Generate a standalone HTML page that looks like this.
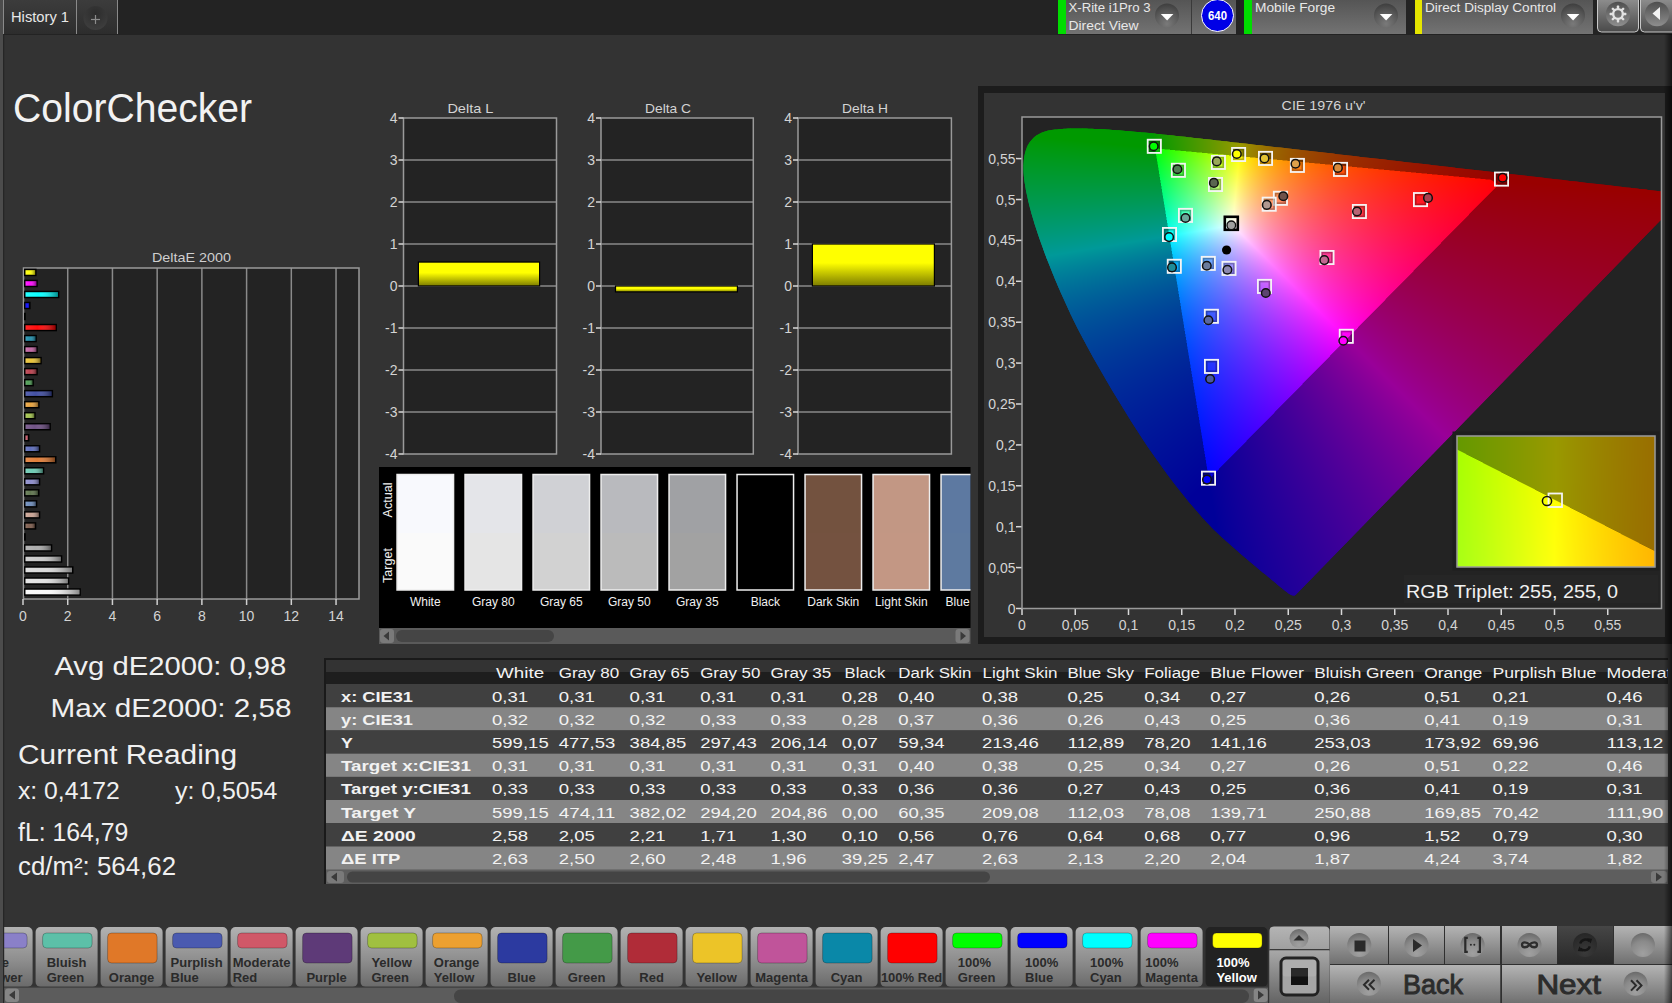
<!DOCTYPE html>
<html><head><meta charset="utf-8"><title>ColorChecker</title>
<style>html,body{margin:0;padding:0;background:#333;width:1672px;height:1003px;overflow:hidden;font-family:"Liberation Sans", sans-serif}
canvas{position:absolute}</style></head><body>
<svg width="1672" height="1003" style="position:absolute;left:0;top:0" font-family='"Liberation Sans", sans-serif'><defs><linearGradient id="tabg" x1="0" y1="0" x2="0" y2="1"><stop offset="0" stop-color="#3c3c3c"/><stop offset="1" stop-color="#2d2d2d"/></linearGradient><radialGradient id="plusg" cx="0.5" cy="0.3" r="0.7"><stop offset="0" stop-color="#2c2c2c"/><stop offset="1" stop-color="#3e3e3e"/></radialGradient><linearGradient id="boxg" x1="0" y1="0" x2="0" y2="1"><stop offset="0" stop-color="#555555"/><stop offset="1" stop-color="#737373"/></linearGradient><radialGradient id="ddg" cx="0.5" cy="0.85" r="0.9"><stop offset="0" stop-color="#7a7a7a"/><stop offset="0.55" stop-color="#5a5a5a"/><stop offset="1" stop-color="#3a3a3a"/></radialGradient><linearGradient id="gearbg" x1="0" y1="0" x2="0" y2="1"><stop offset="0" stop-color="#8c8c8c"/><stop offset="0.5" stop-color="#6a6a6a"/><stop offset="1" stop-color="#4a4a4a"/></linearGradient><linearGradient id="gcg" x1="0" y1="0" x2="0" y2="1"><stop offset="0" stop-color="#4e4e4e"/><stop offset="1" stop-color="#8e8e8e"/></linearGradient><linearGradient id="barshade" x1="0" y1="0" x2="1" y2="0"><stop offset="0" stop-color="#fff" stop-opacity="0.15"/><stop offset="0.4" stop-color="#fff" stop-opacity="0.05"/><stop offset="1" stop-color="#000" stop-opacity="0.45"/></linearGradient><linearGradient id="ybar" x1="0" y1="0" x2="0" y2="1"><stop offset="0" stop-color="#ffff00"/><stop offset="0.45" stop-color="#ffff00"/><stop offset="1" stop-color="#7c7c00"/></linearGradient><linearGradient id="ybar2" x1="0" y1="0" x2="0" y2="1"><stop offset="0" stop-color="#ffff00"/><stop offset="1" stop-color="#b0b000"/></linearGradient><linearGradient id="btng" x1="0" y1="0" x2="0" y2="1"><stop offset="0" stop-color="#b2b2b2"/><stop offset="0.55" stop-color="#8e8e8e"/><stop offset="1" stop-color="#6a6a6a"/></linearGradient><linearGradient id="ctlg" x1="0" y1="0" x2="0" y2="1"><stop offset="0" stop-color="#b4b4b4"/><stop offset="1" stop-color="#707070"/></linearGradient><linearGradient id="ctlg2" x1="0" y1="0" x2="0" y2="1"><stop offset="0" stop-color="#a8a8a8"/><stop offset="1" stop-color="#646464"/></linearGradient><linearGradient id="loopg" x1="0" y1="0" x2="0" y2="1"><stop offset="0" stop-color="#464646"/><stop offset="1" stop-color="#282828"/></linearGradient><radialGradient id="loopcg" cx="0.5" cy="0.8" r="0.8"><stop offset="0" stop-color="#3a3a3a"/><stop offset="1" stop-color="#262626"/></radialGradient><radialGradient id="cbg" cx="0.5" cy="0.85" r="0.85"><stop offset="0" stop-color="#a0a0a0"/><stop offset="0.6" stop-color="#8a8a8a"/><stop offset="1" stop-color="#6a6a6a"/></radialGradient><linearGradient id="edge" x1="0" y1="0" x2="1" y2="0"><stop offset="0" stop-color="#000" stop-opacity="0"/><stop offset="1" stop-color="#000" stop-opacity="0.6"/></linearGradient></defs><rect x="0.00" y="0.00" width="1672.00" height="1003.00" fill="#333333" /><rect x="0.00" y="0.00" width="1672.00" height="35.00" fill="#232323" /><rect x="0.00" y="0.00" width="3.00" height="1003.00" fill="#4c4c4c" /><rect x="3.00" y="0.00" width="73.00" height="34.00" fill="url(#tabg)" /><rect x="77.00" y="0.00" width="40.00" height="34.00" fill="url(#tabg)" /><line x1="3.50" y1="0.00" x2="3.50" y2="34.00" stroke="#8a8a8a" stroke-width="1" /><line x1="76.50" y1="0.00" x2="76.50" y2="34.00" stroke="#8a8a8a" stroke-width="1" /><line x1="117.50" y1="0.00" x2="117.50" y2="34.00" stroke="#8a8a8a" stroke-width="1" /><text x="11.00" y="22.00" font-size="14" fill="#e8e8e8" text-anchor="start" font-weight="normal" textLength="58.0" lengthAdjust="spacingAndGlyphs" >History 1</text><circle cx="95.5" cy="18" r="12" fill="url(#plusg)"/><line x1="91.00" y1="19.50" x2="100.00" y2="19.50" stroke="#8c8c8c" stroke-width="1.2" /><line x1="95.50" y1="15.00" x2="95.50" y2="24.00" stroke="#8c8c8c" stroke-width="1.2" /><rect x="1058.00" y="0.00" width="8.00" height="34.00" fill="#00dd00" /><rect x="1066.00" y="0.00" width="125.00" height="34.00" fill="url(#boxg)" /><rect x="1191.00" y="0.00" width="1.00" height="34.00" fill="#3a3a3a" /><rect x="1192.00" y="0.00" width="44.00" height="34.00" fill="url(#boxg)" /><text x="1068.50" y="11.50" font-size="12" fill="#e8e8e8" text-anchor="start" font-weight="normal" textLength="82.0" lengthAdjust="spacingAndGlyphs" >X-Rite i1Pro 3</text><text x="1068.50" y="29.50" font-size="12" fill="#e8e8e8" text-anchor="start" font-weight="normal" textLength="70.0" lengthAdjust="spacingAndGlyphs" >Direct View</text><circle cx="1167" cy="15.5" r="12" fill="url(#ddg)"/><path d="M1160.8,13.9 L1173.4,13.9 L1167.1,20.5 Z" fill="#fff"/><circle cx="1217.5" cy="15.5" r="16" fill="#0000e6" stroke="#fff" stroke-width="1"/><text x="1217.50" y="20.00" font-size="12" fill="#fff" text-anchor="middle" font-weight="bold" textLength="19.0" lengthAdjust="spacingAndGlyphs" >640</text><rect x="1244.00" y="0.00" width="8.00" height="34.00" fill="#00dd00" /><rect x="1252.00" y="0.00" width="154.00" height="34.00" fill="url(#boxg)" /><text x="1255.00" y="11.50" font-size="12" fill="#e8e8e8" text-anchor="start" font-weight="normal" textLength="80.0" lengthAdjust="spacingAndGlyphs" >Mobile Forge</text><circle cx="1386" cy="15.5" r="12" fill="url(#ddg)"/><path d="M1379.8,13.9 L1392.4,13.9 L1386.1,20.5 Z" fill="#fff"/><rect x="1415.00" y="0.00" width="7.00" height="34.00" fill="#e6e600" /><rect x="1422.00" y="0.00" width="171.00" height="34.00" fill="url(#boxg)" /><text x="1425.00" y="11.50" font-size="12" fill="#e8e8e8" text-anchor="start" font-weight="normal" textLength="131.0" lengthAdjust="spacingAndGlyphs" >Direct Display Control</text><circle cx="1573" cy="15.5" r="12" fill="url(#ddg)"/><path d="M1566.8,13.9 L1579.4,13.9 L1573.1,20.5 Z" fill="#fff"/><path d="M1597.5,0 V28 Q1597.5,32 1601.5,32 H1634.5 Q1638.5,32 1638.5,28 V0" fill="url(#gearbg)" stroke="#c8c8c8" stroke-width="1"/><path d="M1640.5,0 V28 Q1640.5,32 1644.5,32 H1672 V0 Z" fill="url(#gearbg)"/><path d="M1640.5,0 V28 Q1640.5,32 1644.5,32 H1672" fill="none" stroke="#c8c8c8" stroke-width="1"/><circle cx="1618" cy="14" r="12.2" fill="url(#gcg)"/><g transform="translate(1618,14)" fill="#e2e2e2"><rect x="-1.2" y="-8.4" width="2.4" height="3.6" rx="0.6" transform="rotate(0)"/><rect x="-1.2" y="-8.4" width="2.4" height="3.6" rx="0.6" transform="rotate(45)"/><rect x="-1.2" y="-8.4" width="2.4" height="3.6" rx="0.6" transform="rotate(90)"/><rect x="-1.2" y="-8.4" width="2.4" height="3.6" rx="0.6" transform="rotate(135)"/><rect x="-1.2" y="-8.4" width="2.4" height="3.6" rx="0.6" transform="rotate(180)"/><rect x="-1.2" y="-8.4" width="2.4" height="3.6" rx="0.6" transform="rotate(225)"/><rect x="-1.2" y="-8.4" width="2.4" height="3.6" rx="0.6" transform="rotate(270)"/><rect x="-1.2" y="-8.4" width="2.4" height="3.6" rx="0.6" transform="rotate(315)"/><circle r="4.85" fill="none" stroke="#e2e2e2" stroke-width="2.4"/></g><circle cx="1657" cy="14" r="12.2" fill="url(#gcg)"/><path d="M1652.5,13.5 L1660,7 L1660,20 Z" fill="#f4f4f4"/><text x="13.00" y="122.00" font-size="40" fill="#f2f2f2" text-anchor="start" font-weight="normal" textLength="239.0" lengthAdjust="spacingAndGlyphs" >ColorChecker</text><rect x="23.50" y="268.00" width="335.50" height="331.00" fill="#232323" /><text x="191.50" y="262.00" font-size="13.5" fill="#cfcfcf" text-anchor="middle" font-weight="normal" textLength="79.0" lengthAdjust="spacingAndGlyphs" >DeltaE 2000</text><line x1="67.72" y1="268.00" x2="67.72" y2="599.00" stroke="#8a8a8a" stroke-width="1.5" /><line x1="112.44" y1="268.00" x2="112.44" y2="599.00" stroke="#8a8a8a" stroke-width="1.5" /><line x1="157.16" y1="268.00" x2="157.16" y2="599.00" stroke="#8a8a8a" stroke-width="1.5" /><line x1="201.88" y1="268.00" x2="201.88" y2="599.00" stroke="#8a8a8a" stroke-width="1.5" /><line x1="246.60" y1="268.00" x2="246.60" y2="599.00" stroke="#8a8a8a" stroke-width="1.5" /><line x1="291.32" y1="268.00" x2="291.32" y2="599.00" stroke="#8a8a8a" stroke-width="1.5" /><line x1="336.04" y1="268.00" x2="336.04" y2="599.00" stroke="#8a8a8a" stroke-width="1.5" /><rect x="23.5" y="268" width="335.5" height="331" fill="none" stroke="#9a9a9a" stroke-width="1.5"/><line x1="23.00" y1="599.00" x2="23.00" y2="605.00" stroke="#d0d0d0" stroke-width="1.5" /><text x="23.00" y="621.00" font-size="14" fill="#d4d4d4" text-anchor="middle" font-weight="normal" >0</text><line x1="67.72" y1="599.00" x2="67.72" y2="605.00" stroke="#d0d0d0" stroke-width="1.5" /><text x="67.72" y="621.00" font-size="14" fill="#d4d4d4" text-anchor="middle" font-weight="normal" >2</text><line x1="112.44" y1="599.00" x2="112.44" y2="605.00" stroke="#d0d0d0" stroke-width="1.5" /><text x="112.44" y="621.00" font-size="14" fill="#d4d4d4" text-anchor="middle" font-weight="normal" >4</text><line x1="157.16" y1="599.00" x2="157.16" y2="605.00" stroke="#d0d0d0" stroke-width="1.5" /><text x="157.16" y="621.00" font-size="14" fill="#d4d4d4" text-anchor="middle" font-weight="normal" >6</text><line x1="201.88" y1="599.00" x2="201.88" y2="605.00" stroke="#d0d0d0" stroke-width="1.5" /><text x="201.88" y="621.00" font-size="14" fill="#d4d4d4" text-anchor="middle" font-weight="normal" >8</text><line x1="246.60" y1="599.00" x2="246.60" y2="605.00" stroke="#d0d0d0" stroke-width="1.5" /><text x="246.60" y="621.00" font-size="14" fill="#d4d4d4" text-anchor="middle" font-weight="normal" >10</text><line x1="291.32" y1="599.00" x2="291.32" y2="605.00" stroke="#d0d0d0" stroke-width="1.5" /><text x="291.32" y="621.00" font-size="14" fill="#d4d4d4" text-anchor="middle" font-weight="normal" >12</text><line x1="336.04" y1="599.00" x2="336.04" y2="605.00" stroke="#d0d0d0" stroke-width="1.5" /><text x="336.04" y="621.00" font-size="14" fill="#d4d4d4" text-anchor="middle" font-weight="normal" >14</text><rect x="24.75" y="269.45" width="11.10" height="6" fill="#ffff00" stroke="#000" stroke-width="1.5"/><rect x="25.5" y="270.20" width="9.60" height="4.5" fill="url(#barshade)"/><rect x="24.75" y="280.47" width="12.30" height="6" fill="#ff00ff" stroke="#000" stroke-width="1.5"/><rect x="25.5" y="281.22" width="10.80" height="4.5" fill="url(#barshade)"/><rect x="24.75" y="291.49" width="33.90" height="6" fill="#00ffff" stroke="#000" stroke-width="1.5"/><rect x="25.5" y="292.24" width="32.40" height="4.5" fill="url(#barshade)"/><rect x="24.75" y="302.51" width="5.10" height="6" fill="#0000ff" stroke="#000" stroke-width="1.5"/><rect x="25.5" y="303.26" width="3.60" height="4.5" fill="url(#barshade)"/><rect x="24.75" y="313.53" width="0.30" height="6" fill="#00ff00" stroke="#000" stroke-width="1.5"/><rect x="24.75" y="324.55" width="31.50" height="6" fill="#ff0000" stroke="#000" stroke-width="1.5"/><rect x="25.5" y="325.30" width="30.00" height="4.5" fill="url(#barshade)"/><rect x="24.75" y="335.57" width="11.40" height="6" fill="#1a8aa8" stroke="#000" stroke-width="1.5"/><rect x="25.5" y="336.32" width="9.90" height="4.5" fill="url(#barshade)"/><rect x="24.75" y="346.59" width="12.30" height="6" fill="#c060a0" stroke="#000" stroke-width="1.5"/><rect x="25.5" y="347.34" width="10.80" height="4.5" fill="url(#barshade)"/><rect x="24.75" y="357.61" width="16.30" height="6" fill="#e8c030" stroke="#000" stroke-width="1.5"/><rect x="25.5" y="358.36" width="14.80" height="4.5" fill="url(#barshade)"/><rect x="24.75" y="368.63" width="12.30" height="6" fill="#b83a48" stroke="#000" stroke-width="1.5"/><rect x="25.5" y="369.38" width="10.80" height="4.5" fill="url(#barshade)"/><rect x="24.75" y="379.65" width="8.40" height="6" fill="#4a9a50" stroke="#000" stroke-width="1.5"/><rect x="25.5" y="380.40" width="6.90" height="4.5" fill="url(#barshade)"/><rect x="24.75" y="390.67" width="27.60" height="6" fill="#3a48a0" stroke="#000" stroke-width="1.5"/><rect x="25.5" y="391.42" width="26.10" height="4.5" fill="url(#barshade)"/><rect x="24.75" y="401.69" width="14.10" height="6" fill="#e8a038" stroke="#000" stroke-width="1.5"/><rect x="25.5" y="402.44" width="12.60" height="4.5" fill="url(#barshade)"/><rect x="24.75" y="412.71" width="10.20" height="6" fill="#a0c048" stroke="#000" stroke-width="1.5"/><rect x="25.5" y="413.46" width="8.70" height="4.5" fill="url(#barshade)"/><rect x="24.75" y="423.73" width="25.40" height="6" fill="#6a4a80" stroke="#000" stroke-width="1.5"/><rect x="25.5" y="424.48" width="23.90" height="4.5" fill="url(#barshade)"/><rect x="24.75" y="434.75" width="3.90" height="6" fill="#c85868" stroke="#000" stroke-width="1.5"/><rect x="25.5" y="435.50" width="2.40" height="4.5" fill="url(#barshade)"/><rect x="24.75" y="445.77" width="14.80" height="6" fill="#5868b8" stroke="#000" stroke-width="1.5"/><rect x="25.5" y="446.52" width="13.30" height="4.5" fill="url(#barshade)"/><rect x="24.75" y="456.79" width="31.00" height="6" fill="#e07830" stroke="#000" stroke-width="1.5"/><rect x="25.5" y="457.54" width="29.50" height="4.5" fill="url(#barshade)"/><rect x="24.75" y="467.81" width="18.80" height="6" fill="#68c8b0" stroke="#000" stroke-width="1.5"/><rect x="25.5" y="468.56" width="17.30" height="4.5" fill="url(#barshade)"/><rect x="24.75" y="478.83" width="14.80" height="6" fill="#8888c8" stroke="#000" stroke-width="1.5"/><rect x="25.5" y="479.58" width="13.30" height="4.5" fill="url(#barshade)"/><rect x="24.75" y="489.85" width="14.00" height="6" fill="#5a7048" stroke="#000" stroke-width="1.5"/><rect x="25.5" y="490.60" width="12.50" height="4.5" fill="url(#barshade)"/><rect x="24.75" y="500.87" width="11.80" height="6" fill="#6888b8" stroke="#000" stroke-width="1.5"/><rect x="25.5" y="501.62" width="10.30" height="4.5" fill="url(#barshade)"/><rect x="24.75" y="511.89" width="14.80" height="6" fill="#c8a090" stroke="#000" stroke-width="1.5"/><rect x="25.5" y="512.64" width="13.30" height="4.5" fill="url(#barshade)"/><rect x="24.75" y="522.91" width="10.80" height="6" fill="#7a5848" stroke="#000" stroke-width="1.5"/><rect x="25.5" y="523.66" width="9.30" height="4.5" fill="url(#barshade)"/><rect x="24.75" y="533.93" width="0.30" height="6" fill="#000000" stroke="#000" stroke-width="1.5"/><rect x="24.75" y="544.95" width="26.80" height="6" fill="#a8a8a8" stroke="#000" stroke-width="1.5"/><rect x="25.5" y="545.70" width="25.30" height="4.5" fill="url(#barshade)"/><rect x="24.75" y="555.97" width="36.80" height="6" fill="#c8c8c8" stroke="#000" stroke-width="1.5"/><rect x="25.5" y="556.72" width="35.30" height="4.5" fill="url(#barshade)"/><rect x="24.75" y="566.99" width="48.00" height="6" fill="#d8d8d8" stroke="#000" stroke-width="1.5"/><rect x="25.5" y="567.74" width="46.50" height="4.5" fill="url(#barshade)"/><rect x="24.75" y="578.01" width="43.80" height="6" fill="#e0e0e0" stroke="#000" stroke-width="1.5"/><rect x="25.5" y="578.76" width="42.30" height="4.5" fill="url(#barshade)"/><rect x="24.75" y="589.03" width="55.40" height="6" fill="#f8f8f8" stroke="#000" stroke-width="1.5"/><rect x="25.5" y="589.78" width="53.90" height="4.5" fill="url(#barshade)"/><rect x="403.50" y="118.00" width="153.00" height="336.00" fill="#232323" /><text x="470.40" y="113.00" font-size="13.5" fill="#d4d4d4" text-anchor="middle" font-weight="normal" textLength="46.0" lengthAdjust="spacingAndGlyphs" >Delta L</text><line x1="403.50" y1="412.00" x2="556.50" y2="412.00" stroke="#8a8a8a" stroke-width="1.5" /><line x1="403.50" y1="370.00" x2="556.50" y2="370.00" stroke="#8a8a8a" stroke-width="1.5" /><line x1="403.50" y1="328.00" x2="556.50" y2="328.00" stroke="#8a8a8a" stroke-width="1.5" /><line x1="403.50" y1="286.00" x2="556.50" y2="286.00" stroke="#8a8a8a" stroke-width="1.5" /><line x1="403.50" y1="244.00" x2="556.50" y2="244.00" stroke="#8a8a8a" stroke-width="1.5" /><line x1="403.50" y1="202.00" x2="556.50" y2="202.00" stroke="#8a8a8a" stroke-width="1.5" /><line x1="403.50" y1="160.00" x2="556.50" y2="160.00" stroke="#8a8a8a" stroke-width="1.5" /><rect x="403.5" y="118" width="153.0" height="336" fill="none" stroke="#9a9a9a" stroke-width="1.5"/><line x1="398.50" y1="454.00" x2="403.50" y2="454.00" stroke="#d8d8d8" stroke-width="1.5" /><text x="397.50" y="459.00" font-size="14" fill="#d4d4d4" text-anchor="end" font-weight="normal" >-4</text><line x1="398.50" y1="412.00" x2="403.50" y2="412.00" stroke="#d8d8d8" stroke-width="1.5" /><text x="397.50" y="417.00" font-size="14" fill="#d4d4d4" text-anchor="end" font-weight="normal" >-3</text><line x1="398.50" y1="370.00" x2="403.50" y2="370.00" stroke="#d8d8d8" stroke-width="1.5" /><text x="397.50" y="375.00" font-size="14" fill="#d4d4d4" text-anchor="end" font-weight="normal" >-2</text><line x1="398.50" y1="328.00" x2="403.50" y2="328.00" stroke="#d8d8d8" stroke-width="1.5" /><text x="397.50" y="333.00" font-size="14" fill="#d4d4d4" text-anchor="end" font-weight="normal" >-1</text><line x1="398.50" y1="286.00" x2="403.50" y2="286.00" stroke="#d8d8d8" stroke-width="1.5" /><text x="397.50" y="291.00" font-size="14" fill="#d4d4d4" text-anchor="end" font-weight="normal" >0</text><line x1="398.50" y1="244.00" x2="403.50" y2="244.00" stroke="#d8d8d8" stroke-width="1.5" /><text x="397.50" y="249.00" font-size="14" fill="#d4d4d4" text-anchor="end" font-weight="normal" >1</text><line x1="398.50" y1="202.00" x2="403.50" y2="202.00" stroke="#d8d8d8" stroke-width="1.5" /><text x="397.50" y="207.00" font-size="14" fill="#d4d4d4" text-anchor="end" font-weight="normal" >2</text><line x1="398.50" y1="160.00" x2="403.50" y2="160.00" stroke="#d8d8d8" stroke-width="1.5" /><text x="397.50" y="165.00" font-size="14" fill="#d4d4d4" text-anchor="end" font-weight="normal" >3</text><line x1="398.50" y1="118.00" x2="403.50" y2="118.00" stroke="#d8d8d8" stroke-width="1.5" /><text x="397.50" y="123.00" font-size="14" fill="#d4d4d4" text-anchor="end" font-weight="normal" >4</text><rect x="418.4" y="262.06" width="121.2" height="23.9" fill="url(#ybar)" stroke="#000" stroke-width="1.2"/><rect x="601.00" y="118.00" width="152.30" height="336.00" fill="#232323" /><text x="668.00" y="113.00" font-size="13.5" fill="#d4d4d4" text-anchor="middle" font-weight="normal" textLength="46.0" lengthAdjust="spacingAndGlyphs" >Delta C</text><line x1="601.00" y1="412.00" x2="753.30" y2="412.00" stroke="#8a8a8a" stroke-width="1.5" /><line x1="601.00" y1="370.00" x2="753.30" y2="370.00" stroke="#8a8a8a" stroke-width="1.5" /><line x1="601.00" y1="328.00" x2="753.30" y2="328.00" stroke="#8a8a8a" stroke-width="1.5" /><line x1="601.00" y1="286.00" x2="753.30" y2="286.00" stroke="#8a8a8a" stroke-width="1.5" /><line x1="601.00" y1="244.00" x2="753.30" y2="244.00" stroke="#8a8a8a" stroke-width="1.5" /><line x1="601.00" y1="202.00" x2="753.30" y2="202.00" stroke="#8a8a8a" stroke-width="1.5" /><line x1="601.00" y1="160.00" x2="753.30" y2="160.00" stroke="#8a8a8a" stroke-width="1.5" /><rect x="601" y="118" width="152.3" height="336" fill="none" stroke="#9a9a9a" stroke-width="1.5"/><line x1="596.00" y1="454.00" x2="601.00" y2="454.00" stroke="#d8d8d8" stroke-width="1.5" /><text x="595.00" y="459.00" font-size="14" fill="#d4d4d4" text-anchor="end" font-weight="normal" >-4</text><line x1="596.00" y1="412.00" x2="601.00" y2="412.00" stroke="#d8d8d8" stroke-width="1.5" /><text x="595.00" y="417.00" font-size="14" fill="#d4d4d4" text-anchor="end" font-weight="normal" >-3</text><line x1="596.00" y1="370.00" x2="601.00" y2="370.00" stroke="#d8d8d8" stroke-width="1.5" /><text x="595.00" y="375.00" font-size="14" fill="#d4d4d4" text-anchor="end" font-weight="normal" >-2</text><line x1="596.00" y1="328.00" x2="601.00" y2="328.00" stroke="#d8d8d8" stroke-width="1.5" /><text x="595.00" y="333.00" font-size="14" fill="#d4d4d4" text-anchor="end" font-weight="normal" >-1</text><line x1="596.00" y1="286.00" x2="601.00" y2="286.00" stroke="#d8d8d8" stroke-width="1.5" /><text x="595.00" y="291.00" font-size="14" fill="#d4d4d4" text-anchor="end" font-weight="normal" >0</text><line x1="596.00" y1="244.00" x2="601.00" y2="244.00" stroke="#d8d8d8" stroke-width="1.5" /><text x="595.00" y="249.00" font-size="14" fill="#d4d4d4" text-anchor="end" font-weight="normal" >1</text><line x1="596.00" y1="202.00" x2="601.00" y2="202.00" stroke="#d8d8d8" stroke-width="1.5" /><text x="595.00" y="207.00" font-size="14" fill="#d4d4d4" text-anchor="end" font-weight="normal" >2</text><line x1="596.00" y1="160.00" x2="601.00" y2="160.00" stroke="#d8d8d8" stroke-width="1.5" /><text x="595.00" y="165.00" font-size="14" fill="#d4d4d4" text-anchor="end" font-weight="normal" >3</text><line x1="596.00" y1="118.00" x2="601.00" y2="118.00" stroke="#d8d8d8" stroke-width="1.5" /><text x="595.00" y="123.00" font-size="14" fill="#d4d4d4" text-anchor="end" font-weight="normal" >4</text><rect x="615.5" y="286.0" width="121.9" height="5.9" fill="url(#ybar)" stroke="#000" stroke-width="1.2"/><rect x="798.00" y="118.00" width="153.40" height="336.00" fill="#232323" /><text x="865.00" y="113.00" font-size="13.5" fill="#d4d4d4" text-anchor="middle" font-weight="normal" textLength="46.0" lengthAdjust="spacingAndGlyphs" >Delta H</text><line x1="798.00" y1="412.00" x2="951.40" y2="412.00" stroke="#8a8a8a" stroke-width="1.5" /><line x1="798.00" y1="370.00" x2="951.40" y2="370.00" stroke="#8a8a8a" stroke-width="1.5" /><line x1="798.00" y1="328.00" x2="951.40" y2="328.00" stroke="#8a8a8a" stroke-width="1.5" /><line x1="798.00" y1="286.00" x2="951.40" y2="286.00" stroke="#8a8a8a" stroke-width="1.5" /><line x1="798.00" y1="244.00" x2="951.40" y2="244.00" stroke="#8a8a8a" stroke-width="1.5" /><line x1="798.00" y1="202.00" x2="951.40" y2="202.00" stroke="#8a8a8a" stroke-width="1.5" /><line x1="798.00" y1="160.00" x2="951.40" y2="160.00" stroke="#8a8a8a" stroke-width="1.5" /><rect x="798" y="118" width="153.4" height="336" fill="none" stroke="#9a9a9a" stroke-width="1.5"/><line x1="793.00" y1="454.00" x2="798.00" y2="454.00" stroke="#d8d8d8" stroke-width="1.5" /><text x="792.00" y="459.00" font-size="14" fill="#d4d4d4" text-anchor="end" font-weight="normal" >-4</text><line x1="793.00" y1="412.00" x2="798.00" y2="412.00" stroke="#d8d8d8" stroke-width="1.5" /><text x="792.00" y="417.00" font-size="14" fill="#d4d4d4" text-anchor="end" font-weight="normal" >-3</text><line x1="793.00" y1="370.00" x2="798.00" y2="370.00" stroke="#d8d8d8" stroke-width="1.5" /><text x="792.00" y="375.00" font-size="14" fill="#d4d4d4" text-anchor="end" font-weight="normal" >-2</text><line x1="793.00" y1="328.00" x2="798.00" y2="328.00" stroke="#d8d8d8" stroke-width="1.5" /><text x="792.00" y="333.00" font-size="14" fill="#d4d4d4" text-anchor="end" font-weight="normal" >-1</text><line x1="793.00" y1="286.00" x2="798.00" y2="286.00" stroke="#d8d8d8" stroke-width="1.5" /><text x="792.00" y="291.00" font-size="14" fill="#d4d4d4" text-anchor="end" font-weight="normal" >0</text><line x1="793.00" y1="244.00" x2="798.00" y2="244.00" stroke="#d8d8d8" stroke-width="1.5" /><text x="792.00" y="249.00" font-size="14" fill="#d4d4d4" text-anchor="end" font-weight="normal" >1</text><line x1="793.00" y1="202.00" x2="798.00" y2="202.00" stroke="#d8d8d8" stroke-width="1.5" /><text x="792.00" y="207.00" font-size="14" fill="#d4d4d4" text-anchor="end" font-weight="normal" >2</text><line x1="793.00" y1="160.00" x2="798.00" y2="160.00" stroke="#d8d8d8" stroke-width="1.5" /><text x="792.00" y="165.00" font-size="14" fill="#d4d4d4" text-anchor="end" font-weight="normal" >3</text><line x1="793.00" y1="118.00" x2="798.00" y2="118.00" stroke="#d8d8d8" stroke-width="1.5" /><text x="792.00" y="123.00" font-size="14" fill="#d4d4d4" text-anchor="end" font-weight="normal" >4</text><rect x="812.4" y="244.0" width="122.0" height="42.0" fill="url(#ybar)" stroke="#000" stroke-width="1.2"/><rect x="379.00" y="467.00" width="591.50" height="161.00" fill="#000000" /><clipPath id="swclip"><rect x="379" y="467" width="591.5" height="161"/></clipPath><g clip-path="url(#swclip)"><rect x="397.05" y="474.5" width="56.5" height="58.5" fill="#f8f9fd"/><rect x="397.05" y="533" width="56.5" height="57" fill="#fafafa"/><rect x="397.05" y="474.5" width="56.5" height="115.5" fill="none" stroke="#eeeeee" stroke-width="1.5"/><text x="425.3" y="605.8" font-size="12" fill="#f0f0f0" text-anchor="middle">White</text><rect x="465.05" y="474.5" width="56.5" height="58.5" fill="#e4e5e9"/><rect x="465.05" y="533" width="56.5" height="57" fill="#e5e5e5"/><rect x="465.05" y="474.5" width="56.5" height="115.5" fill="none" stroke="#eeeeee" stroke-width="1.5"/><text x="493.3" y="605.8" font-size="12" fill="#f0f0f0" text-anchor="middle">Gray 80</text><rect x="533.05" y="474.5" width="56.5" height="58.5" fill="#d0d1d5"/><rect x="533.05" y="533" width="56.5" height="57" fill="#d2d2d2"/><rect x="533.05" y="474.5" width="56.5" height="115.5" fill="none" stroke="#eeeeee" stroke-width="1.5"/><text x="561.3" y="605.8" font-size="12" fill="#f0f0f0" text-anchor="middle">Gray 65</text><rect x="601.05" y="474.5" width="56.5" height="58.5" fill="#b9babe"/><rect x="601.05" y="533" width="56.5" height="57" fill="#bbbbbb"/><rect x="601.05" y="474.5" width="56.5" height="115.5" fill="none" stroke="#eeeeee" stroke-width="1.5"/><text x="629.3" y="605.8" font-size="12" fill="#f0f0f0" text-anchor="middle">Gray 50</text><rect x="669.05" y="474.5" width="56.5" height="58.5" fill="#a0a1a4"/><rect x="669.05" y="533" width="56.5" height="57" fill="#a2a2a2"/><rect x="669.05" y="474.5" width="56.5" height="115.5" fill="none" stroke="#eeeeee" stroke-width="1.5"/><text x="697.3" y="605.8" font-size="12" fill="#f0f0f0" text-anchor="middle">Gray 35</text><rect x="737.05" y="474.5" width="56.5" height="58.5" fill="#000000"/><rect x="737.05" y="533" width="56.5" height="57" fill="#000000"/><rect x="737.05" y="474.5" width="56.5" height="115.5" fill="none" stroke="#eeeeee" stroke-width="1.5"/><text x="765.3" y="605.8" font-size="12" fill="#f0f0f0" text-anchor="middle">Black</text><rect x="805.05" y="474.5" width="56.5" height="58.5" fill="#73523f"/><rect x="805.05" y="533" width="56.5" height="57" fill="#745240"/><rect x="805.05" y="474.5" width="56.5" height="115.5" fill="none" stroke="#eeeeee" stroke-width="1.5"/><text x="833.3" y="605.8" font-size="12" fill="#f0f0f0" text-anchor="middle">Dark Skin</text><rect x="873.05" y="474.5" width="56.5" height="58.5" fill="#c29784"/><rect x="873.05" y="533" width="56.5" height="57" fill="#c39784"/><rect x="873.05" y="474.5" width="56.5" height="115.5" fill="none" stroke="#eeeeee" stroke-width="1.5"/><text x="901.3" y="605.8" font-size="12" fill="#f0f0f0" text-anchor="middle">Light Skin</text><rect x="941.05" y="474.5" width="56.5" height="58.5" fill="#5d79a1"/><rect x="941.05" y="533" width="56.5" height="57" fill="#5e7aa0"/><rect x="941.05" y="474.5" width="56.5" height="115.5" fill="none" stroke="#eeeeee" stroke-width="1.5"/><text x="969.3" y="605.8" font-size="12" fill="#f0f0f0" text-anchor="middle">Blue Sky</text></g><text transform="translate(392,500) rotate(-90)" font-size="12" fill="#f0f0f0" text-anchor="middle" textLength="35" lengthAdjust="spacingAndGlyphs">Actual</text><text transform="translate(392,565.5) rotate(-90)" font-size="12" fill="#f0f0f0" text-anchor="middle" textLength="35" lengthAdjust="spacingAndGlyphs">Target</text><rect x="379.00" y="628.00" width="591.50" height="16.00" fill="#5a5a5a" /><rect x="380" y="629" width="14" height="14" rx="3" fill="#7a7a7a"/><path d="M383.5,636 L389,631.5 L389,640.5 Z" fill="#3a3a3a"/><rect x="396" y="630" width="158" height="12" rx="6" fill="#454545"/><rect x="955.5" y="629" width="14" height="14" rx="3" fill="#7a7a7a"/><path d="M966,636 L960.5,631.5 L960.5,640.5 Z" fill="#3a3a3a"/><rect x="978.00" y="86.00" width="694.00" height="558.00" fill="#1c1c1c" /><rect x="984.00" y="93.00" width="681.00" height="544.00" fill="#333333" /><text x="1323.60" y="110.00" font-size="13" fill="#d4d4d4" text-anchor="middle" font-weight="normal" textLength="84.0" lengthAdjust="spacingAndGlyphs" >CIE 1976 u'v'</text><rect x="1022.00" y="117.00" width="639.50" height="491.50" fill="#232323" /><line x1="1016.00" y1="608.50" x2="1022.00" y2="608.50" stroke="#d8d8d8" stroke-width="1.5" /><text x="1015.50" y="613.50" font-size="14" fill="#d4d4d4" text-anchor="end" font-weight="normal" >0</text><line x1="1022.00" y1="608.50" x2="1022.00" y2="615.00" stroke="#d8d8d8" stroke-width="1.5" /><text x="1022.00" y="630.00" font-size="14" fill="#d4d4d4" text-anchor="middle" font-weight="normal" >0</text><line x1="1016.00" y1="567.60" x2="1022.00" y2="567.60" stroke="#d8d8d8" stroke-width="1.5" /><text x="1015.50" y="572.60" font-size="14" fill="#d4d4d4" text-anchor="end" font-weight="normal" >0,05</text><line x1="1075.25" y1="608.50" x2="1075.25" y2="615.00" stroke="#d8d8d8" stroke-width="1.5" /><text x="1075.25" y="630.00" font-size="14" fill="#d4d4d4" text-anchor="middle" font-weight="normal" >0,05</text><line x1="1016.00" y1="526.70" x2="1022.00" y2="526.70" stroke="#d8d8d8" stroke-width="1.5" /><text x="1015.50" y="531.70" font-size="14" fill="#d4d4d4" text-anchor="end" font-weight="normal" >0,1</text><line x1="1128.50" y1="608.50" x2="1128.50" y2="615.00" stroke="#d8d8d8" stroke-width="1.5" /><text x="1128.50" y="630.00" font-size="14" fill="#d4d4d4" text-anchor="middle" font-weight="normal" >0,1</text><line x1="1016.00" y1="485.80" x2="1022.00" y2="485.80" stroke="#d8d8d8" stroke-width="1.5" /><text x="1015.50" y="490.80" font-size="14" fill="#d4d4d4" text-anchor="end" font-weight="normal" >0,15</text><line x1="1181.75" y1="608.50" x2="1181.75" y2="615.00" stroke="#d8d8d8" stroke-width="1.5" /><text x="1181.75" y="630.00" font-size="14" fill="#d4d4d4" text-anchor="middle" font-weight="normal" >0,15</text><line x1="1016.00" y1="444.90" x2="1022.00" y2="444.90" stroke="#d8d8d8" stroke-width="1.5" /><text x="1015.50" y="449.90" font-size="14" fill="#d4d4d4" text-anchor="end" font-weight="normal" >0,2</text><line x1="1235.00" y1="608.50" x2="1235.00" y2="615.00" stroke="#d8d8d8" stroke-width="1.5" /><text x="1235.00" y="630.00" font-size="14" fill="#d4d4d4" text-anchor="middle" font-weight="normal" >0,2</text><line x1="1016.00" y1="404.00" x2="1022.00" y2="404.00" stroke="#d8d8d8" stroke-width="1.5" /><text x="1015.50" y="409.00" font-size="14" fill="#d4d4d4" text-anchor="end" font-weight="normal" >0,25</text><line x1="1288.25" y1="608.50" x2="1288.25" y2="615.00" stroke="#d8d8d8" stroke-width="1.5" /><text x="1288.25" y="630.00" font-size="14" fill="#d4d4d4" text-anchor="middle" font-weight="normal" >0,25</text><line x1="1016.00" y1="363.10" x2="1022.00" y2="363.10" stroke="#d8d8d8" stroke-width="1.5" /><text x="1015.50" y="368.10" font-size="14" fill="#d4d4d4" text-anchor="end" font-weight="normal" >0,3</text><line x1="1341.50" y1="608.50" x2="1341.50" y2="615.00" stroke="#d8d8d8" stroke-width="1.5" /><text x="1341.50" y="630.00" font-size="14" fill="#d4d4d4" text-anchor="middle" font-weight="normal" >0,3</text><line x1="1016.00" y1="322.20" x2="1022.00" y2="322.20" stroke="#d8d8d8" stroke-width="1.5" /><text x="1015.50" y="327.20" font-size="14" fill="#d4d4d4" text-anchor="end" font-weight="normal" >0,35</text><line x1="1394.75" y1="608.50" x2="1394.75" y2="615.00" stroke="#d8d8d8" stroke-width="1.5" /><text x="1394.75" y="630.00" font-size="14" fill="#d4d4d4" text-anchor="middle" font-weight="normal" >0,35</text><line x1="1016.00" y1="281.30" x2="1022.00" y2="281.30" stroke="#d8d8d8" stroke-width="1.5" /><text x="1015.50" y="286.30" font-size="14" fill="#d4d4d4" text-anchor="end" font-weight="normal" >0,4</text><line x1="1448.00" y1="608.50" x2="1448.00" y2="615.00" stroke="#d8d8d8" stroke-width="1.5" /><text x="1448.00" y="630.00" font-size="14" fill="#d4d4d4" text-anchor="middle" font-weight="normal" >0,4</text><line x1="1016.00" y1="240.40" x2="1022.00" y2="240.40" stroke="#d8d8d8" stroke-width="1.5" /><text x="1015.50" y="245.40" font-size="14" fill="#d4d4d4" text-anchor="end" font-weight="normal" >0,45</text><line x1="1501.25" y1="608.50" x2="1501.25" y2="615.00" stroke="#d8d8d8" stroke-width="1.5" /><text x="1501.25" y="630.00" font-size="14" fill="#d4d4d4" text-anchor="middle" font-weight="normal" >0,45</text><line x1="1016.00" y1="199.50" x2="1022.00" y2="199.50" stroke="#d8d8d8" stroke-width="1.5" /><text x="1015.50" y="204.50" font-size="14" fill="#d4d4d4" text-anchor="end" font-weight="normal" >0,5</text><line x1="1554.50" y1="608.50" x2="1554.50" y2="615.00" stroke="#d8d8d8" stroke-width="1.5" /><text x="1554.50" y="630.00" font-size="14" fill="#d4d4d4" text-anchor="middle" font-weight="normal" >0,5</text><line x1="1016.00" y1="158.60" x2="1022.00" y2="158.60" stroke="#d8d8d8" stroke-width="1.5" /><text x="1015.50" y="163.60" font-size="14" fill="#d4d4d4" text-anchor="end" font-weight="normal" >0,55</text><line x1="1607.75" y1="608.50" x2="1607.75" y2="615.00" stroke="#d8d8d8" stroke-width="1.5" /><text x="1607.75" y="630.00" font-size="14" fill="#d4d4d4" text-anchor="middle" font-weight="normal" >0,55</text><text x="54.40" y="675.00" font-size="26.5" fill="#f0f0f0" text-anchor="start" font-weight="normal" textLength="232.0" lengthAdjust="spacingAndGlyphs" >Avg dE2000: 0,98</text><text x="50.50" y="716.50" font-size="26.5" fill="#f0f0f0" text-anchor="start" font-weight="normal" textLength="241.0" lengthAdjust="spacingAndGlyphs" >Max dE2000: 2,58</text><text x="18.00" y="764.40" font-size="27" fill="#f0f0f0" text-anchor="start" font-weight="normal" textLength="219.0" lengthAdjust="spacingAndGlyphs" >Current Reading</text><text x="18.00" y="798.60" font-size="23" fill="#f0f0f0" text-anchor="start" font-weight="normal" textLength="101.7" lengthAdjust="spacingAndGlyphs" >x: 0,4172</text><text x="175.00" y="798.60" font-size="23" fill="#f0f0f0" text-anchor="start" font-weight="normal" textLength="102.3" lengthAdjust="spacingAndGlyphs" >y: 0,5054</text><text x="18.00" y="840.90" font-size="25" fill="#f0f0f0" text-anchor="start" font-weight="normal" textLength="110.3" lengthAdjust="spacingAndGlyphs" >fL: 164,79</text><text x="18.00" y="874.60" font-size="25" fill="#f0f0f0" text-anchor="start" font-weight="normal" textLength="158.0" lengthAdjust="spacingAndGlyphs" >cd/m²: 564,62</text><rect x="324.00" y="658.00" width="1344.00" height="226.00" fill="#1a1a1a" /><rect x="326.00" y="660.00" width="1342.00" height="12.00" fill="#333333" /><rect x="326.00" y="672.00" width="1342.00" height="12.00" fill="#1e1e1e" /><clipPath id="tclip"><rect x="326" y="660" width="1342" height="210"/></clipPath><g clip-path="url(#tclip)"><rect x="326" y="684.0" width="1342" height="23.4" fill="#404040"/><text x="341" y="701.5" font-size="14.7" font-weight="bold" fill="#f2f2f2" textLength="72" lengthAdjust="spacingAndGlyphs">x: CIE31</text><rect x="326" y="707.2" width="1342" height="23.4" fill="#858585"/><text x="341" y="724.7" font-size="14.7" font-weight="bold" fill="#f2f2f2" textLength="72" lengthAdjust="spacingAndGlyphs">y: CIE31</text><rect x="326" y="730.4" width="1342" height="23.4" fill="#404040"/><text x="341" y="747.9" font-size="14.7" font-weight="bold" fill="#f2f2f2" textLength="11.8" lengthAdjust="spacingAndGlyphs">Y</text><rect x="326" y="753.6" width="1342" height="23.4" fill="#858585"/><text x="341" y="771.1" font-size="14.7" font-weight="bold" fill="#f2f2f2" textLength="130" lengthAdjust="spacingAndGlyphs">Target x:CIE31</text><rect x="326" y="776.8" width="1342" height="23.4" fill="#404040"/><text x="341" y="794.3" font-size="14.7" font-weight="bold" fill="#f2f2f2" textLength="130" lengthAdjust="spacingAndGlyphs">Target y:CIE31</text><rect x="326" y="800.0" width="1342" height="23.4" fill="#858585"/><text x="341" y="817.5" font-size="14.7" font-weight="bold" fill="#f2f2f2" textLength="75.2" lengthAdjust="spacingAndGlyphs">Target Y</text><rect x="326" y="823.2" width="1342" height="23.4" fill="#404040"/><text x="341" y="840.7" font-size="14.7" font-weight="bold" fill="#f2f2f2" textLength="74.8" lengthAdjust="spacingAndGlyphs">ΔE 2000</text><rect x="326" y="846.4" width="1342" height="23.4" fill="#858585"/><text x="341" y="863.9" font-size="14.7" font-weight="bold" fill="#f2f2f2" textLength="59.4" lengthAdjust="spacingAndGlyphs">ΔE ITP</text><text x="496.1" y="677.5" font-size="14" fill="#f2f2f2" textLength="48" lengthAdjust="spacingAndGlyphs">White</text><text x="492.0" y="701.5" font-size="14.5" fill="#f2f2f2" textLength="36.1" lengthAdjust="spacingAndGlyphs">0,31</text><text x="492.0" y="724.7" font-size="14.5" fill="#f2f2f2" textLength="36.1" lengthAdjust="spacingAndGlyphs">0,32</text><text x="492.0" y="747.9" font-size="14.5" fill="#f2f2f2" textLength="56.7" lengthAdjust="spacingAndGlyphs">599,15</text><text x="492.0" y="771.1" font-size="14.5" fill="#f2f2f2" textLength="36.1" lengthAdjust="spacingAndGlyphs">0,31</text><text x="492.0" y="794.3" font-size="14.5" fill="#f2f2f2" textLength="36.1" lengthAdjust="spacingAndGlyphs">0,33</text><text x="492.0" y="817.5" font-size="14.5" fill="#f2f2f2" textLength="56.7" lengthAdjust="spacingAndGlyphs">599,15</text><text x="492.0" y="840.7" font-size="14.5" fill="#f2f2f2" textLength="36.1" lengthAdjust="spacingAndGlyphs">2,58</text><text x="492.0" y="863.9" font-size="14.5" fill="#f2f2f2" textLength="36.1" lengthAdjust="spacingAndGlyphs">2,63</text><text x="558.7" y="677.5" font-size="14" fill="#f2f2f2" textLength="60.6" lengthAdjust="spacingAndGlyphs">Gray 80</text><text x="558.7" y="701.5" font-size="14.5" fill="#f2f2f2" textLength="36.1" lengthAdjust="spacingAndGlyphs">0,31</text><text x="558.7" y="724.7" font-size="14.5" fill="#f2f2f2" textLength="36.1" lengthAdjust="spacingAndGlyphs">0,32</text><text x="558.7" y="747.9" font-size="14.5" fill="#f2f2f2" textLength="56.7" lengthAdjust="spacingAndGlyphs">477,53</text><text x="558.7" y="771.1" font-size="14.5" fill="#f2f2f2" textLength="36.1" lengthAdjust="spacingAndGlyphs">0,31</text><text x="558.7" y="794.3" font-size="14.5" fill="#f2f2f2" textLength="36.1" lengthAdjust="spacingAndGlyphs">0,33</text><text x="558.7" y="817.5" font-size="14.5" fill="#f2f2f2" textLength="56.7" lengthAdjust="spacingAndGlyphs">474,11</text><text x="558.7" y="840.7" font-size="14.5" fill="#f2f2f2" textLength="36.1" lengthAdjust="spacingAndGlyphs">2,05</text><text x="558.7" y="863.9" font-size="14.5" fill="#f2f2f2" textLength="36.1" lengthAdjust="spacingAndGlyphs">2,50</text><text x="629.5" y="677.5" font-size="14" fill="#f2f2f2" textLength="59.8" lengthAdjust="spacingAndGlyphs">Gray 65</text><text x="629.6" y="701.5" font-size="14.5" fill="#f2f2f2" textLength="36.1" lengthAdjust="spacingAndGlyphs">0,31</text><text x="629.6" y="724.7" font-size="14.5" fill="#f2f2f2" textLength="36.1" lengthAdjust="spacingAndGlyphs">0,32</text><text x="629.6" y="747.9" font-size="14.5" fill="#f2f2f2" textLength="56.7" lengthAdjust="spacingAndGlyphs">384,85</text><text x="629.6" y="771.1" font-size="14.5" fill="#f2f2f2" textLength="36.1" lengthAdjust="spacingAndGlyphs">0,31</text><text x="629.6" y="794.3" font-size="14.5" fill="#f2f2f2" textLength="36.1" lengthAdjust="spacingAndGlyphs">0,33</text><text x="629.6" y="817.5" font-size="14.5" fill="#f2f2f2" textLength="56.7" lengthAdjust="spacingAndGlyphs">382,02</text><text x="629.6" y="840.7" font-size="14.5" fill="#f2f2f2" textLength="36.1" lengthAdjust="spacingAndGlyphs">2,21</text><text x="629.6" y="863.9" font-size="14.5" fill="#f2f2f2" textLength="36.1" lengthAdjust="spacingAndGlyphs">2,60</text><text x="700.2" y="677.5" font-size="14" fill="#f2f2f2" textLength="60.2" lengthAdjust="spacingAndGlyphs">Gray 50</text><text x="700.2" y="701.5" font-size="14.5" fill="#f2f2f2" textLength="36.1" lengthAdjust="spacingAndGlyphs">0,31</text><text x="700.2" y="724.7" font-size="14.5" fill="#f2f2f2" textLength="36.1" lengthAdjust="spacingAndGlyphs">0,33</text><text x="700.2" y="747.9" font-size="14.5" fill="#f2f2f2" textLength="56.7" lengthAdjust="spacingAndGlyphs">297,43</text><text x="700.2" y="771.1" font-size="14.5" fill="#f2f2f2" textLength="36.1" lengthAdjust="spacingAndGlyphs">0,31</text><text x="700.2" y="794.3" font-size="14.5" fill="#f2f2f2" textLength="36.1" lengthAdjust="spacingAndGlyphs">0,33</text><text x="700.2" y="817.5" font-size="14.5" fill="#f2f2f2" textLength="56.7" lengthAdjust="spacingAndGlyphs">294,20</text><text x="700.2" y="840.7" font-size="14.5" fill="#f2f2f2" textLength="36.1" lengthAdjust="spacingAndGlyphs">1,71</text><text x="700.2" y="863.9" font-size="14.5" fill="#f2f2f2" textLength="36.1" lengthAdjust="spacingAndGlyphs">2,48</text><text x="770.6" y="677.5" font-size="14" fill="#f2f2f2" textLength="60.6" lengthAdjust="spacingAndGlyphs">Gray 35</text><text x="770.6" y="701.5" font-size="14.5" fill="#f2f2f2" textLength="36.1" lengthAdjust="spacingAndGlyphs">0,31</text><text x="770.6" y="724.7" font-size="14.5" fill="#f2f2f2" textLength="36.1" lengthAdjust="spacingAndGlyphs">0,33</text><text x="770.6" y="747.9" font-size="14.5" fill="#f2f2f2" textLength="56.7" lengthAdjust="spacingAndGlyphs">206,14</text><text x="770.6" y="771.1" font-size="14.5" fill="#f2f2f2" textLength="36.1" lengthAdjust="spacingAndGlyphs">0,31</text><text x="770.6" y="794.3" font-size="14.5" fill="#f2f2f2" textLength="36.1" lengthAdjust="spacingAndGlyphs">0,33</text><text x="770.6" y="817.5" font-size="14.5" fill="#f2f2f2" textLength="56.7" lengthAdjust="spacingAndGlyphs">204,86</text><text x="770.6" y="840.7" font-size="14.5" fill="#f2f2f2" textLength="36.1" lengthAdjust="spacingAndGlyphs">1,30</text><text x="770.6" y="863.9" font-size="14.5" fill="#f2f2f2" textLength="36.1" lengthAdjust="spacingAndGlyphs">1,96</text><text x="844.6" y="677.5" font-size="14" fill="#f2f2f2" textLength="40.7" lengthAdjust="spacingAndGlyphs">Black</text><text x="841.8" y="701.5" font-size="14.5" fill="#f2f2f2" textLength="36.1" lengthAdjust="spacingAndGlyphs">0,28</text><text x="841.8" y="724.7" font-size="14.5" fill="#f2f2f2" textLength="36.1" lengthAdjust="spacingAndGlyphs">0,28</text><text x="841.8" y="747.9" font-size="14.5" fill="#f2f2f2" textLength="36.1" lengthAdjust="spacingAndGlyphs">0,07</text><text x="841.8" y="771.1" font-size="14.5" fill="#f2f2f2" textLength="36.1" lengthAdjust="spacingAndGlyphs">0,31</text><text x="841.8" y="794.3" font-size="14.5" fill="#f2f2f2" textLength="36.1" lengthAdjust="spacingAndGlyphs">0,33</text><text x="841.8" y="817.5" font-size="14.5" fill="#f2f2f2" textLength="36.1" lengthAdjust="spacingAndGlyphs">0,00</text><text x="841.8" y="840.7" font-size="14.5" fill="#f2f2f2" textLength="36.1" lengthAdjust="spacingAndGlyphs">0,10</text><text x="841.8" y="863.9" font-size="14.5" fill="#f2f2f2" textLength="46.4" lengthAdjust="spacingAndGlyphs">39,25</text><text x="898.3" y="677.5" font-size="14" fill="#f2f2f2" textLength="73.2" lengthAdjust="spacingAndGlyphs">Dark Skin</text><text x="898.3" y="701.5" font-size="14.5" fill="#f2f2f2" textLength="36.1" lengthAdjust="spacingAndGlyphs">0,40</text><text x="898.3" y="724.7" font-size="14.5" fill="#f2f2f2" textLength="36.1" lengthAdjust="spacingAndGlyphs">0,37</text><text x="898.3" y="747.9" font-size="14.5" fill="#f2f2f2" textLength="46.4" lengthAdjust="spacingAndGlyphs">59,34</text><text x="898.3" y="771.1" font-size="14.5" fill="#f2f2f2" textLength="36.1" lengthAdjust="spacingAndGlyphs">0,40</text><text x="898.3" y="794.3" font-size="14.5" fill="#f2f2f2" textLength="36.1" lengthAdjust="spacingAndGlyphs">0,36</text><text x="898.3" y="817.5" font-size="14.5" fill="#f2f2f2" textLength="46.4" lengthAdjust="spacingAndGlyphs">60,35</text><text x="898.3" y="840.7" font-size="14.5" fill="#f2f2f2" textLength="36.1" lengthAdjust="spacingAndGlyphs">0,56</text><text x="898.3" y="863.9" font-size="14.5" fill="#f2f2f2" textLength="36.1" lengthAdjust="spacingAndGlyphs">2,47</text><text x="982.5" y="677.5" font-size="14" fill="#f2f2f2" textLength="75" lengthAdjust="spacingAndGlyphs">Light Skin</text><text x="982.0" y="701.5" font-size="14.5" fill="#f2f2f2" textLength="36.1" lengthAdjust="spacingAndGlyphs">0,38</text><text x="982.0" y="724.7" font-size="14.5" fill="#f2f2f2" textLength="36.1" lengthAdjust="spacingAndGlyphs">0,36</text><text x="982.0" y="747.9" font-size="14.5" fill="#f2f2f2" textLength="56.7" lengthAdjust="spacingAndGlyphs">213,46</text><text x="982.0" y="771.1" font-size="14.5" fill="#f2f2f2" textLength="36.1" lengthAdjust="spacingAndGlyphs">0,38</text><text x="982.0" y="794.3" font-size="14.5" fill="#f2f2f2" textLength="36.1" lengthAdjust="spacingAndGlyphs">0,36</text><text x="982.0" y="817.5" font-size="14.5" fill="#f2f2f2" textLength="56.7" lengthAdjust="spacingAndGlyphs">209,08</text><text x="982.0" y="840.7" font-size="14.5" fill="#f2f2f2" textLength="36.1" lengthAdjust="spacingAndGlyphs">0,76</text><text x="982.0" y="863.9" font-size="14.5" fill="#f2f2f2" textLength="36.1" lengthAdjust="spacingAndGlyphs">2,63</text><text x="1067.5" y="677.5" font-size="14" fill="#f2f2f2" textLength="66.5" lengthAdjust="spacingAndGlyphs">Blue Sky</text><text x="1067.5" y="701.5" font-size="14.5" fill="#f2f2f2" textLength="36.1" lengthAdjust="spacingAndGlyphs">0,25</text><text x="1067.5" y="724.7" font-size="14.5" fill="#f2f2f2" textLength="36.1" lengthAdjust="spacingAndGlyphs">0,26</text><text x="1067.5" y="747.9" font-size="14.5" fill="#f2f2f2" textLength="56.7" lengthAdjust="spacingAndGlyphs">112,89</text><text x="1067.5" y="771.1" font-size="14.5" fill="#f2f2f2" textLength="36.1" lengthAdjust="spacingAndGlyphs">0,25</text><text x="1067.5" y="794.3" font-size="14.5" fill="#f2f2f2" textLength="36.1" lengthAdjust="spacingAndGlyphs">0,27</text><text x="1067.5" y="817.5" font-size="14.5" fill="#f2f2f2" textLength="56.7" lengthAdjust="spacingAndGlyphs">112,03</text><text x="1067.5" y="840.7" font-size="14.5" fill="#f2f2f2" textLength="36.1" lengthAdjust="spacingAndGlyphs">0,64</text><text x="1067.5" y="863.9" font-size="14.5" fill="#f2f2f2" textLength="36.1" lengthAdjust="spacingAndGlyphs">2,13</text><text x="1144.2" y="677.5" font-size="14" fill="#f2f2f2" textLength="55.9" lengthAdjust="spacingAndGlyphs">Foliage</text><text x="1144.2" y="701.5" font-size="14.5" fill="#f2f2f2" textLength="36.1" lengthAdjust="spacingAndGlyphs">0,34</text><text x="1144.2" y="724.7" font-size="14.5" fill="#f2f2f2" textLength="36.1" lengthAdjust="spacingAndGlyphs">0,43</text><text x="1144.2" y="747.9" font-size="14.5" fill="#f2f2f2" textLength="46.4" lengthAdjust="spacingAndGlyphs">78,20</text><text x="1144.2" y="771.1" font-size="14.5" fill="#f2f2f2" textLength="36.1" lengthAdjust="spacingAndGlyphs">0,34</text><text x="1144.2" y="794.3" font-size="14.5" fill="#f2f2f2" textLength="36.1" lengthAdjust="spacingAndGlyphs">0,43</text><text x="1144.2" y="817.5" font-size="14.5" fill="#f2f2f2" textLength="46.4" lengthAdjust="spacingAndGlyphs">78,08</text><text x="1144.2" y="840.7" font-size="14.5" fill="#f2f2f2" textLength="36.1" lengthAdjust="spacingAndGlyphs">0,68</text><text x="1144.2" y="863.9" font-size="14.5" fill="#f2f2f2" textLength="36.1" lengthAdjust="spacingAndGlyphs">2,20</text><text x="1210.2" y="677.5" font-size="14" fill="#f2f2f2" textLength="93.8" lengthAdjust="spacingAndGlyphs">Blue Flower</text><text x="1210.2" y="701.5" font-size="14.5" fill="#f2f2f2" textLength="36.1" lengthAdjust="spacingAndGlyphs">0,27</text><text x="1210.2" y="724.7" font-size="14.5" fill="#f2f2f2" textLength="36.1" lengthAdjust="spacingAndGlyphs">0,25</text><text x="1210.2" y="747.9" font-size="14.5" fill="#f2f2f2" textLength="56.7" lengthAdjust="spacingAndGlyphs">141,16</text><text x="1210.2" y="771.1" font-size="14.5" fill="#f2f2f2" textLength="36.1" lengthAdjust="spacingAndGlyphs">0,27</text><text x="1210.2" y="794.3" font-size="14.5" fill="#f2f2f2" textLength="36.1" lengthAdjust="spacingAndGlyphs">0,25</text><text x="1210.2" y="817.5" font-size="14.5" fill="#f2f2f2" textLength="56.7" lengthAdjust="spacingAndGlyphs">139,71</text><text x="1210.2" y="840.7" font-size="14.5" fill="#f2f2f2" textLength="36.1" lengthAdjust="spacingAndGlyphs">0,77</text><text x="1210.2" y="863.9" font-size="14.5" fill="#f2f2f2" textLength="36.1" lengthAdjust="spacingAndGlyphs">2,04</text><text x="1314.2" y="677.5" font-size="14" fill="#f2f2f2" textLength="99.9" lengthAdjust="spacingAndGlyphs">Bluish Green</text><text x="1314.2" y="701.5" font-size="14.5" fill="#f2f2f2" textLength="36.1" lengthAdjust="spacingAndGlyphs">0,26</text><text x="1314.2" y="724.7" font-size="14.5" fill="#f2f2f2" textLength="36.1" lengthAdjust="spacingAndGlyphs">0,36</text><text x="1314.2" y="747.9" font-size="14.5" fill="#f2f2f2" textLength="56.7" lengthAdjust="spacingAndGlyphs">253,03</text><text x="1314.2" y="771.1" font-size="14.5" fill="#f2f2f2" textLength="36.1" lengthAdjust="spacingAndGlyphs">0,26</text><text x="1314.2" y="794.3" font-size="14.5" fill="#f2f2f2" textLength="36.1" lengthAdjust="spacingAndGlyphs">0,36</text><text x="1314.2" y="817.5" font-size="14.5" fill="#f2f2f2" textLength="56.7" lengthAdjust="spacingAndGlyphs">250,88</text><text x="1314.2" y="840.7" font-size="14.5" fill="#f2f2f2" textLength="36.1" lengthAdjust="spacingAndGlyphs">0,96</text><text x="1314.2" y="863.9" font-size="14.5" fill="#f2f2f2" textLength="36.1" lengthAdjust="spacingAndGlyphs">1,87</text><text x="1424.3" y="677.5" font-size="14" fill="#f2f2f2" textLength="58" lengthAdjust="spacingAndGlyphs">Orange</text><text x="1424.3" y="701.5" font-size="14.5" fill="#f2f2f2" textLength="36.1" lengthAdjust="spacingAndGlyphs">0,51</text><text x="1424.3" y="724.7" font-size="14.5" fill="#f2f2f2" textLength="36.1" lengthAdjust="spacingAndGlyphs">0,41</text><text x="1424.3" y="747.9" font-size="14.5" fill="#f2f2f2" textLength="56.7" lengthAdjust="spacingAndGlyphs">173,92</text><text x="1424.3" y="771.1" font-size="14.5" fill="#f2f2f2" textLength="36.1" lengthAdjust="spacingAndGlyphs">0,51</text><text x="1424.3" y="794.3" font-size="14.5" fill="#f2f2f2" textLength="36.1" lengthAdjust="spacingAndGlyphs">0,41</text><text x="1424.3" y="817.5" font-size="14.5" fill="#f2f2f2" textLength="56.7" lengthAdjust="spacingAndGlyphs">169,85</text><text x="1424.3" y="840.7" font-size="14.5" fill="#f2f2f2" textLength="36.1" lengthAdjust="spacingAndGlyphs">1,52</text><text x="1424.3" y="863.9" font-size="14.5" fill="#f2f2f2" textLength="36.1" lengthAdjust="spacingAndGlyphs">4,24</text><text x="1492.4" y="677.5" font-size="14" fill="#f2f2f2" textLength="104" lengthAdjust="spacingAndGlyphs">Purplish Blue</text><text x="1492.4" y="701.5" font-size="14.5" fill="#f2f2f2" textLength="36.1" lengthAdjust="spacingAndGlyphs">0,21</text><text x="1492.4" y="724.7" font-size="14.5" fill="#f2f2f2" textLength="36.1" lengthAdjust="spacingAndGlyphs">0,19</text><text x="1492.4" y="747.9" font-size="14.5" fill="#f2f2f2" textLength="46.4" lengthAdjust="spacingAndGlyphs">69,96</text><text x="1492.4" y="771.1" font-size="14.5" fill="#f2f2f2" textLength="36.1" lengthAdjust="spacingAndGlyphs">0,22</text><text x="1492.4" y="794.3" font-size="14.5" fill="#f2f2f2" textLength="36.1" lengthAdjust="spacingAndGlyphs">0,19</text><text x="1492.4" y="817.5" font-size="14.5" fill="#f2f2f2" textLength="46.4" lengthAdjust="spacingAndGlyphs">70,42</text><text x="1492.4" y="840.7" font-size="14.5" fill="#f2f2f2" textLength="36.1" lengthAdjust="spacingAndGlyphs">0,79</text><text x="1492.4" y="863.9" font-size="14.5" fill="#f2f2f2" textLength="36.1" lengthAdjust="spacingAndGlyphs">3,74</text><text x="1606.6" y="677.5" font-size="14" fill="#f2f2f2" textLength="112" lengthAdjust="spacingAndGlyphs">Moderate Red</text><text x="1606.6" y="701.5" font-size="14.5" fill="#f2f2f2" textLength="36.1" lengthAdjust="spacingAndGlyphs">0,46</text><text x="1606.6" y="724.7" font-size="14.5" fill="#f2f2f2" textLength="36.1" lengthAdjust="spacingAndGlyphs">0,31</text><text x="1606.6" y="747.9" font-size="14.5" fill="#f2f2f2" textLength="56.7" lengthAdjust="spacingAndGlyphs">113,12</text><text x="1606.6" y="771.1" font-size="14.5" fill="#f2f2f2" textLength="36.1" lengthAdjust="spacingAndGlyphs">0,46</text><text x="1606.6" y="794.3" font-size="14.5" fill="#f2f2f2" textLength="36.1" lengthAdjust="spacingAndGlyphs">0,31</text><text x="1606.6" y="817.5" font-size="14.5" fill="#f2f2f2" textLength="56.7" lengthAdjust="spacingAndGlyphs">111,90</text><text x="1606.6" y="840.7" font-size="14.5" fill="#f2f2f2" textLength="36.1" lengthAdjust="spacingAndGlyphs">0,30</text><text x="1606.6" y="863.9" font-size="14.5" fill="#f2f2f2" textLength="36.1" lengthAdjust="spacingAndGlyphs">1,82</text></g><rect x="326.00" y="870.00" width="1342.00" height="14.00" fill="#5e5e5e" /><rect x="327" y="871" width="17" height="12" rx="3" fill="#7a7a7a"/><path d="M331,877 L337,872.5 L337,881.5 Z" fill="#3a3a3a"/><rect x="347" y="871.5" width="643" height="11" rx="5.5" fill="#444444"/><rect x="1651" y="871" width="16" height="12" rx="3" fill="#7a7a7a"/><path d="M1662,877 L1656,872.5 L1656,881.5 Z" fill="#3a3a3a"/><rect x="3.00" y="926.00" width="1266.00" height="77.00" fill="#333333" /><clipPath id="bclip"><rect x="3" y="920" width="1266" height="70"/></clipPath><g clip-path="url(#bclip)"><rect x="-29.4" y="927" width="62" height="60" rx="5" fill="url(#btng)"/><rect x="-22.4" y="933" width="49.5" height="15" rx="4" fill="#8a80c8" stroke="rgba(0,0,0,0.25)" stroke-width="1"/><text x="-19.3" y="966.7" font-size="13" font-weight="bold" fill="#2a2a2a">Blue</text><text x="-19.3" y="981.7" font-size="13" font-weight="bold" fill="#2a2a2a">Flower</text><rect x="35.6" y="927" width="62" height="60" rx="5" fill="url(#btng)"/><rect x="42.6" y="933" width="49.5" height="15" rx="4" fill="#5cc0a8" stroke="rgba(0,0,0,0.25)" stroke-width="1"/><text x="46.7" y="966.7" font-size="13" font-weight="bold" fill="#2a2a2a">Bluish</text><text x="46.7" y="981.7" font-size="13" font-weight="bold" fill="#2a2a2a">Green</text><rect x="100.6" y="927" width="62" height="60" rx="5" fill="url(#btng)"/><rect x="107.6" y="933" width="49.5" height="30" rx="4" fill="#e07828" stroke="rgba(0,0,0,0.25)" stroke-width="1"/><text x="108.8" y="981.7" font-size="13" font-weight="bold" fill="#2a2a2a">Orange</text><rect x="165.6" y="927" width="62" height="60" rx="5" fill="url(#btng)"/><rect x="172.6" y="933" width="49.5" height="15" rx="4" fill="#4a5ab0" stroke="rgba(0,0,0,0.25)" stroke-width="1"/><text x="170.6" y="966.7" font-size="13" font-weight="bold" fill="#2a2a2a">Purplish</text><text x="170.6" y="981.7" font-size="13" font-weight="bold" fill="#2a2a2a">Blue</text><rect x="230.6" y="927" width="62" height="60" rx="5" fill="url(#btng)"/><rect x="237.6" y="933" width="49.5" height="15" rx="4" fill="#d05868" stroke="rgba(0,0,0,0.25)" stroke-width="1"/><text x="232.7" y="966.7" font-size="13" font-weight="bold" fill="#2a2a2a">Moderate</text><text x="232.7" y="981.7" font-size="13" font-weight="bold" fill="#2a2a2a">Red</text><rect x="295.6" y="927" width="62" height="60" rx="5" fill="url(#btng)"/><rect x="302.6" y="933" width="49.5" height="30" rx="4" fill="#5e3a78" stroke="rgba(0,0,0,0.25)" stroke-width="1"/><text x="306.4" y="981.7" font-size="13" font-weight="bold" fill="#2a2a2a">Purple</text><rect x="360.6" y="927" width="62" height="60" rx="5" fill="url(#btng)"/><rect x="367.6" y="933" width="49.5" height="15" rx="4" fill="#a0c040" stroke="rgba(0,0,0,0.25)" stroke-width="1"/><text x="371.4" y="966.7" font-size="13" font-weight="bold" fill="#2a2a2a">Yellow</text><text x="371.4" y="981.7" font-size="13" font-weight="bold" fill="#2a2a2a">Green</text><rect x="425.6" y="927" width="62" height="60" rx="5" fill="url(#btng)"/><rect x="432.6" y="933" width="49.5" height="15" rx="4" fill="#eca030" stroke="rgba(0,0,0,0.25)" stroke-width="1"/><text x="433.8" y="966.7" font-size="13" font-weight="bold" fill="#2a2a2a">Orange</text><text x="433.8" y="981.7" font-size="13" font-weight="bold" fill="#2a2a2a">Yellow</text><rect x="490.6" y="927" width="62" height="60" rx="5" fill="url(#btng)"/><rect x="497.6" y="933" width="49.5" height="30" rx="4" fill="#2c3aa0" stroke="rgba(0,0,0,0.25)" stroke-width="1"/><text x="507.5" y="981.7" font-size="13" font-weight="bold" fill="#2a2a2a">Blue</text><rect x="555.6" y="927" width="62" height="60" rx="5" fill="url(#btng)"/><rect x="562.6" y="933" width="49.5" height="30" rx="4" fill="#449a48" stroke="rgba(0,0,0,0.25)" stroke-width="1"/><text x="567.8" y="981.7" font-size="13" font-weight="bold" fill="#2a2a2a">Green</text><rect x="620.6" y="927" width="62" height="60" rx="5" fill="url(#btng)"/><rect x="627.6" y="933" width="49.5" height="30" rx="4" fill="#b02c38" stroke="rgba(0,0,0,0.25)" stroke-width="1"/><text x="639.3" y="981.7" font-size="13" font-weight="bold" fill="#2a2a2a">Red</text><rect x="685.6" y="927" width="62" height="60" rx="5" fill="url(#btng)"/><rect x="692.6" y="933" width="49.5" height="30" rx="4" fill="#ecc428" stroke="rgba(0,0,0,0.25)" stroke-width="1"/><text x="696.4" y="981.7" font-size="13" font-weight="bold" fill="#2a2a2a">Yellow</text><rect x="750.6" y="927" width="62" height="60" rx="5" fill="url(#btng)"/><rect x="757.6" y="933" width="49.5" height="30" rx="4" fill="#c0549a" stroke="rgba(0,0,0,0.25)" stroke-width="1"/><text x="755.2" y="981.7" font-size="13" font-weight="bold" fill="#2a2a2a">Magenta</text><rect x="815.6" y="927" width="62" height="60" rx="5" fill="url(#btng)"/><rect x="822.6" y="933" width="49.5" height="30" rx="4" fill="#0a88a8" stroke="rgba(0,0,0,0.25)" stroke-width="1"/><text x="830.7" y="981.7" font-size="13" font-weight="bold" fill="#2a2a2a">Cyan</text><rect x="880.6" y="927" width="62" height="60" rx="5" fill="url(#btng)"/><rect x="887.6" y="933" width="49.5" height="30" rx="4" fill="#ff0000" stroke="rgba(0,0,0,0.25)" stroke-width="1"/><text x="880.9" y="981.7" font-size="13" font-weight="bold" fill="#2a2a2a">100% Red</text><rect x="945.6" y="927" width="62" height="60" rx="5" fill="url(#btng)"/><rect x="952.6" y="933" width="49.5" height="15" rx="4" fill="#00ff00" stroke="rgba(0,0,0,0.25)" stroke-width="1"/><text x="957.8" y="966.7" font-size="13" font-weight="bold" fill="#2a2a2a">100%</text><text x="957.8" y="981.7" font-size="13" font-weight="bold" fill="#2a2a2a">Green</text><rect x="1010.6" y="927" width="62" height="60" rx="5" fill="url(#btng)"/><rect x="1017.6" y="933" width="49.5" height="15" rx="4" fill="#0000ff" stroke="rgba(0,0,0,0.25)" stroke-width="1"/><text x="1025.0" y="966.7" font-size="13" font-weight="bold" fill="#2a2a2a">100%</text><text x="1025.0" y="981.7" font-size="13" font-weight="bold" fill="#2a2a2a">Blue</text><rect x="1075.6" y="927" width="62" height="60" rx="5" fill="url(#btng)"/><rect x="1082.6" y="933" width="49.5" height="15" rx="4" fill="#00ffff" stroke="rgba(0,0,0,0.25)" stroke-width="1"/><text x="1090.0" y="966.7" font-size="13" font-weight="bold" fill="#2a2a2a">100%</text><text x="1090.0" y="981.7" font-size="13" font-weight="bold" fill="#2a2a2a">Cyan</text><rect x="1140.6" y="927" width="62" height="60" rx="5" fill="url(#btng)"/><rect x="1147.6" y="933" width="49.5" height="15" rx="4" fill="#ff00ff" stroke="rgba(0,0,0,0.25)" stroke-width="1"/><text x="1145.2" y="966.7" font-size="13" font-weight="bold" fill="#2a2a2a">100%</text><text x="1145.2" y="981.7" font-size="13" font-weight="bold" fill="#2a2a2a">Magenta</text><rect x="1205.6" y="927" width="62" height="60" rx="5" fill="#222222"/><rect x="1212.6" y="933" width="49.5" height="15" rx="4" fill="#ffff00" stroke="rgba(0,0,0,0.25)" stroke-width="1"/><text x="1216.4" y="966.7" font-size="13" font-weight="bold" fill="#ffffff">100%</text><text x="1216.4" y="981.7" font-size="13" font-weight="bold" fill="#ffffff">Yellow</text></g><rect x="3.00" y="987.00" width="1265.00" height="16.00" fill="#5c5c5c" /><rect x="3.00" y="986.50" width="1265.00" height="1.20" fill="#3c3c3c" /><rect x="5" y="988.5" width="14" height="13.5" rx="3" fill="#858585"/><path d="M9,995 L15,990.5 L15,999.5 Z" fill="#3a3a3a"/><rect x="454" y="989.5" width="795" height="13.5" rx="6.5" fill="#454545"/><rect x="1253.7" y="988.5" width="14" height="13.5" rx="3" fill="#858585"/><path d="M1264,995 L1258,990.5 L1258,999.5 Z" fill="#3a3a3a"/><path d="M1269.5,1003 V931 Q1269.5,926.5 1274,926.5 H1325 Q1329.5,926.5 1329.5,931 V1003 Z" fill="url(#ctlg)"/><rect x="1269.50" y="949.00" width="60.00" height="1.50" fill="#3a3a3a" /><rect x="1269.50" y="950.50" width="60.00" height="52.50" fill="url(#ctlg2)" /><circle cx="1299" cy="938.5" r="9.5" fill="url(#cbg)"/><path d="M1293.5,940.5 L1299,935 L1304.5,940.5 Z" fill="#2e2e2e"/><rect x="1281" y="958" width="37" height="37" rx="5" fill="#a5a5a5" stroke="#222" stroke-width="3"/><rect x="1291" y="968" width="17" height="17" fill="#111"/><rect x="1282.5" y="959.5" width="34" height="17" rx="3" fill="#fff" fill-opacity="0.1"/><rect x="1330.00" y="926.00" width="342.00" height="38.00" fill="#303030" /><rect x="1330.00" y="926.00" width="58.00" height="38.00" fill="url(#ctlg)" /><rect x="1389.00" y="926.00" width="55.00" height="38.00" fill="url(#ctlg)" /><rect x="1445.00" y="926.00" width="55.00" height="38.00" fill="url(#ctlg)" /><rect x="1502.00" y="926.00" width="55.00" height="38.00" fill="url(#ctlg)" /><rect x="1557.50" y="926.00" width="55.50" height="38.00" fill="url(#loopg)" /><rect x="1614.00" y="926.00" width="58.00" height="38.00" fill="url(#ctlg)" /><rect x="1330.00" y="964.00" width="342.00" height="1.00" fill="#303030" /><rect x="1330.00" y="965.00" width="170.50" height="38.00" fill="url(#ctlg)" /><rect x="1500.50" y="965.00" width="1.50" height="38.00" fill="#303030" /><rect x="1502.00" y="965.00" width="170.00" height="38.00" fill="url(#ctlg)" /><circle cx="1359.3" cy="945" r="12" fill="url(#cbg)"/><circle cx="1416.5" cy="945" r="12" fill="url(#cbg)"/><circle cx="1472.6" cy="945" r="12" fill="url(#cbg)"/><circle cx="1529.5" cy="945" r="12" fill="url(#cbg)"/><circle cx="1585" cy="945" r="12" fill="url(#loopcg)"/><circle cx="1642.9" cy="945" r="12" fill="url(#cbg)"/><rect x="1354.5" y="940.5" width="11" height="11" fill="#2a2a2a"/><path d="M1413,939 L1422,945.5 L1413,952 Z" fill="#2a2a2a"/><path d="M1467.8,937.8 H1465.3 V951.8 H1467.8 M1477.4,937.8 H1479.9 V951.8 H1477.4" fill="none" stroke="#2a2a2a" stroke-width="2.2"/><circle cx="1470.9" cy="944.8" r="1" fill="#2a2a2a"/><circle cx="1474.3" cy="944.8" r="1" fill="#2a2a2a"/><path d="M1529.5,944.8 C1527,941.5 1522,941.5 1522,944.8 C1522,948.1 1527,948.1 1529.5,944.8 C1532,941.5 1537,941.5 1537,944.8 C1537,948.1 1532,948.1 1529.5,944.8 Z" fill="none" stroke="#2e2e2e" stroke-width="2.3"/><path d="M1580.2,943.5 A5.6,5.6 0 0 1 1589.5,941.2 M1589.8,946.3 A5.6,5.6 0 0 1 1580.5,948.6" fill="none" stroke="#161616" stroke-width="2.4"/><path d="M1587,938.2 L1592.2,938.8 L1590.6,943.6 Z M1583,951.6 L1577.8,951 L1579.4,946.2 Z" fill="#161616"/><circle cx="1368.9" cy="983.8" r="12" fill="url(#cbg)"/><path d="M1369,979.8 L1364,984.8 L1369,989.8 M1374.5,979.8 L1369.5,984.8 L1374.5,989.8" fill="none" stroke="#2a2a2a" stroke-width="2"/><circle cx="1635.6" cy="983.8" r="12" fill="url(#cbg)"/><path d="M1631,980.2 L1636,985.4 L1631,990.6 M1636.5,980.2 L1641.5,985.4 L1636.5,990.6" fill="none" stroke="#2a2a2a" stroke-width="2"/><text x="1403.00" y="994.00" font-size="27" fill="#2c2c2c" text-anchor="start" font-weight="normal" textLength="60.0" lengthAdjust="spacingAndGlyphs" stroke="#2c2c2c" stroke-width="0.9">Back</text><text x="1536.40" y="994.00" font-size="27" fill="#2c2c2c" text-anchor="start" font-weight="normal" textLength="64.6" lengthAdjust="spacingAndGlyphs" stroke="#2c2c2c" stroke-width="0.9">Next</text><clipPath id="locclip"><polygon points="1295.5,594.9 1295.4,595.0 1295.3,595.1 1295.3,595.1 1295.1,595.2 1295.0,595.3 1294.8,595.4 1294.6,595.5 1294.3,595.5 1294.0,595.5 1293.6,595.5 1293.2,595.4 1292.8,595.4 1292.3,595.3 1291.8,595.2 1291.2,595.0 1290.6,594.7 1290.0,594.3 1289.3,593.9 1288.6,593.5 1287.9,592.9 1287.1,592.3 1286.2,591.6 1285.2,590.9 1284.1,590.0 1282.9,589.0 1281.7,588.0 1280.3,586.9 1278.9,585.7 1277.3,584.4 1275.7,583.0 1273.9,581.5 1271.9,579.9 1269.9,578.2 1267.8,576.5 1265.5,574.6 1263.1,572.7 1260.6,570.7 1258.0,568.5 1255.1,566.1 1252.1,563.6 1248.8,560.7 1245.0,557.5 1241.1,554.2 1237.0,550.6 1232.9,547.1 1229.0,543.6 1225.3,540.3 1221.9,537.2 1219.0,534.5 1216.4,532.0 1214.0,529.7 1211.7,527.4 1209.5,525.1 1207.2,522.7 1204.7,520.0 1201.9,516.9 1199.0,513.6 1195.9,510.0 1192.7,506.3 1189.4,502.4 1186.0,498.3 1182.6,494.1 1179.0,489.6 1175.4,485.0 1171.8,480.2 1168.0,475.2 1164.2,469.9 1160.3,464.6 1156.3,459.0 1152.3,453.3 1148.2,447.4 1144.1,441.3 1140.0,435.1 1135.8,428.6 1131.6,421.9 1127.3,415.1 1123.0,408.1 1118.7,401.1 1114.4,394.0 1110.2,387.0 1106.0,379.8 1101.8,372.5 1097.5,365.1 1093.3,357.7 1089.2,350.2 1085.2,342.8 1081.3,335.4 1077.5,328.2 1073.9,321.0 1070.4,313.7 1067.1,306.5 1063.8,299.3 1060.6,292.2 1057.6,285.2 1054.7,278.4 1052.0,271.7 1049.4,265.3 1046.9,258.9 1044.5,252.7 1042.3,246.6 1040.2,240.7 1038.2,235.0 1036.4,229.5 1034.7,224.2 1033.1,219.1 1031.7,214.2 1030.4,209.5 1029.2,205.1 1028.2,200.7 1027.3,196.6 1026.4,192.6 1025.7,188.8 1025.1,185.2 1024.5,181.7 1024.1,178.5 1023.8,175.4 1023.6,172.4 1023.5,169.6 1023.5,166.8 1023.5,164.2 1023.7,161.7 1023.9,159.3 1024.2,157.0 1024.6,154.9 1025.1,152.8 1025.6,150.9 1026.3,149.0 1026.9,147.3 1027.7,145.6 1028.6,144.0 1029.5,142.6 1030.5,141.2 1031.6,139.9 1032.7,138.7 1033.9,137.6 1035.1,136.5 1036.3,135.6 1037.7,134.7 1039.1,133.9 1040.5,133.3 1042.0,132.6 1043.5,132.1 1045.0,131.5 1046.6,131.1 1048.2,130.6 1049.9,130.3 1051.6,130.0 1053.3,129.7 1055.0,129.5 1056.8,129.4 1058.6,129.2 1060.3,129.0 1062.2,128.9 1064.0,128.8 1065.9,128.7 1067.7,128.6 1069.6,128.6 1071.5,128.6 1073.4,128.6 1075.3,128.5 1077.2,128.5 1079.1,128.5 1081.0,128.5 1082.9,128.6 1084.8,128.6 1086.7,128.6 1088.6,128.7 1090.5,128.7 1092.5,128.8 1094.4,128.9 1096.4,128.9 1098.3,129.0 1100.3,129.1 1102.3,129.2 1104.3,129.3 1106.4,129.5 1108.4,129.6 1110.5,129.7 1112.6,129.9 1114.7,130.0 1116.9,130.2 1119.1,130.3 1121.2,130.5 1123.5,130.7 1125.7,130.9 1128.0,131.1 1130.2,131.3 1132.5,131.5 1134.9,131.7 1137.2,131.9 1139.6,132.1 1142.0,132.4 1144.5,132.6 1146.9,132.8 1149.4,133.1 1152.0,133.3 1154.5,133.6 1157.1,133.9 1159.8,134.1 1162.4,134.4 1165.1,134.7 1167.9,135.0 1170.6,135.3 1173.5,135.6 1176.3,135.9 1179.2,136.2 1182.1,136.5 1185.1,136.8 1188.0,137.2 1191.1,137.5 1194.1,137.9 1197.2,138.2 1200.4,138.6 1203.6,138.9 1206.8,139.3 1210.1,139.6 1213.4,140.0 1216.7,140.4 1220.1,140.8 1223.6,141.2 1227.1,141.5 1230.6,141.9 1234.2,142.4 1237.8,142.8 1241.4,143.2 1245.1,143.6 1248.9,144.0 1252.6,144.5 1256.5,144.9 1260.3,145.3 1264.2,145.8 1268.2,146.2 1272.2,146.7 1276.2,147.2 1280.3,147.6 1284.5,148.1 1288.6,148.6 1292.8,149.1 1297.1,149.6 1301.4,150.1 1305.7,150.6 1310.1,151.1 1314.5,151.6 1319.0,152.1 1323.5,152.6 1328.0,153.1 1332.6,153.6 1337.2,154.2 1341.8,154.7 1346.5,155.2 1351.2,155.8 1355.9,156.3 1360.7,156.9 1365.5,157.4 1370.3,158.0 1375.1,158.5 1379.9,159.1 1384.8,159.6 1389.6,160.2 1394.5,160.8 1399.4,161.3 1404.3,161.9 1409.2,162.4 1414.0,163.0 1418.8,163.5 1423.5,164.1 1428.3,164.6 1433.0,165.2 1437.7,165.7 1442.4,166.3 1447.0,166.8 1451.7,167.3 1456.4,167.9 1461.0,168.4 1465.7,168.9 1470.3,169.5 1474.9,170.0 1479.5,170.5 1484.0,171.0 1488.4,171.5 1492.6,172.0 1496.5,172.5 1500.2,172.9 1503.9,173.3 1507.8,173.7 1511.9,174.2 1516.5,174.7 1521.7,175.3 1527.6,176.0 1534.2,176.8 1541.2,177.6 1548.5,178.4 1555.9,179.3 1563.1,180.1 1569.9,180.9 1576.1,181.6 1581.7,182.2 1587.1,182.9 1592.2,183.4 1597.0,184.0 1601.7,184.5 1606.1,185.0 1610.5,185.5 1614.7,186.0 1618.8,186.5 1622.7,186.9 1626.5,187.4 1630.1,187.8 1633.5,188.2 1636.8,188.6 1639.9,188.9 1642.9,189.3 1645.8,189.6 1648.4,189.9 1650.9,190.2 1653.3,190.4 1655.5,190.7 1657.6,190.9 1659.6,191.2 1661.5,191.4 1663.3,191.6 1664.9,191.8 1666.3,191.9 1667.6,192.1 1668.9,192.2 1670.1,192.4 1671.3,192.5 1672.6,192.7 1673.9,192.8 1675.2,193.0 1676.6,193.1 1677.8,193.3 1679.1,193.4 1680.2,193.5 1681.3,193.7 1682.2,193.8 1683.0,193.9 1683.6,193.9 1684.2,194.0 1684.7,194.0 1685.0,194.1 1685.4,194.1 1685.7,194.2 1685.9,194.2"/></clipPath><clipPath id="plotclip"><rect x="1022" y="117" width="639.5" height="491.5"/></clipPath><g clip-path="url(#plotclip)"><clipPath id="triclip"><polygon points="1155.1,148.4 1502,180.8 1494,182.3 1208.8,471 1208.1,470.7"/></clipPath><g clip-path="url(#locclip)"><rect x="1058" y="117" width="12.5" height="12.5" fill="#009900"/><rect x="1070" y="117" width="12.5" height="12.5" fill="#009900"/><rect x="1082" y="117" width="12.5" height="12.5" fill="#009900"/><rect x="1094" y="117" width="12.5" height="12.5" fill="#009900"/><rect x="1022" y="129" width="12.5" height="12.5" fill="#009900"/><rect x="1034" y="129" width="12.5" height="12.5" fill="#009900"/><rect x="1046" y="129" width="12.5" height="12.5" fill="#009900"/><rect x="1058" y="129" width="12.5" height="12.5" fill="#009900"/><rect x="1070" y="129" width="12.5" height="12.5" fill="#009900"/><rect x="1082" y="129" width="12.5" height="12.5" fill="#009900"/><rect x="1094" y="129" width="12.5" height="12.5" fill="#009900"/><rect x="1106" y="129" width="12.5" height="12.5" fill="#009900"/><rect x="1118" y="129" width="12.5" height="12.5" fill="#009900"/><rect x="1130" y="129" width="12.5" height="12.5" fill="#009900"/><rect x="1142" y="129" width="12.5" height="12.5" fill="#009900"/><rect x="1154" y="129" width="12.5" height="12.5" fill="#0e9900"/><rect x="1166" y="129" width="12.5" height="12.5" fill="#229900"/><rect x="1178" y="129" width="12.5" height="12.5" fill="#359900"/><rect x="1190" y="129" width="12.5" height="12.5" fill="#499900"/><rect x="1202" y="129" width="12.5" height="12.5" fill="#5d9900"/><rect x="1214" y="129" width="12.5" height="12.5" fill="#729900"/><rect x="1022" y="141" width="12.5" height="12.5" fill="#00990f"/><rect x="1034" y="141" width="12.5" height="12.5" fill="#00990d"/><rect x="1046" y="141" width="12.5" height="12.5" fill="#00990c"/><rect x="1058" y="141" width="12.5" height="12.5" fill="#00990b"/><rect x="1070" y="141" width="12.5" height="12.5" fill="#00990a"/><rect x="1082" y="141" width="12.5" height="12.5" fill="#009908"/><rect x="1094" y="141" width="12.5" height="12.5" fill="#009907"/><rect x="1106" y="141" width="12.5" height="12.5" fill="#009905"/><rect x="1118" y="141" width="12.5" height="12.5" fill="#009903"/><rect x="1130" y="141" width="12.5" height="12.5" fill="#009901"/><rect x="1142" y="141" width="12.5" height="12.5" fill="#009900"/><rect x="1154" y="141" width="12.5" height="12.5" fill="#0b9900"/><rect x="1166" y="141" width="12.5" height="12.5" fill="#209900"/><rect x="1178" y="141" width="12.5" height="12.5" fill="#349900"/><rect x="1190" y="141" width="12.5" height="12.5" fill="#489900"/><rect x="1202" y="141" width="12.5" height="12.5" fill="#5d9900"/><rect x="1214" y="141" width="12.5" height="12.5" fill="#729900"/><rect x="1226" y="141" width="12.5" height="12.5" fill="#899900"/><rect x="1238" y="141" width="12.5" height="12.5" fill="#999100"/><rect x="1250" y="141" width="12.5" height="12.5" fill="#997e00"/><rect x="1262" y="141" width="12.5" height="12.5" fill="#996e00"/><rect x="1274" y="141" width="12.5" height="12.5" fill="#996100"/><rect x="1286" y="141" width="12.5" height="12.5" fill="#995500"/><rect x="1298" y="141" width="12.5" height="12.5" fill="#994c00"/><rect x="1310" y="141" width="12.5" height="12.5" fill="#994400"/><rect x="1322" y="141" width="12.5" height="12.5" fill="#993d00"/><rect x="1022" y="153" width="12.5" height="12.5" fill="#00991d"/><rect x="1034" y="153" width="12.5" height="12.5" fill="#00991c"/><rect x="1046" y="153" width="12.5" height="12.5" fill="#00991b"/><rect x="1058" y="153" width="12.5" height="12.5" fill="#00991b"/><rect x="1070" y="153" width="12.5" height="12.5" fill="#00991a"/><rect x="1082" y="153" width="12.5" height="12.5" fill="#009919"/><rect x="1094" y="153" width="12.5" height="12.5" fill="#009918"/><rect x="1106" y="153" width="12.5" height="12.5" fill="#009917"/><rect x="1118" y="153" width="12.5" height="12.5" fill="#009916"/><rect x="1130" y="153" width="12.5" height="12.5" fill="#009915"/><rect x="1142" y="153" width="12.5" height="12.5" fill="#009914"/><rect x="1154" y="153" width="12.5" height="12.5" fill="#079913"/><rect x="1166" y="153" width="12.5" height="12.5" fill="#1d9912"/><rect x="1178" y="153" width="12.5" height="12.5" fill="#329910"/><rect x="1190" y="153" width="12.5" height="12.5" fill="#47990f"/><rect x="1202" y="153" width="12.5" height="12.5" fill="#5d990d"/><rect x="1214" y="153" width="12.5" height="12.5" fill="#73990b"/><rect x="1226" y="153" width="12.5" height="12.5" fill="#8b9909"/><rect x="1238" y="153" width="12.5" height="12.5" fill="#998f06"/><rect x="1250" y="153" width="12.5" height="12.5" fill="#997b03"/><rect x="1262" y="153" width="12.5" height="12.5" fill="#996b00"/><rect x="1274" y="153" width="12.5" height="12.5" fill="#995e00"/><rect x="1286" y="153" width="12.5" height="12.5" fill="#995300"/><rect x="1298" y="153" width="12.5" height="12.5" fill="#994900"/><rect x="1310" y="153" width="12.5" height="12.5" fill="#994100"/><rect x="1322" y="153" width="12.5" height="12.5" fill="#993a00"/><rect x="1334" y="153" width="12.5" height="12.5" fill="#993400"/><rect x="1346" y="153" width="12.5" height="12.5" fill="#992e00"/><rect x="1358" y="153" width="12.5" height="12.5" fill="#992900"/><rect x="1370" y="153" width="12.5" height="12.5" fill="#992500"/><rect x="1382" y="153" width="12.5" height="12.5" fill="#992100"/><rect x="1394" y="153" width="12.5" height="12.5" fill="#991d00"/><rect x="1406" y="153" width="12.5" height="12.5" fill="#991900"/><rect x="1418" y="153" width="12.5" height="12.5" fill="#991600"/><rect x="1430" y="153" width="12.5" height="12.5" fill="#991300"/><rect x="1022" y="165" width="12.5" height="12.5" fill="#00992b"/><rect x="1034" y="165" width="12.5" height="12.5" fill="#00992a"/><rect x="1046" y="165" width="12.5" height="12.5" fill="#00992a"/><rect x="1058" y="165" width="12.5" height="12.5" fill="#00992a"/><rect x="1070" y="165" width="12.5" height="12.5" fill="#009929"/><rect x="1082" y="165" width="12.5" height="12.5" fill="#009929"/><rect x="1094" y="165" width="12.5" height="12.5" fill="#009929"/><rect x="1106" y="165" width="12.5" height="12.5" fill="#009928"/><rect x="1118" y="165" width="12.5" height="12.5" fill="#009928"/><rect x="1130" y="165" width="12.5" height="12.5" fill="#009927"/><rect x="1142" y="165" width="12.5" height="12.5" fill="#009927"/><rect x="1154" y="165" width="12.5" height="12.5" fill="#039926"/><rect x="1166" y="165" width="12.5" height="12.5" fill="#1b9926"/><rect x="1178" y="165" width="12.5" height="12.5" fill="#309925"/><rect x="1190" y="165" width="12.5" height="12.5" fill="#469925"/><rect x="1202" y="165" width="12.5" height="12.5" fill="#5d9924"/><rect x="1214" y="165" width="12.5" height="12.5" fill="#749923"/><rect x="1226" y="165" width="12.5" height="12.5" fill="#8d9922"/><rect x="1238" y="165" width="12.5" height="12.5" fill="#998c1f"/><rect x="1250" y="165" width="12.5" height="12.5" fill="#997819"/><rect x="1262" y="165" width="12.5" height="12.5" fill="#996815"/><rect x="1274" y="165" width="12.5" height="12.5" fill="#995b12"/><rect x="1286" y="165" width="12.5" height="12.5" fill="#99500f"/><rect x="1298" y="165" width="12.5" height="12.5" fill="#99470c"/><rect x="1310" y="165" width="12.5" height="12.5" fill="#993f0a"/><rect x="1322" y="165" width="12.5" height="12.5" fill="#993808"/><rect x="1334" y="165" width="12.5" height="12.5" fill="#993207"/><rect x="1346" y="165" width="12.5" height="12.5" fill="#992c05"/><rect x="1358" y="165" width="12.5" height="12.5" fill="#992704"/><rect x="1370" y="165" width="12.5" height="12.5" fill="#992202"/><rect x="1382" y="165" width="12.5" height="12.5" fill="#991e01"/><rect x="1394" y="165" width="12.5" height="12.5" fill="#991b00"/><rect x="1406" y="165" width="12.5" height="12.5" fill="#991700"/><rect x="1418" y="165" width="12.5" height="12.5" fill="#991400"/><rect x="1430" y="165" width="12.5" height="12.5" fill="#991100"/><rect x="1442" y="165" width="12.5" height="12.5" fill="#990e00"/><rect x="1454" y="165" width="12.5" height="12.5" fill="#990b00"/><rect x="1466" y="165" width="12.5" height="12.5" fill="#990900"/><rect x="1478" y="165" width="12.5" height="12.5" fill="#990600"/><rect x="1490" y="165" width="12.5" height="12.5" fill="#990400"/><rect x="1502" y="165" width="12.5" height="12.5" fill="#990100"/><rect x="1514" y="165" width="12.5" height="12.5" fill="#990000"/><rect x="1526" y="165" width="12.5" height="12.5" fill="#990000"/><rect x="1022" y="177" width="12.5" height="12.5" fill="#009939"/><rect x="1034" y="177" width="12.5" height="12.5" fill="#009939"/><rect x="1046" y="177" width="12.5" height="12.5" fill="#009939"/><rect x="1058" y="177" width="12.5" height="12.5" fill="#009939"/><rect x="1070" y="177" width="12.5" height="12.5" fill="#009939"/><rect x="1082" y="177" width="12.5" height="12.5" fill="#009939"/><rect x="1094" y="177" width="12.5" height="12.5" fill="#009939"/><rect x="1106" y="177" width="12.5" height="12.5" fill="#009939"/><rect x="1118" y="177" width="12.5" height="12.5" fill="#009939"/><rect x="1130" y="177" width="12.5" height="12.5" fill="#009939"/><rect x="1142" y="177" width="12.5" height="12.5" fill="#009939"/><rect x="1154" y="177" width="12.5" height="12.5" fill="#00993a"/><rect x="1166" y="177" width="12.5" height="12.5" fill="#18993a"/><rect x="1178" y="177" width="12.5" height="12.5" fill="#2f993a"/><rect x="1190" y="177" width="12.5" height="12.5" fill="#45993a"/><rect x="1202" y="177" width="12.5" height="12.5" fill="#5d993a"/><rect x="1214" y="177" width="12.5" height="12.5" fill="#75993a"/><rect x="1226" y="177" width="12.5" height="12.5" fill="#8f993b"/><rect x="1238" y="177" width="12.5" height="12.5" fill="#998a35"/><rect x="1250" y="177" width="12.5" height="12.5" fill="#99762d"/><rect x="1262" y="177" width="12.5" height="12.5" fill="#996627"/><rect x="1274" y="177" width="12.5" height="12.5" fill="#995822"/><rect x="1286" y="177" width="12.5" height="12.5" fill="#994d1e"/><rect x="1298" y="177" width="12.5" height="12.5" fill="#99441b"/><rect x="1310" y="177" width="12.5" height="12.5" fill="#993c18"/><rect x="1322" y="177" width="12.5" height="12.5" fill="#993515"/><rect x="1334" y="177" width="12.5" height="12.5" fill="#992f13"/><rect x="1346" y="177" width="12.5" height="12.5" fill="#992a11"/><rect x="1358" y="177" width="12.5" height="12.5" fill="#99250f"/><rect x="1370" y="177" width="12.5" height="12.5" fill="#99200d"/><rect x="1382" y="177" width="12.5" height="12.5" fill="#991c0c"/><rect x="1394" y="177" width="12.5" height="12.5" fill="#99180a"/><rect x="1406" y="177" width="12.5" height="12.5" fill="#991509"/><rect x="1418" y="177" width="12.5" height="12.5" fill="#991208"/><rect x="1430" y="177" width="12.5" height="12.5" fill="#990f07"/><rect x="1442" y="177" width="12.5" height="12.5" fill="#990c06"/><rect x="1454" y="177" width="12.5" height="12.5" fill="#990905"/><rect x="1466" y="177" width="12.5" height="12.5" fill="#990604"/><rect x="1478" y="177" width="12.5" height="12.5" fill="#990403"/><rect x="1490" y="177" width="12.5" height="12.5" fill="#990102"/><rect x="1502" y="177" width="12.5" height="12.5" fill="#990001"/><rect x="1514" y="177" width="12.5" height="12.5" fill="#990001"/><rect x="1526" y="177" width="12.5" height="12.5" fill="#990000"/><rect x="1538" y="177" width="12.5" height="12.5" fill="#990000"/><rect x="1550" y="177" width="12.5" height="12.5" fill="#990000"/><rect x="1562" y="177" width="12.5" height="12.5" fill="#990000"/><rect x="1574" y="177" width="12.5" height="12.5" fill="#990000"/><rect x="1586" y="177" width="12.5" height="12.5" fill="#990000"/><rect x="1598" y="177" width="12.5" height="12.5" fill="#990000"/><rect x="1610" y="177" width="12.5" height="12.5" fill="#990000"/><rect x="1622" y="177" width="12.5" height="12.5" fill="#990000"/><rect x="1634" y="177" width="12.5" height="12.5" fill="#990000"/><rect x="1022" y="189" width="12.5" height="12.5" fill="#009947"/><rect x="1034" y="189" width="12.5" height="12.5" fill="#009947"/><rect x="1046" y="189" width="12.5" height="12.5" fill="#009947"/><rect x="1058" y="189" width="12.5" height="12.5" fill="#009948"/><rect x="1070" y="189" width="12.5" height="12.5" fill="#009948"/><rect x="1082" y="189" width="12.5" height="12.5" fill="#009949"/><rect x="1094" y="189" width="12.5" height="12.5" fill="#00994a"/><rect x="1106" y="189" width="12.5" height="12.5" fill="#00994a"/><rect x="1118" y="189" width="12.5" height="12.5" fill="#00994b"/><rect x="1130" y="189" width="12.5" height="12.5" fill="#00994c"/><rect x="1142" y="189" width="12.5" height="12.5" fill="#00994c"/><rect x="1154" y="189" width="12.5" height="12.5" fill="#00994d"/><rect x="1166" y="189" width="12.5" height="12.5" fill="#15994e"/><rect x="1178" y="189" width="12.5" height="12.5" fill="#2d994f"/><rect x="1190" y="189" width="12.5" height="12.5" fill="#449950"/><rect x="1202" y="189" width="12.5" height="12.5" fill="#5c9951"/><rect x="1214" y="189" width="12.5" height="12.5" fill="#769952"/><rect x="1226" y="189" width="12.5" height="12.5" fill="#919953"/><rect x="1238" y="189" width="12.5" height="12.5" fill="#99874b"/><rect x="1250" y="189" width="12.5" height="12.5" fill="#997341"/><rect x="1262" y="189" width="12.5" height="12.5" fill="#996339"/><rect x="1274" y="189" width="12.5" height="12.5" fill="#995532"/><rect x="1286" y="189" width="12.5" height="12.5" fill="#994b2d"/><rect x="1298" y="189" width="12.5" height="12.5" fill="#994128"/><rect x="1310" y="189" width="12.5" height="12.5" fill="#993924"/><rect x="1322" y="189" width="12.5" height="12.5" fill="#993221"/><rect x="1334" y="189" width="12.5" height="12.5" fill="#992c1e"/><rect x="1346" y="189" width="12.5" height="12.5" fill="#99271c"/><rect x="1358" y="189" width="12.5" height="12.5" fill="#992219"/><rect x="1370" y="189" width="12.5" height="12.5" fill="#991e17"/><rect x="1382" y="189" width="12.5" height="12.5" fill="#991a15"/><rect x="1394" y="189" width="12.5" height="12.5" fill="#991613"/><rect x="1406" y="189" width="12.5" height="12.5" fill="#991312"/><rect x="1418" y="189" width="12.5" height="12.5" fill="#990f10"/><rect x="1430" y="189" width="12.5" height="12.5" fill="#990c0f"/><rect x="1442" y="189" width="12.5" height="12.5" fill="#99090e"/><rect x="1454" y="189" width="12.5" height="12.5" fill="#99070d"/><rect x="1466" y="189" width="12.5" height="12.5" fill="#99040c"/><rect x="1478" y="189" width="12.5" height="12.5" fill="#99010b"/><rect x="1490" y="189" width="12.5" height="12.5" fill="#99000a"/><rect x="1502" y="189" width="12.5" height="12.5" fill="#990009"/><rect x="1514" y="189" width="12.5" height="12.5" fill="#990008"/><rect x="1526" y="189" width="12.5" height="12.5" fill="#990007"/><rect x="1538" y="189" width="12.5" height="12.5" fill="#990006"/><rect x="1550" y="189" width="12.5" height="12.5" fill="#990005"/><rect x="1562" y="189" width="12.5" height="12.5" fill="#990005"/><rect x="1574" y="189" width="12.5" height="12.5" fill="#990004"/><rect x="1586" y="189" width="12.5" height="12.5" fill="#990003"/><rect x="1598" y="189" width="12.5" height="12.5" fill="#990003"/><rect x="1610" y="189" width="12.5" height="12.5" fill="#990002"/><rect x="1622" y="189" width="12.5" height="12.5" fill="#990002"/><rect x="1634" y="189" width="12.5" height="12.5" fill="#990001"/><rect x="1646" y="189" width="12.5" height="12.5" fill="#990000"/><rect x="1658" y="189" width="12.5" height="12.5" fill="#990000"/><rect x="1022" y="201" width="12.5" height="12.5" fill="#009955"/><rect x="1034" y="201" width="12.5" height="12.5" fill="#009956"/><rect x="1046" y="201" width="12.5" height="12.5" fill="#009957"/><rect x="1058" y="201" width="12.5" height="12.5" fill="#009958"/><rect x="1070" y="201" width="12.5" height="12.5" fill="#009959"/><rect x="1082" y="201" width="12.5" height="12.5" fill="#00995a"/><rect x="1094" y="201" width="12.5" height="12.5" fill="#00995b"/><rect x="1106" y="201" width="12.5" height="12.5" fill="#00995c"/><rect x="1118" y="201" width="12.5" height="12.5" fill="#00995d"/><rect x="1130" y="201" width="12.5" height="12.5" fill="#00995e"/><rect x="1142" y="201" width="12.5" height="12.5" fill="#009960"/><rect x="1154" y="201" width="12.5" height="12.5" fill="#009961"/><rect x="1166" y="201" width="12.5" height="12.5" fill="#129963"/><rect x="1178" y="201" width="12.5" height="12.5" fill="#2b9965"/><rect x="1190" y="201" width="12.5" height="12.5" fill="#439967"/><rect x="1202" y="201" width="12.5" height="12.5" fill="#5c9969"/><rect x="1214" y="201" width="12.5" height="12.5" fill="#77996b"/><rect x="1226" y="201" width="12.5" height="12.5" fill="#93996d"/><rect x="1238" y="201" width="12.5" height="12.5" fill="#998461"/><rect x="1250" y="201" width="12.5" height="12.5" fill="#997054"/><rect x="1262" y="201" width="12.5" height="12.5" fill="#995f4a"/><rect x="1274" y="201" width="12.5" height="12.5" fill="#995242"/><rect x="1286" y="201" width="12.5" height="12.5" fill="#99483b"/><rect x="1298" y="201" width="12.5" height="12.5" fill="#993e36"/><rect x="1310" y="201" width="12.5" height="12.5" fill="#993731"/><rect x="1322" y="201" width="12.5" height="12.5" fill="#99302d"/><rect x="1334" y="201" width="12.5" height="12.5" fill="#992a29"/><rect x="1346" y="201" width="12.5" height="12.5" fill="#992426"/><rect x="1358" y="201" width="12.5" height="12.5" fill="#992023"/><rect x="1370" y="201" width="12.5" height="12.5" fill="#991b20"/><rect x="1382" y="201" width="12.5" height="12.5" fill="#99171e"/><rect x="1394" y="201" width="12.5" height="12.5" fill="#99141c"/><rect x="1406" y="201" width="12.5" height="12.5" fill="#99101a"/><rect x="1418" y="201" width="12.5" height="12.5" fill="#990d18"/><rect x="1430" y="201" width="12.5" height="12.5" fill="#990a17"/><rect x="1442" y="201" width="12.5" height="12.5" fill="#990715"/><rect x="1454" y="201" width="12.5" height="12.5" fill="#990414"/><rect x="1466" y="201" width="12.5" height="12.5" fill="#990112"/><rect x="1478" y="201" width="12.5" height="12.5" fill="#990011"/><rect x="1490" y="201" width="12.5" height="12.5" fill="#990010"/><rect x="1502" y="201" width="12.5" height="12.5" fill="#99000f"/><rect x="1514" y="201" width="12.5" height="12.5" fill="#99000e"/><rect x="1526" y="201" width="12.5" height="12.5" fill="#99000d"/><rect x="1538" y="201" width="12.5" height="12.5" fill="#99000c"/><rect x="1550" y="201" width="12.5" height="12.5" fill="#99000b"/><rect x="1562" y="201" width="12.5" height="12.5" fill="#99000b"/><rect x="1574" y="201" width="12.5" height="12.5" fill="#99000a"/><rect x="1586" y="201" width="12.5" height="12.5" fill="#990009"/><rect x="1598" y="201" width="12.5" height="12.5" fill="#990008"/><rect x="1610" y="201" width="12.5" height="12.5" fill="#990008"/><rect x="1622" y="201" width="12.5" height="12.5" fill="#990007"/><rect x="1634" y="201" width="12.5" height="12.5" fill="#990006"/><rect x="1646" y="201" width="12.5" height="12.5" fill="#990006"/><rect x="1658" y="201" width="12.5" height="12.5" fill="#990005"/><rect x="1022" y="213" width="12.5" height="12.5" fill="#009964"/><rect x="1034" y="213" width="12.5" height="12.5" fill="#009965"/><rect x="1046" y="213" width="12.5" height="12.5" fill="#009966"/><rect x="1058" y="213" width="12.5" height="12.5" fill="#009968"/><rect x="1070" y="213" width="12.5" height="12.5" fill="#009969"/><rect x="1082" y="213" width="12.5" height="12.5" fill="#00996b"/><rect x="1094" y="213" width="12.5" height="12.5" fill="#00996c"/><rect x="1106" y="213" width="12.5" height="12.5" fill="#00996e"/><rect x="1118" y="213" width="12.5" height="12.5" fill="#009970"/><rect x="1130" y="213" width="12.5" height="12.5" fill="#009972"/><rect x="1142" y="213" width="12.5" height="12.5" fill="#009974"/><rect x="1154" y="213" width="12.5" height="12.5" fill="#009976"/><rect x="1166" y="213" width="12.5" height="12.5" fill="#0e9979"/><rect x="1178" y="213" width="12.5" height="12.5" fill="#28997c"/><rect x="1190" y="213" width="12.5" height="12.5" fill="#42997f"/><rect x="1202" y="213" width="12.5" height="12.5" fill="#5c9982"/><rect x="1214" y="213" width="12.5" height="12.5" fill="#789985"/><rect x="1226" y="213" width="12.5" height="12.5" fill="#969989"/><rect x="1238" y="213" width="12.5" height="12.5" fill="#998177"/><rect x="1250" y="213" width="12.5" height="12.5" fill="#996c68"/><rect x="1262" y="213" width="12.5" height="12.5" fill="#995c5b"/><rect x="1274" y="213" width="12.5" height="12.5" fill="#994f52"/><rect x="1286" y="213" width="12.5" height="12.5" fill="#994549"/><rect x="1298" y="213" width="12.5" height="12.5" fill="#993b43"/><rect x="1310" y="213" width="12.5" height="12.5" fill="#99343d"/><rect x="1322" y="213" width="12.5" height="12.5" fill="#992d38"/><rect x="1334" y="213" width="12.5" height="12.5" fill="#992734"/><rect x="1346" y="213" width="12.5" height="12.5" fill="#992230"/><rect x="1358" y="213" width="12.5" height="12.5" fill="#991d2c"/><rect x="1370" y="213" width="12.5" height="12.5" fill="#991929"/><rect x="1382" y="213" width="12.5" height="12.5" fill="#991527"/><rect x="1394" y="213" width="12.5" height="12.5" fill="#991124"/><rect x="1406" y="213" width="12.5" height="12.5" fill="#990e22"/><rect x="1418" y="213" width="12.5" height="12.5" fill="#990a20"/><rect x="1430" y="213" width="12.5" height="12.5" fill="#99071e"/><rect x="1442" y="213" width="12.5" height="12.5" fill="#99041c"/><rect x="1454" y="213" width="12.5" height="12.5" fill="#99011b"/><rect x="1466" y="213" width="12.5" height="12.5" fill="#990019"/><rect x="1478" y="213" width="12.5" height="12.5" fill="#990018"/><rect x="1490" y="213" width="12.5" height="12.5" fill="#990016"/><rect x="1502" y="213" width="12.5" height="12.5" fill="#990015"/><rect x="1514" y="213" width="12.5" height="12.5" fill="#990014"/><rect x="1526" y="213" width="12.5" height="12.5" fill="#990013"/><rect x="1538" y="213" width="12.5" height="12.5" fill="#990012"/><rect x="1550" y="213" width="12.5" height="12.5" fill="#990011"/><rect x="1562" y="213" width="12.5" height="12.5" fill="#990010"/><rect x="1574" y="213" width="12.5" height="12.5" fill="#99000f"/><rect x="1586" y="213" width="12.5" height="12.5" fill="#99000e"/><rect x="1598" y="213" width="12.5" height="12.5" fill="#99000d"/><rect x="1610" y="213" width="12.5" height="12.5" fill="#99000d"/><rect x="1622" y="213" width="12.5" height="12.5" fill="#99000c"/><rect x="1634" y="213" width="12.5" height="12.5" fill="#99000b"/><rect x="1646" y="213" width="12.5" height="12.5" fill="#99000b"/><rect x="1658" y="213" width="12.5" height="12.5" fill="#99000a"/><rect x="1034" y="225" width="12.5" height="12.5" fill="#009975"/><rect x="1046" y="225" width="12.5" height="12.5" fill="#009976"/><rect x="1058" y="225" width="12.5" height="12.5" fill="#009978"/><rect x="1070" y="225" width="12.5" height="12.5" fill="#00997a"/><rect x="1082" y="225" width="12.5" height="12.5" fill="#00997c"/><rect x="1094" y="225" width="12.5" height="12.5" fill="#00997f"/><rect x="1106" y="225" width="12.5" height="12.5" fill="#009981"/><rect x="1118" y="225" width="12.5" height="12.5" fill="#009984"/><rect x="1130" y="225" width="12.5" height="12.5" fill="#009986"/><rect x="1142" y="225" width="12.5" height="12.5" fill="#009989"/><rect x="1154" y="225" width="12.5" height="12.5" fill="#00998d"/><rect x="1166" y="225" width="12.5" height="12.5" fill="#0a9990"/><rect x="1178" y="225" width="12.5" height="12.5" fill="#269994"/><rect x="1190" y="225" width="12.5" height="12.5" fill="#419998"/><rect x="1202" y="225" width="12.5" height="12.5" fill="#5a9699"/><rect x="1214" y="225" width="12.5" height="12.5" fill="#739199"/><rect x="1226" y="225" width="12.5" height="12.5" fill="#8c8c99"/><rect x="1238" y="225" width="12.5" height="12.5" fill="#997e8e"/><rect x="1250" y="225" width="12.5" height="12.5" fill="#99697b"/><rect x="1262" y="225" width="12.5" height="12.5" fill="#99596d"/><rect x="1274" y="225" width="12.5" height="12.5" fill="#994c61"/><rect x="1286" y="225" width="12.5" height="12.5" fill="#994158"/><rect x="1298" y="225" width="12.5" height="12.5" fill="#993850"/><rect x="1310" y="225" width="12.5" height="12.5" fill="#993149"/><rect x="1322" y="225" width="12.5" height="12.5" fill="#992a43"/><rect x="1334" y="225" width="12.5" height="12.5" fill="#99243e"/><rect x="1346" y="225" width="12.5" height="12.5" fill="#991f3a"/><rect x="1358" y="225" width="12.5" height="12.5" fill="#991a36"/><rect x="1370" y="225" width="12.5" height="12.5" fill="#991632"/><rect x="1382" y="225" width="12.5" height="12.5" fill="#99122f"/><rect x="1394" y="225" width="12.5" height="12.5" fill="#990e2c"/><rect x="1406" y="225" width="12.5" height="12.5" fill="#990b2a"/><rect x="1418" y="225" width="12.5" height="12.5" fill="#990827"/><rect x="1430" y="225" width="12.5" height="12.5" fill="#990525"/><rect x="1442" y="225" width="12.5" height="12.5" fill="#990223"/><rect x="1454" y="225" width="12.5" height="12.5" fill="#990021"/><rect x="1466" y="225" width="12.5" height="12.5" fill="#990020"/><rect x="1478" y="225" width="12.5" height="12.5" fill="#99001e"/><rect x="1490" y="225" width="12.5" height="12.5" fill="#99001c"/><rect x="1502" y="225" width="12.5" height="12.5" fill="#99001b"/><rect x="1514" y="225" width="12.5" height="12.5" fill="#99001a"/><rect x="1526" y="225" width="12.5" height="12.5" fill="#990019"/><rect x="1538" y="225" width="12.5" height="12.5" fill="#990017"/><rect x="1550" y="225" width="12.5" height="12.5" fill="#990016"/><rect x="1562" y="225" width="12.5" height="12.5" fill="#990015"/><rect x="1574" y="225" width="12.5" height="12.5" fill="#990014"/><rect x="1586" y="225" width="12.5" height="12.5" fill="#990013"/><rect x="1598" y="225" width="12.5" height="12.5" fill="#990012"/><rect x="1610" y="225" width="12.5" height="12.5" fill="#990011"/><rect x="1622" y="225" width="12.5" height="12.5" fill="#990011"/><rect x="1634" y="225" width="12.5" height="12.5" fill="#990010"/><rect x="1646" y="225" width="12.5" height="12.5" fill="#99000f"/><rect x="1034" y="237" width="12.5" height="12.5" fill="#009985"/><rect x="1046" y="237" width="12.5" height="12.5" fill="#009987"/><rect x="1058" y="237" width="12.5" height="12.5" fill="#009989"/><rect x="1070" y="237" width="12.5" height="12.5" fill="#00998c"/><rect x="1082" y="237" width="12.5" height="12.5" fill="#00998f"/><rect x="1094" y="237" width="12.5" height="12.5" fill="#009992"/><rect x="1106" y="237" width="12.5" height="12.5" fill="#009995"/><rect x="1118" y="237" width="12.5" height="12.5" fill="#009998"/><rect x="1130" y="237" width="12.5" height="12.5" fill="#009699"/><rect x="1142" y="237" width="12.5" height="12.5" fill="#009399"/><rect x="1154" y="237" width="12.5" height="12.5" fill="#008f99"/><rect x="1166" y="237" width="12.5" height="12.5" fill="#058b99"/><rect x="1178" y="237" width="12.5" height="12.5" fill="#1f8799"/><rect x="1190" y="237" width="12.5" height="12.5" fill="#368399"/><rect x="1202" y="237" width="12.5" height="12.5" fill="#4c7f99"/><rect x="1214" y="237" width="12.5" height="12.5" fill="#627a99"/><rect x="1226" y="237" width="12.5" height="12.5" fill="#787699"/><rect x="1238" y="237" width="12.5" height="12.5" fill="#8d7199"/><rect x="1250" y="237" width="12.5" height="12.5" fill="#996690"/><rect x="1262" y="237" width="12.5" height="12.5" fill="#99557f"/><rect x="1274" y="237" width="12.5" height="12.5" fill="#994971"/><rect x="1286" y="237" width="12.5" height="12.5" fill="#993e66"/><rect x="1298" y="237" width="12.5" height="12.5" fill="#99355d"/><rect x="1310" y="237" width="12.5" height="12.5" fill="#992d55"/><rect x="1322" y="237" width="12.5" height="12.5" fill="#99274f"/><rect x="1334" y="237" width="12.5" height="12.5" fill="#992149"/><rect x="1346" y="237" width="12.5" height="12.5" fill="#991c44"/><rect x="1358" y="237" width="12.5" height="12.5" fill="#99173f"/><rect x="1370" y="237" width="12.5" height="12.5" fill="#99133b"/><rect x="1382" y="237" width="12.5" height="12.5" fill="#990f38"/><rect x="1394" y="237" width="12.5" height="12.5" fill="#990c34"/><rect x="1406" y="237" width="12.5" height="12.5" fill="#990831"/><rect x="1418" y="237" width="12.5" height="12.5" fill="#99052f"/><rect x="1430" y="237" width="12.5" height="12.5" fill="#99022c"/><rect x="1442" y="237" width="12.5" height="12.5" fill="#99002a"/><rect x="1454" y="237" width="12.5" height="12.5" fill="#990028"/><rect x="1466" y="237" width="12.5" height="12.5" fill="#990026"/><rect x="1478" y="237" width="12.5" height="12.5" fill="#990024"/><rect x="1490" y="237" width="12.5" height="12.5" fill="#990022"/><rect x="1502" y="237" width="12.5" height="12.5" fill="#990021"/><rect x="1514" y="237" width="12.5" height="12.5" fill="#99001f"/><rect x="1526" y="237" width="12.5" height="12.5" fill="#99001e"/><rect x="1538" y="237" width="12.5" height="12.5" fill="#99001d"/><rect x="1550" y="237" width="12.5" height="12.5" fill="#99001b"/><rect x="1562" y="237" width="12.5" height="12.5" fill="#99001a"/><rect x="1574" y="237" width="12.5" height="12.5" fill="#990019"/><rect x="1586" y="237" width="12.5" height="12.5" fill="#990018"/><rect x="1598" y="237" width="12.5" height="12.5" fill="#990017"/><rect x="1610" y="237" width="12.5" height="12.5" fill="#990016"/><rect x="1622" y="237" width="12.5" height="12.5" fill="#990015"/><rect x="1634" y="237" width="12.5" height="12.5" fill="#990014"/><rect x="1034" y="249" width="12.5" height="12.5" fill="#009996"/><rect x="1046" y="249" width="12.5" height="12.5" fill="#009998"/><rect x="1058" y="249" width="12.5" height="12.5" fill="#009799"/><rect x="1070" y="249" width="12.5" height="12.5" fill="#009399"/><rect x="1082" y="249" width="12.5" height="12.5" fill="#009099"/><rect x="1094" y="249" width="12.5" height="12.5" fill="#008d99"/><rect x="1106" y="249" width="12.5" height="12.5" fill="#008a99"/><rect x="1118" y="249" width="12.5" height="12.5" fill="#008699"/><rect x="1130" y="249" width="12.5" height="12.5" fill="#008399"/><rect x="1142" y="249" width="12.5" height="12.5" fill="#008099"/><rect x="1154" y="249" width="12.5" height="12.5" fill="#007c99"/><rect x="1166" y="249" width="12.5" height="12.5" fill="#007899"/><rect x="1178" y="249" width="12.5" height="12.5" fill="#187499"/><rect x="1190" y="249" width="12.5" height="12.5" fill="#2d7099"/><rect x="1202" y="249" width="12.5" height="12.5" fill="#416c99"/><rect x="1214" y="249" width="12.5" height="12.5" fill="#556899"/><rect x="1226" y="249" width="12.5" height="12.5" fill="#686499"/><rect x="1238" y="249" width="12.5" height="12.5" fill="#7b6099"/><rect x="1250" y="249" width="12.5" height="12.5" fill="#8f5b99"/><rect x="1262" y="249" width="12.5" height="12.5" fill="#995291"/><rect x="1274" y="249" width="12.5" height="12.5" fill="#994581"/><rect x="1286" y="249" width="12.5" height="12.5" fill="#993b75"/><rect x="1298" y="249" width="12.5" height="12.5" fill="#99326a"/><rect x="1310" y="249" width="12.5" height="12.5" fill="#992a61"/><rect x="1322" y="249" width="12.5" height="12.5" fill="#99245a"/><rect x="1334" y="249" width="12.5" height="12.5" fill="#991e53"/><rect x="1346" y="249" width="12.5" height="12.5" fill="#99194e"/><rect x="1358" y="249" width="12.5" height="12.5" fill="#991449"/><rect x="1370" y="249" width="12.5" height="12.5" fill="#991044"/><rect x="1382" y="249" width="12.5" height="12.5" fill="#990c40"/><rect x="1394" y="249" width="12.5" height="12.5" fill="#99093c"/><rect x="1406" y="249" width="12.5" height="12.5" fill="#990539"/><rect x="1418" y="249" width="12.5" height="12.5" fill="#990236"/><rect x="1430" y="249" width="12.5" height="12.5" fill="#990033"/><rect x="1442" y="249" width="12.5" height="12.5" fill="#990031"/><rect x="1454" y="249" width="12.5" height="12.5" fill="#99002e"/><rect x="1466" y="249" width="12.5" height="12.5" fill="#99002c"/><rect x="1478" y="249" width="12.5" height="12.5" fill="#99002a"/><rect x="1490" y="249" width="12.5" height="12.5" fill="#990028"/><rect x="1502" y="249" width="12.5" height="12.5" fill="#990027"/><rect x="1514" y="249" width="12.5" height="12.5" fill="#990025"/><rect x="1526" y="249" width="12.5" height="12.5" fill="#990023"/><rect x="1538" y="249" width="12.5" height="12.5" fill="#990022"/><rect x="1550" y="249" width="12.5" height="12.5" fill="#990020"/><rect x="1562" y="249" width="12.5" height="12.5" fill="#99001f"/><rect x="1574" y="249" width="12.5" height="12.5" fill="#99001e"/><rect x="1586" y="249" width="12.5" height="12.5" fill="#99001d"/><rect x="1598" y="249" width="12.5" height="12.5" fill="#99001c"/><rect x="1610" y="249" width="12.5" height="12.5" fill="#99001b"/><rect x="1622" y="249" width="12.5" height="12.5" fill="#99001a"/><rect x="1046" y="261" width="12.5" height="12.5" fill="#008999"/><rect x="1058" y="261" width="12.5" height="12.5" fill="#008699"/><rect x="1070" y="261" width="12.5" height="12.5" fill="#008399"/><rect x="1082" y="261" width="12.5" height="12.5" fill="#008099"/><rect x="1094" y="261" width="12.5" height="12.5" fill="#007d99"/><rect x="1106" y="261" width="12.5" height="12.5" fill="#007a99"/><rect x="1118" y="261" width="12.5" height="12.5" fill="#007799"/><rect x="1130" y="261" width="12.5" height="12.5" fill="#007399"/><rect x="1142" y="261" width="12.5" height="12.5" fill="#007099"/><rect x="1154" y="261" width="12.5" height="12.5" fill="#006d99"/><rect x="1166" y="261" width="12.5" height="12.5" fill="#006999"/><rect x="1178" y="261" width="12.5" height="12.5" fill="#136599"/><rect x="1190" y="261" width="12.5" height="12.5" fill="#266299"/><rect x="1202" y="261" width="12.5" height="12.5" fill="#385e99"/><rect x="1214" y="261" width="12.5" height="12.5" fill="#4a5a99"/><rect x="1226" y="261" width="12.5" height="12.5" fill="#5c5699"/><rect x="1238" y="261" width="12.5" height="12.5" fill="#6d5299"/><rect x="1250" y="261" width="12.5" height="12.5" fill="#7e4d99"/><rect x="1262" y="261" width="12.5" height="12.5" fill="#904999"/><rect x="1274" y="261" width="12.5" height="12.5" fill="#994192"/><rect x="1286" y="261" width="12.5" height="12.5" fill="#993783"/><rect x="1298" y="261" width="12.5" height="12.5" fill="#992e78"/><rect x="1310" y="261" width="12.5" height="12.5" fill="#99276e"/><rect x="1322" y="261" width="12.5" height="12.5" fill="#992065"/><rect x="1334" y="261" width="12.5" height="12.5" fill="#991b5e"/><rect x="1346" y="261" width="12.5" height="12.5" fill="#991658"/><rect x="1358" y="261" width="12.5" height="12.5" fill="#991152"/><rect x="1370" y="261" width="12.5" height="12.5" fill="#990d4d"/><rect x="1382" y="261" width="12.5" height="12.5" fill="#990948"/><rect x="1394" y="261" width="12.5" height="12.5" fill="#990644"/><rect x="1406" y="261" width="12.5" height="12.5" fill="#990241"/><rect x="1418" y="261" width="12.5" height="12.5" fill="#99003d"/><rect x="1430" y="261" width="12.5" height="12.5" fill="#99003a"/><rect x="1442" y="261" width="12.5" height="12.5" fill="#990037"/><rect x="1454" y="261" width="12.5" height="12.5" fill="#990035"/><rect x="1466" y="261" width="12.5" height="12.5" fill="#990032"/><rect x="1478" y="261" width="12.5" height="12.5" fill="#990030"/><rect x="1490" y="261" width="12.5" height="12.5" fill="#99002e"/><rect x="1502" y="261" width="12.5" height="12.5" fill="#99002c"/><rect x="1514" y="261" width="12.5" height="12.5" fill="#99002a"/><rect x="1526" y="261" width="12.5" height="12.5" fill="#990029"/><rect x="1538" y="261" width="12.5" height="12.5" fill="#990027"/><rect x="1550" y="261" width="12.5" height="12.5" fill="#990025"/><rect x="1562" y="261" width="12.5" height="12.5" fill="#990024"/><rect x="1574" y="261" width="12.5" height="12.5" fill="#990023"/><rect x="1586" y="261" width="12.5" height="12.5" fill="#990021"/><rect x="1598" y="261" width="12.5" height="12.5" fill="#990020"/><rect x="1610" y="261" width="12.5" height="12.5" fill="#99001f"/><rect x="1046" y="273" width="12.5" height="12.5" fill="#007b99"/><rect x="1058" y="273" width="12.5" height="12.5" fill="#007899"/><rect x="1070" y="273" width="12.5" height="12.5" fill="#007699"/><rect x="1082" y="273" width="12.5" height="12.5" fill="#007399"/><rect x="1094" y="273" width="12.5" height="12.5" fill="#007099"/><rect x="1106" y="273" width="12.5" height="12.5" fill="#006d99"/><rect x="1118" y="273" width="12.5" height="12.5" fill="#006a99"/><rect x="1130" y="273" width="12.5" height="12.5" fill="#006699"/><rect x="1142" y="273" width="12.5" height="12.5" fill="#006399"/><rect x="1154" y="273" width="12.5" height="12.5" fill="#006099"/><rect x="1166" y="273" width="12.5" height="12.5" fill="#005c99"/><rect x="1178" y="273" width="12.5" height="12.5" fill="#0e5999"/><rect x="1190" y="273" width="12.5" height="12.5" fill="#205599"/><rect x="1202" y="273" width="12.5" height="12.5" fill="#315299"/><rect x="1214" y="273" width="12.5" height="12.5" fill="#414e99"/><rect x="1226" y="273" width="12.5" height="12.5" fill="#514a99"/><rect x="1238" y="273" width="12.5" height="12.5" fill="#614699"/><rect x="1250" y="273" width="12.5" height="12.5" fill="#714299"/><rect x="1262" y="273" width="12.5" height="12.5" fill="#813e99"/><rect x="1274" y="273" width="12.5" height="12.5" fill="#903a99"/><rect x="1286" y="273" width="12.5" height="12.5" fill="#993392"/><rect x="1298" y="273" width="12.5" height="12.5" fill="#992b85"/><rect x="1310" y="273" width="12.5" height="12.5" fill="#99237a"/><rect x="1322" y="273" width="12.5" height="12.5" fill="#991d71"/><rect x="1334" y="273" width="12.5" height="12.5" fill="#991769"/><rect x="1346" y="273" width="12.5" height="12.5" fill="#991362"/><rect x="1358" y="273" width="12.5" height="12.5" fill="#990e5b"/><rect x="1370" y="273" width="12.5" height="12.5" fill="#990a56"/><rect x="1382" y="273" width="12.5" height="12.5" fill="#990651"/><rect x="1394" y="273" width="12.5" height="12.5" fill="#99024c"/><rect x="1406" y="273" width="12.5" height="12.5" fill="#990048"/><rect x="1418" y="273" width="12.5" height="12.5" fill="#990045"/><rect x="1430" y="273" width="12.5" height="12.5" fill="#990041"/><rect x="1442" y="273" width="12.5" height="12.5" fill="#99003e"/><rect x="1454" y="273" width="12.5" height="12.5" fill="#99003b"/><rect x="1466" y="273" width="12.5" height="12.5" fill="#990039"/><rect x="1478" y="273" width="12.5" height="12.5" fill="#990036"/><rect x="1490" y="273" width="12.5" height="12.5" fill="#990034"/><rect x="1502" y="273" width="12.5" height="12.5" fill="#990032"/><rect x="1514" y="273" width="12.5" height="12.5" fill="#990030"/><rect x="1526" y="273" width="12.5" height="12.5" fill="#99002e"/><rect x="1538" y="273" width="12.5" height="12.5" fill="#99002c"/><rect x="1550" y="273" width="12.5" height="12.5" fill="#99002a"/><rect x="1562" y="273" width="12.5" height="12.5" fill="#990029"/><rect x="1574" y="273" width="12.5" height="12.5" fill="#990027"/><rect x="1586" y="273" width="12.5" height="12.5" fill="#990026"/><rect x="1598" y="273" width="12.5" height="12.5" fill="#990025"/><rect x="1046" y="285" width="12.5" height="12.5" fill="#006f99"/><rect x="1058" y="285" width="12.5" height="12.5" fill="#006d99"/><rect x="1070" y="285" width="12.5" height="12.5" fill="#006a99"/><rect x="1082" y="285" width="12.5" height="12.5" fill="#006799"/><rect x="1094" y="285" width="12.5" height="12.5" fill="#006499"/><rect x="1106" y="285" width="12.5" height="12.5" fill="#006199"/><rect x="1118" y="285" width="12.5" height="12.5" fill="#005e99"/><rect x="1130" y="285" width="12.5" height="12.5" fill="#005b99"/><rect x="1142" y="285" width="12.5" height="12.5" fill="#005899"/><rect x="1154" y="285" width="12.5" height="12.5" fill="#005599"/><rect x="1166" y="285" width="12.5" height="12.5" fill="#005299"/><rect x="1178" y="285" width="12.5" height="12.5" fill="#0a4e99"/><rect x="1190" y="285" width="12.5" height="12.5" fill="#1b4b99"/><rect x="1202" y="285" width="12.5" height="12.5" fill="#2b4899"/><rect x="1214" y="285" width="12.5" height="12.5" fill="#3a4499"/><rect x="1226" y="285" width="12.5" height="12.5" fill="#494099"/><rect x="1238" y="285" width="12.5" height="12.5" fill="#573d99"/><rect x="1250" y="285" width="12.5" height="12.5" fill="#663999"/><rect x="1262" y="285" width="12.5" height="12.5" fill="#743599"/><rect x="1274" y="285" width="12.5" height="12.5" fill="#833199"/><rect x="1286" y="285" width="12.5" height="12.5" fill="#912d99"/><rect x="1298" y="285" width="12.5" height="12.5" fill="#992793"/><rect x="1310" y="285" width="12.5" height="12.5" fill="#992087"/><rect x="1322" y="285" width="12.5" height="12.5" fill="#99197c"/><rect x="1334" y="285" width="12.5" height="12.5" fill="#991473"/><rect x="1346" y="285" width="12.5" height="12.5" fill="#990f6c"/><rect x="1358" y="285" width="12.5" height="12.5" fill="#990b65"/><rect x="1370" y="285" width="12.5" height="12.5" fill="#99065f"/><rect x="1382" y="285" width="12.5" height="12.5" fill="#990259"/><rect x="1394" y="285" width="12.5" height="12.5" fill="#990054"/><rect x="1406" y="285" width="12.5" height="12.5" fill="#990050"/><rect x="1418" y="285" width="12.5" height="12.5" fill="#99004c"/><rect x="1430" y="285" width="12.5" height="12.5" fill="#990048"/><rect x="1442" y="285" width="12.5" height="12.5" fill="#990045"/><rect x="1454" y="285" width="12.5" height="12.5" fill="#990042"/><rect x="1466" y="285" width="12.5" height="12.5" fill="#99003f"/><rect x="1478" y="285" width="12.5" height="12.5" fill="#99003c"/><rect x="1490" y="285" width="12.5" height="12.5" fill="#99003a"/><rect x="1502" y="285" width="12.5" height="12.5" fill="#990037"/><rect x="1514" y="285" width="12.5" height="12.5" fill="#990035"/><rect x="1526" y="285" width="12.5" height="12.5" fill="#990033"/><rect x="1538" y="285" width="12.5" height="12.5" fill="#990031"/><rect x="1550" y="285" width="12.5" height="12.5" fill="#99002f"/><rect x="1562" y="285" width="12.5" height="12.5" fill="#99002e"/><rect x="1574" y="285" width="12.5" height="12.5" fill="#99002c"/><rect x="1586" y="285" width="12.5" height="12.5" fill="#99002b"/><rect x="1058" y="297" width="12.5" height="12.5" fill="#006399"/><rect x="1070" y="297" width="12.5" height="12.5" fill="#006099"/><rect x="1082" y="297" width="12.5" height="12.5" fill="#005d99"/><rect x="1094" y="297" width="12.5" height="12.5" fill="#005a99"/><rect x="1106" y="297" width="12.5" height="12.5" fill="#005899"/><rect x="1118" y="297" width="12.5" height="12.5" fill="#005599"/><rect x="1130" y="297" width="12.5" height="12.5" fill="#005299"/><rect x="1142" y="297" width="12.5" height="12.5" fill="#004f99"/><rect x="1154" y="297" width="12.5" height="12.5" fill="#004c99"/><rect x="1166" y="297" width="12.5" height="12.5" fill="#004999"/><rect x="1178" y="297" width="12.5" height="12.5" fill="#074599"/><rect x="1190" y="297" width="12.5" height="12.5" fill="#174299"/><rect x="1202" y="297" width="12.5" height="12.5" fill="#263f99"/><rect x="1214" y="297" width="12.5" height="12.5" fill="#343b99"/><rect x="1226" y="297" width="12.5" height="12.5" fill="#413899"/><rect x="1238" y="297" width="12.5" height="12.5" fill="#4f3499"/><rect x="1250" y="297" width="12.5" height="12.5" fill="#5c3199"/><rect x="1262" y="297" width="12.5" height="12.5" fill="#6a2d99"/><rect x="1274" y="297" width="12.5" height="12.5" fill="#772999"/><rect x="1286" y="297" width="12.5" height="12.5" fill="#842599"/><rect x="1298" y="297" width="12.5" height="12.5" fill="#912199"/><rect x="1310" y="297" width="12.5" height="12.5" fill="#991c93"/><rect x="1322" y="297" width="12.5" height="12.5" fill="#991688"/><rect x="1334" y="297" width="12.5" height="12.5" fill="#99107e"/><rect x="1346" y="297" width="12.5" height="12.5" fill="#990b76"/><rect x="1358" y="297" width="12.5" height="12.5" fill="#99076e"/><rect x="1370" y="297" width="12.5" height="12.5" fill="#990368"/><rect x="1382" y="297" width="12.5" height="12.5" fill="#990062"/><rect x="1394" y="297" width="12.5" height="12.5" fill="#99005c"/><rect x="1406" y="297" width="12.5" height="12.5" fill="#990057"/><rect x="1418" y="297" width="12.5" height="12.5" fill="#990053"/><rect x="1430" y="297" width="12.5" height="12.5" fill="#99004f"/><rect x="1442" y="297" width="12.5" height="12.5" fill="#99004b"/><rect x="1454" y="297" width="12.5" height="12.5" fill="#990048"/><rect x="1466" y="297" width="12.5" height="12.5" fill="#990045"/><rect x="1478" y="297" width="12.5" height="12.5" fill="#990042"/><rect x="1490" y="297" width="12.5" height="12.5" fill="#99003f"/><rect x="1502" y="297" width="12.5" height="12.5" fill="#99003d"/><rect x="1514" y="297" width="12.5" height="12.5" fill="#99003a"/><rect x="1526" y="297" width="12.5" height="12.5" fill="#990038"/><rect x="1538" y="297" width="12.5" height="12.5" fill="#990036"/><rect x="1550" y="297" width="12.5" height="12.5" fill="#990034"/><rect x="1562" y="297" width="12.5" height="12.5" fill="#990032"/><rect x="1574" y="297" width="12.5" height="12.5" fill="#990031"/><rect x="1058" y="309" width="12.5" height="12.5" fill="#005a99"/><rect x="1070" y="309" width="12.5" height="12.5" fill="#005799"/><rect x="1082" y="309" width="12.5" height="12.5" fill="#005499"/><rect x="1094" y="309" width="12.5" height="12.5" fill="#005299"/><rect x="1106" y="309" width="12.5" height="12.5" fill="#004f99"/><rect x="1118" y="309" width="12.5" height="12.5" fill="#004c99"/><rect x="1130" y="309" width="12.5" height="12.5" fill="#004a99"/><rect x="1142" y="309" width="12.5" height="12.5" fill="#004799"/><rect x="1154" y="309" width="12.5" height="12.5" fill="#004499"/><rect x="1166" y="309" width="12.5" height="12.5" fill="#004199"/><rect x="1178" y="309" width="12.5" height="12.5" fill="#033e99"/><rect x="1190" y="309" width="12.5" height="12.5" fill="#133b99"/><rect x="1202" y="309" width="12.5" height="12.5" fill="#213799"/><rect x="1214" y="309" width="12.5" height="12.5" fill="#2e3499"/><rect x="1226" y="309" width="12.5" height="12.5" fill="#3b3199"/><rect x="1238" y="309" width="12.5" height="12.5" fill="#482d99"/><rect x="1250" y="309" width="12.5" height="12.5" fill="#542a99"/><rect x="1262" y="309" width="12.5" height="12.5" fill="#612699"/><rect x="1274" y="309" width="12.5" height="12.5" fill="#6d2299"/><rect x="1286" y="309" width="12.5" height="12.5" fill="#791f99"/><rect x="1298" y="309" width="12.5" height="12.5" fill="#861b99"/><rect x="1310" y="309" width="12.5" height="12.5" fill="#921799"/><rect x="1322" y="309" width="12.5" height="12.5" fill="#991294"/><rect x="1334" y="309" width="12.5" height="12.5" fill="#990c89"/><rect x="1346" y="309" width="12.5" height="12.5" fill="#990780"/><rect x="1358" y="309" width="12.5" height="12.5" fill="#990378"/><rect x="1370" y="309" width="12.5" height="12.5" fill="#990071"/><rect x="1382" y="309" width="12.5" height="12.5" fill="#99006a"/><rect x="1394" y="309" width="12.5" height="12.5" fill="#990064"/><rect x="1406" y="309" width="12.5" height="12.5" fill="#99005f"/><rect x="1418" y="309" width="12.5" height="12.5" fill="#99005a"/><rect x="1430" y="309" width="12.5" height="12.5" fill="#990056"/><rect x="1442" y="309" width="12.5" height="12.5" fill="#990052"/><rect x="1454" y="309" width="12.5" height="12.5" fill="#99004e"/><rect x="1466" y="309" width="12.5" height="12.5" fill="#99004b"/><rect x="1478" y="309" width="12.5" height="12.5" fill="#990048"/><rect x="1490" y="309" width="12.5" height="12.5" fill="#990045"/><rect x="1502" y="309" width="12.5" height="12.5" fill="#990042"/><rect x="1514" y="309" width="12.5" height="12.5" fill="#990040"/><rect x="1526" y="309" width="12.5" height="12.5" fill="#99003d"/><rect x="1538" y="309" width="12.5" height="12.5" fill="#99003b"/><rect x="1550" y="309" width="12.5" height="12.5" fill="#990039"/><rect x="1562" y="309" width="12.5" height="12.5" fill="#990037"/><rect x="1574" y="309" width="12.5" height="12.5" fill="#990035"/><rect x="1070" y="321" width="12.5" height="12.5" fill="#004f99"/><rect x="1082" y="321" width="12.5" height="12.5" fill="#004d99"/><rect x="1094" y="321" width="12.5" height="12.5" fill="#004a99"/><rect x="1106" y="321" width="12.5" height="12.5" fill="#004899"/><rect x="1118" y="321" width="12.5" height="12.5" fill="#004599"/><rect x="1130" y="321" width="12.5" height="12.5" fill="#004299"/><rect x="1142" y="321" width="12.5" height="12.5" fill="#003f99"/><rect x="1154" y="321" width="12.5" height="12.5" fill="#003d99"/><rect x="1166" y="321" width="12.5" height="12.5" fill="#003a99"/><rect x="1178" y="321" width="12.5" height="12.5" fill="#003799"/><rect x="1190" y="321" width="12.5" height="12.5" fill="#103499"/><rect x="1202" y="321" width="12.5" height="12.5" fill="#1d3199"/><rect x="1214" y="321" width="12.5" height="12.5" fill="#292e99"/><rect x="1226" y="321" width="12.5" height="12.5" fill="#362a99"/><rect x="1238" y="321" width="12.5" height="12.5" fill="#422799"/><rect x="1250" y="321" width="12.5" height="12.5" fill="#4d2499"/><rect x="1262" y="321" width="12.5" height="12.5" fill="#592099"/><rect x="1274" y="321" width="12.5" height="12.5" fill="#641d99"/><rect x="1286" y="321" width="12.5" height="12.5" fill="#701999"/><rect x="1298" y="321" width="12.5" height="12.5" fill="#7b1599"/><rect x="1310" y="321" width="12.5" height="12.5" fill="#871199"/><rect x="1322" y="321" width="12.5" height="12.5" fill="#920d99"/><rect x="1334" y="321" width="12.5" height="12.5" fill="#990894"/><rect x="1346" y="321" width="12.5" height="12.5" fill="#99038a"/><rect x="1358" y="321" width="12.5" height="12.5" fill="#990081"/><rect x="1370" y="321" width="12.5" height="12.5" fill="#99007a"/><rect x="1382" y="321" width="12.5" height="12.5" fill="#990073"/><rect x="1394" y="321" width="12.5" height="12.5" fill="#99006c"/><rect x="1406" y="321" width="12.5" height="12.5" fill="#990067"/><rect x="1418" y="321" width="12.5" height="12.5" fill="#990062"/><rect x="1430" y="321" width="12.5" height="12.5" fill="#99005d"/><rect x="1442" y="321" width="12.5" height="12.5" fill="#990059"/><rect x="1454" y="321" width="12.5" height="12.5" fill="#990055"/><rect x="1466" y="321" width="12.5" height="12.5" fill="#990051"/><rect x="1478" y="321" width="12.5" height="12.5" fill="#99004e"/><rect x="1490" y="321" width="12.5" height="12.5" fill="#99004b"/><rect x="1502" y="321" width="12.5" height="12.5" fill="#990048"/><rect x="1514" y="321" width="12.5" height="12.5" fill="#990045"/><rect x="1526" y="321" width="12.5" height="12.5" fill="#990043"/><rect x="1538" y="321" width="12.5" height="12.5" fill="#990040"/><rect x="1550" y="321" width="12.5" height="12.5" fill="#99003e"/><rect x="1562" y="321" width="12.5" height="12.5" fill="#99003c"/><rect x="1070" y="333" width="12.5" height="12.5" fill="#004899"/><rect x="1082" y="333" width="12.5" height="12.5" fill="#004699"/><rect x="1094" y="333" width="12.5" height="12.5" fill="#004399"/><rect x="1106" y="333" width="12.5" height="12.5" fill="#004199"/><rect x="1118" y="333" width="12.5" height="12.5" fill="#003e99"/><rect x="1130" y="333" width="12.5" height="12.5" fill="#003c99"/><rect x="1142" y="333" width="12.5" height="12.5" fill="#003999"/><rect x="1154" y="333" width="12.5" height="12.5" fill="#003699"/><rect x="1166" y="333" width="12.5" height="12.5" fill="#003499"/><rect x="1178" y="333" width="12.5" height="12.5" fill="#003199"/><rect x="1190" y="333" width="12.5" height="12.5" fill="#0d2e99"/><rect x="1202" y="333" width="12.5" height="12.5" fill="#192b99"/><rect x="1214" y="333" width="12.5" height="12.5" fill="#252899"/><rect x="1226" y="333" width="12.5" height="12.5" fill="#312599"/><rect x="1238" y="333" width="12.5" height="12.5" fill="#3c2199"/><rect x="1250" y="333" width="12.5" height="12.5" fill="#471e99"/><rect x="1262" y="333" width="12.5" height="12.5" fill="#521b99"/><rect x="1274" y="333" width="12.5" height="12.5" fill="#5d1799"/><rect x="1286" y="333" width="12.5" height="12.5" fill="#681499"/><rect x="1298" y="333" width="12.5" height="12.5" fill="#721099"/><rect x="1310" y="333" width="12.5" height="12.5" fill="#7d0c99"/><rect x="1322" y="333" width="12.5" height="12.5" fill="#880899"/><rect x="1334" y="333" width="12.5" height="12.5" fill="#930399"/><rect x="1346" y="333" width="12.5" height="12.5" fill="#990095"/><rect x="1358" y="333" width="12.5" height="12.5" fill="#99008b"/><rect x="1370" y="333" width="12.5" height="12.5" fill="#990083"/><rect x="1382" y="333" width="12.5" height="12.5" fill="#99007b"/><rect x="1394" y="333" width="12.5" height="12.5" fill="#990075"/><rect x="1406" y="333" width="12.5" height="12.5" fill="#99006e"/><rect x="1418" y="333" width="12.5" height="12.5" fill="#990069"/><rect x="1430" y="333" width="12.5" height="12.5" fill="#990064"/><rect x="1442" y="333" width="12.5" height="12.5" fill="#99005f"/><rect x="1454" y="333" width="12.5" height="12.5" fill="#99005b"/><rect x="1466" y="333" width="12.5" height="12.5" fill="#990057"/><rect x="1478" y="333" width="12.5" height="12.5" fill="#990054"/><rect x="1490" y="333" width="12.5" height="12.5" fill="#990050"/><rect x="1502" y="333" width="12.5" height="12.5" fill="#99004d"/><rect x="1514" y="333" width="12.5" height="12.5" fill="#99004a"/><rect x="1526" y="333" width="12.5" height="12.5" fill="#990048"/><rect x="1538" y="333" width="12.5" height="12.5" fill="#990045"/><rect x="1550" y="333" width="12.5" height="12.5" fill="#990043"/><rect x="1082" y="345" width="12.5" height="12.5" fill="#004099"/><rect x="1094" y="345" width="12.5" height="12.5" fill="#003d99"/><rect x="1106" y="345" width="12.5" height="12.5" fill="#003b99"/><rect x="1118" y="345" width="12.5" height="12.5" fill="#003899"/><rect x="1130" y="345" width="12.5" height="12.5" fill="#003699"/><rect x="1142" y="345" width="12.5" height="12.5" fill="#003399"/><rect x="1154" y="345" width="12.5" height="12.5" fill="#003199"/><rect x="1166" y="345" width="12.5" height="12.5" fill="#002e99"/><rect x="1178" y="345" width="12.5" height="12.5" fill="#002b99"/><rect x="1190" y="345" width="12.5" height="12.5" fill="#0a2899"/><rect x="1202" y="345" width="12.5" height="12.5" fill="#162699"/><rect x="1214" y="345" width="12.5" height="12.5" fill="#222399"/><rect x="1226" y="345" width="12.5" height="12.5" fill="#2c2099"/><rect x="1238" y="345" width="12.5" height="12.5" fill="#371c99"/><rect x="1250" y="345" width="12.5" height="12.5" fill="#421999"/><rect x="1262" y="345" width="12.5" height="12.5" fill="#4c1699"/><rect x="1274" y="345" width="12.5" height="12.5" fill="#561399"/><rect x="1286" y="345" width="12.5" height="12.5" fill="#600f99"/><rect x="1298" y="345" width="12.5" height="12.5" fill="#6a0b99"/><rect x="1310" y="345" width="12.5" height="12.5" fill="#750899"/><rect x="1322" y="345" width="12.5" height="12.5" fill="#7f0399"/><rect x="1334" y="345" width="12.5" height="12.5" fill="#890099"/><rect x="1346" y="345" width="12.5" height="12.5" fill="#930099"/><rect x="1358" y="345" width="12.5" height="12.5" fill="#990095"/><rect x="1370" y="345" width="12.5" height="12.5" fill="#99008c"/><rect x="1382" y="345" width="12.5" height="12.5" fill="#990084"/><rect x="1394" y="345" width="12.5" height="12.5" fill="#99007d"/><rect x="1406" y="345" width="12.5" height="12.5" fill="#990076"/><rect x="1418" y="345" width="12.5" height="12.5" fill="#990070"/><rect x="1430" y="345" width="12.5" height="12.5" fill="#99006b"/><rect x="1442" y="345" width="12.5" height="12.5" fill="#990066"/><rect x="1454" y="345" width="12.5" height="12.5" fill="#990062"/><rect x="1466" y="345" width="12.5" height="12.5" fill="#99005e"/><rect x="1478" y="345" width="12.5" height="12.5" fill="#99005a"/><rect x="1490" y="345" width="12.5" height="12.5" fill="#990056"/><rect x="1502" y="345" width="12.5" height="12.5" fill="#990053"/><rect x="1514" y="345" width="12.5" height="12.5" fill="#990050"/><rect x="1526" y="345" width="12.5" height="12.5" fill="#99004d"/><rect x="1538" y="345" width="12.5" height="12.5" fill="#99004a"/><rect x="1082" y="357" width="12.5" height="12.5" fill="#003a99"/><rect x="1094" y="357" width="12.5" height="12.5" fill="#003899"/><rect x="1106" y="357" width="12.5" height="12.5" fill="#003699"/><rect x="1118" y="357" width="12.5" height="12.5" fill="#003399"/><rect x="1130" y="357" width="12.5" height="12.5" fill="#003199"/><rect x="1142" y="357" width="12.5" height="12.5" fill="#002e99"/><rect x="1154" y="357" width="12.5" height="12.5" fill="#002c99"/><rect x="1166" y="357" width="12.5" height="12.5" fill="#002999"/><rect x="1178" y="357" width="12.5" height="12.5" fill="#002699"/><rect x="1190" y="357" width="12.5" height="12.5" fill="#072499"/><rect x="1202" y="357" width="12.5" height="12.5" fill="#132199"/><rect x="1214" y="357" width="12.5" height="12.5" fill="#1e1e99"/><rect x="1226" y="357" width="12.5" height="12.5" fill="#291b99"/><rect x="1238" y="357" width="12.5" height="12.5" fill="#331899"/><rect x="1250" y="357" width="12.5" height="12.5" fill="#3d1599"/><rect x="1262" y="357" width="12.5" height="12.5" fill="#461299"/><rect x="1274" y="357" width="12.5" height="12.5" fill="#500e99"/><rect x="1286" y="357" width="12.5" height="12.5" fill="#5a0b99"/><rect x="1298" y="357" width="12.5" height="12.5" fill="#630799"/><rect x="1310" y="357" width="12.5" height="12.5" fill="#6d0399"/><rect x="1322" y="357" width="12.5" height="12.5" fill="#770099"/><rect x="1334" y="357" width="12.5" height="12.5" fill="#800099"/><rect x="1346" y="357" width="12.5" height="12.5" fill="#8a0099"/><rect x="1358" y="357" width="12.5" height="12.5" fill="#930099"/><rect x="1370" y="357" width="12.5" height="12.5" fill="#990095"/><rect x="1382" y="357" width="12.5" height="12.5" fill="#99008d"/><rect x="1394" y="357" width="12.5" height="12.5" fill="#990085"/><rect x="1406" y="357" width="12.5" height="12.5" fill="#99007e"/><rect x="1418" y="357" width="12.5" height="12.5" fill="#990078"/><rect x="1430" y="357" width="12.5" height="12.5" fill="#990072"/><rect x="1442" y="357" width="12.5" height="12.5" fill="#99006d"/><rect x="1454" y="357" width="12.5" height="12.5" fill="#990068"/><rect x="1466" y="357" width="12.5" height="12.5" fill="#990064"/><rect x="1478" y="357" width="12.5" height="12.5" fill="#990060"/><rect x="1490" y="357" width="12.5" height="12.5" fill="#99005c"/><rect x="1502" y="357" width="12.5" height="12.5" fill="#990058"/><rect x="1514" y="357" width="12.5" height="12.5" fill="#990055"/><rect x="1526" y="357" width="12.5" height="12.5" fill="#990052"/><rect x="1094" y="369" width="12.5" height="12.5" fill="#003399"/><rect x="1106" y="369" width="12.5" height="12.5" fill="#003199"/><rect x="1118" y="369" width="12.5" height="12.5" fill="#002e99"/><rect x="1130" y="369" width="12.5" height="12.5" fill="#002c99"/><rect x="1142" y="369" width="12.5" height="12.5" fill="#002999"/><rect x="1154" y="369" width="12.5" height="12.5" fill="#002799"/><rect x="1166" y="369" width="12.5" height="12.5" fill="#002499"/><rect x="1178" y="369" width="12.5" height="12.5" fill="#002299"/><rect x="1190" y="369" width="12.5" height="12.5" fill="#051f99"/><rect x="1202" y="369" width="12.5" height="12.5" fill="#111c99"/><rect x="1214" y="369" width="12.5" height="12.5" fill="#1b1a99"/><rect x="1226" y="369" width="12.5" height="12.5" fill="#251799"/><rect x="1238" y="369" width="12.5" height="12.5" fill="#2f1499"/><rect x="1250" y="369" width="12.5" height="12.5" fill="#381199"/><rect x="1262" y="369" width="12.5" height="12.5" fill="#420e99"/><rect x="1274" y="369" width="12.5" height="12.5" fill="#4b0a99"/><rect x="1286" y="369" width="12.5" height="12.5" fill="#540799"/><rect x="1298" y="369" width="12.5" height="12.5" fill="#5d0399"/><rect x="1310" y="369" width="12.5" height="12.5" fill="#660099"/><rect x="1322" y="369" width="12.5" height="12.5" fill="#6f0099"/><rect x="1334" y="369" width="12.5" height="12.5" fill="#780099"/><rect x="1346" y="369" width="12.5" height="12.5" fill="#810099"/><rect x="1358" y="369" width="12.5" height="12.5" fill="#8a0099"/><rect x="1370" y="369" width="12.5" height="12.5" fill="#930099"/><rect x="1382" y="369" width="12.5" height="12.5" fill="#990096"/><rect x="1394" y="369" width="12.5" height="12.5" fill="#99008d"/><rect x="1406" y="369" width="12.5" height="12.5" fill="#990086"/><rect x="1418" y="369" width="12.5" height="12.5" fill="#99007f"/><rect x="1430" y="369" width="12.5" height="12.5" fill="#990079"/><rect x="1442" y="369" width="12.5" height="12.5" fill="#990074"/><rect x="1454" y="369" width="12.5" height="12.5" fill="#99006f"/><rect x="1466" y="369" width="12.5" height="12.5" fill="#99006a"/><rect x="1478" y="369" width="12.5" height="12.5" fill="#990066"/><rect x="1490" y="369" width="12.5" height="12.5" fill="#990062"/><rect x="1502" y="369" width="12.5" height="12.5" fill="#99005e"/><rect x="1514" y="369" width="12.5" height="12.5" fill="#99005b"/><rect x="1106" y="381" width="12.5" height="12.5" fill="#002c99"/><rect x="1118" y="381" width="12.5" height="12.5" fill="#002a99"/><rect x="1130" y="381" width="12.5" height="12.5" fill="#002799"/><rect x="1142" y="381" width="12.5" height="12.5" fill="#002599"/><rect x="1154" y="381" width="12.5" height="12.5" fill="#002399"/><rect x="1166" y="381" width="12.5" height="12.5" fill="#002099"/><rect x="1178" y="381" width="12.5" height="12.5" fill="#001e99"/><rect x="1190" y="381" width="12.5" height="12.5" fill="#031b99"/><rect x="1202" y="381" width="12.5" height="12.5" fill="#0e1899"/><rect x="1214" y="381" width="12.5" height="12.5" fill="#181699"/><rect x="1226" y="381" width="12.5" height="12.5" fill="#221399"/><rect x="1238" y="381" width="12.5" height="12.5" fill="#2b1099"/><rect x="1250" y="381" width="12.5" height="12.5" fill="#340d99"/><rect x="1262" y="381" width="12.5" height="12.5" fill="#3d0a99"/><rect x="1274" y="381" width="12.5" height="12.5" fill="#460799"/><rect x="1286" y="381" width="12.5" height="12.5" fill="#4f0399"/><rect x="1298" y="381" width="12.5" height="12.5" fill="#570099"/><rect x="1310" y="381" width="12.5" height="12.5" fill="#600099"/><rect x="1322" y="381" width="12.5" height="12.5" fill="#690099"/><rect x="1334" y="381" width="12.5" height="12.5" fill="#710099"/><rect x="1346" y="381" width="12.5" height="12.5" fill="#7a0099"/><rect x="1358" y="381" width="12.5" height="12.5" fill="#820099"/><rect x="1370" y="381" width="12.5" height="12.5" fill="#8b0099"/><rect x="1382" y="381" width="12.5" height="12.5" fill="#940099"/><rect x="1394" y="381" width="12.5" height="12.5" fill="#990096"/><rect x="1406" y="381" width="12.5" height="12.5" fill="#99008e"/><rect x="1418" y="381" width="12.5" height="12.5" fill="#990087"/><rect x="1430" y="381" width="12.5" height="12.5" fill="#990080"/><rect x="1442" y="381" width="12.5" height="12.5" fill="#99007b"/><rect x="1454" y="381" width="12.5" height="12.5" fill="#990075"/><rect x="1466" y="381" width="12.5" height="12.5" fill="#990070"/><rect x="1478" y="381" width="12.5" height="12.5" fill="#99006c"/><rect x="1490" y="381" width="12.5" height="12.5" fill="#990068"/><rect x="1502" y="381" width="12.5" height="12.5" fill="#990064"/><rect x="1106" y="393" width="12.5" height="12.5" fill="#002899"/><rect x="1118" y="393" width="12.5" height="12.5" fill="#002699"/><rect x="1130" y="393" width="12.5" height="12.5" fill="#002399"/><rect x="1142" y="393" width="12.5" height="12.5" fill="#002199"/><rect x="1154" y="393" width="12.5" height="12.5" fill="#001f99"/><rect x="1166" y="393" width="12.5" height="12.5" fill="#001c99"/><rect x="1178" y="393" width="12.5" height="12.5" fill="#001a99"/><rect x="1190" y="393" width="12.5" height="12.5" fill="#001799"/><rect x="1202" y="393" width="12.5" height="12.5" fill="#0c1599"/><rect x="1214" y="393" width="12.5" height="12.5" fill="#161299"/><rect x="1226" y="393" width="12.5" height="12.5" fill="#1f0f99"/><rect x="1238" y="393" width="12.5" height="12.5" fill="#280c99"/><rect x="1250" y="393" width="12.5" height="12.5" fill="#310999"/><rect x="1262" y="393" width="12.5" height="12.5" fill="#390699"/><rect x="1274" y="393" width="12.5" height="12.5" fill="#420399"/><rect x="1286" y="393" width="12.5" height="12.5" fill="#4a0099"/><rect x="1298" y="393" width="12.5" height="12.5" fill="#520099"/><rect x="1310" y="393" width="12.5" height="12.5" fill="#5b0099"/><rect x="1322" y="393" width="12.5" height="12.5" fill="#630099"/><rect x="1334" y="393" width="12.5" height="12.5" fill="#6b0099"/><rect x="1346" y="393" width="12.5" height="12.5" fill="#730099"/><rect x="1358" y="393" width="12.5" height="12.5" fill="#7b0099"/><rect x="1370" y="393" width="12.5" height="12.5" fill="#840099"/><rect x="1382" y="393" width="12.5" height="12.5" fill="#8c0099"/><rect x="1394" y="393" width="12.5" height="12.5" fill="#940099"/><rect x="1406" y="393" width="12.5" height="12.5" fill="#990096"/><rect x="1418" y="393" width="12.5" height="12.5" fill="#99008e"/><rect x="1430" y="393" width="12.5" height="12.5" fill="#990088"/><rect x="1442" y="393" width="12.5" height="12.5" fill="#990081"/><rect x="1454" y="393" width="12.5" height="12.5" fill="#99007c"/><rect x="1466" y="393" width="12.5" height="12.5" fill="#990077"/><rect x="1478" y="393" width="12.5" height="12.5" fill="#990072"/><rect x="1490" y="393" width="12.5" height="12.5" fill="#99006d"/><rect x="1118" y="405" width="12.5" height="12.5" fill="#002299"/><rect x="1130" y="405" width="12.5" height="12.5" fill="#002099"/><rect x="1142" y="405" width="12.5" height="12.5" fill="#001d99"/><rect x="1154" y="405" width="12.5" height="12.5" fill="#001b99"/><rect x="1166" y="405" width="12.5" height="12.5" fill="#001999"/><rect x="1178" y="405" width="12.5" height="12.5" fill="#001699"/><rect x="1190" y="405" width="12.5" height="12.5" fill="#001499"/><rect x="1202" y="405" width="12.5" height="12.5" fill="#0a1199"/><rect x="1214" y="405" width="12.5" height="12.5" fill="#130f99"/><rect x="1226" y="405" width="12.5" height="12.5" fill="#1c0c99"/><rect x="1238" y="405" width="12.5" height="12.5" fill="#250999"/><rect x="1250" y="405" width="12.5" height="12.5" fill="#2d0699"/><rect x="1262" y="405" width="12.5" height="12.5" fill="#360399"/><rect x="1274" y="405" width="12.5" height="12.5" fill="#3e0099"/><rect x="1286" y="405" width="12.5" height="12.5" fill="#460099"/><rect x="1298" y="405" width="12.5" height="12.5" fill="#4e0099"/><rect x="1310" y="405" width="12.5" height="12.5" fill="#560099"/><rect x="1322" y="405" width="12.5" height="12.5" fill="#5d0099"/><rect x="1334" y="405" width="12.5" height="12.5" fill="#650099"/><rect x="1346" y="405" width="12.5" height="12.5" fill="#6d0099"/><rect x="1358" y="405" width="12.5" height="12.5" fill="#750099"/><rect x="1370" y="405" width="12.5" height="12.5" fill="#7d0099"/><rect x="1382" y="405" width="12.5" height="12.5" fill="#840099"/><rect x="1394" y="405" width="12.5" height="12.5" fill="#8c0099"/><rect x="1406" y="405" width="12.5" height="12.5" fill="#940099"/><rect x="1418" y="405" width="12.5" height="12.5" fill="#990096"/><rect x="1430" y="405" width="12.5" height="12.5" fill="#99008f"/><rect x="1442" y="405" width="12.5" height="12.5" fill="#990088"/><rect x="1454" y="405" width="12.5" height="12.5" fill="#990082"/><rect x="1466" y="405" width="12.5" height="12.5" fill="#99007d"/><rect x="1478" y="405" width="12.5" height="12.5" fill="#990078"/><rect x="1118" y="417" width="12.5" height="12.5" fill="#001e99"/><rect x="1130" y="417" width="12.5" height="12.5" fill="#001c99"/><rect x="1142" y="417" width="12.5" height="12.5" fill="#001a99"/><rect x="1154" y="417" width="12.5" height="12.5" fill="#001899"/><rect x="1166" y="417" width="12.5" height="12.5" fill="#001599"/><rect x="1178" y="417" width="12.5" height="12.5" fill="#001399"/><rect x="1190" y="417" width="12.5" height="12.5" fill="#001199"/><rect x="1202" y="417" width="12.5" height="12.5" fill="#080e99"/><rect x="1214" y="417" width="12.5" height="12.5" fill="#110b99"/><rect x="1226" y="417" width="12.5" height="12.5" fill="#1a0999"/><rect x="1238" y="417" width="12.5" height="12.5" fill="#220699"/><rect x="1250" y="417" width="12.5" height="12.5" fill="#2a0399"/><rect x="1262" y="417" width="12.5" height="12.5" fill="#320099"/><rect x="1274" y="417" width="12.5" height="12.5" fill="#3a0099"/><rect x="1286" y="417" width="12.5" height="12.5" fill="#420099"/><rect x="1298" y="417" width="12.5" height="12.5" fill="#490099"/><rect x="1310" y="417" width="12.5" height="12.5" fill="#510099"/><rect x="1322" y="417" width="12.5" height="12.5" fill="#580099"/><rect x="1334" y="417" width="12.5" height="12.5" fill="#600099"/><rect x="1346" y="417" width="12.5" height="12.5" fill="#670099"/><rect x="1358" y="417" width="12.5" height="12.5" fill="#6f0099"/><rect x="1370" y="417" width="12.5" height="12.5" fill="#760099"/><rect x="1382" y="417" width="12.5" height="12.5" fill="#7e0099"/><rect x="1394" y="417" width="12.5" height="12.5" fill="#850099"/><rect x="1406" y="417" width="12.5" height="12.5" fill="#8d0099"/><rect x="1418" y="417" width="12.5" height="12.5" fill="#940099"/><rect x="1430" y="417" width="12.5" height="12.5" fill="#990096"/><rect x="1442" y="417" width="12.5" height="12.5" fill="#99008f"/><rect x="1454" y="417" width="12.5" height="12.5" fill="#990089"/><rect x="1466" y="417" width="12.5" height="12.5" fill="#990083"/><rect x="1130" y="429" width="12.5" height="12.5" fill="#001999"/><rect x="1142" y="429" width="12.5" height="12.5" fill="#001799"/><rect x="1154" y="429" width="12.5" height="12.5" fill="#001599"/><rect x="1166" y="429" width="12.5" height="12.5" fill="#001299"/><rect x="1178" y="429" width="12.5" height="12.5" fill="#001099"/><rect x="1190" y="429" width="12.5" height="12.5" fill="#000e99"/><rect x="1202" y="429" width="12.5" height="12.5" fill="#060b99"/><rect x="1214" y="429" width="12.5" height="12.5" fill="#0f0899"/><rect x="1226" y="429" width="12.5" height="12.5" fill="#180699"/><rect x="1238" y="429" width="12.5" height="12.5" fill="#200399"/><rect x="1250" y="429" width="12.5" height="12.5" fill="#270099"/><rect x="1262" y="429" width="12.5" height="12.5" fill="#2f0099"/><rect x="1274" y="429" width="12.5" height="12.5" fill="#370099"/><rect x="1286" y="429" width="12.5" height="12.5" fill="#3e0099"/><rect x="1298" y="429" width="12.5" height="12.5" fill="#450099"/><rect x="1310" y="429" width="12.5" height="12.5" fill="#4d0099"/><rect x="1322" y="429" width="12.5" height="12.5" fill="#540099"/><rect x="1334" y="429" width="12.5" height="12.5" fill="#5b0099"/><rect x="1346" y="429" width="12.5" height="12.5" fill="#620099"/><rect x="1358" y="429" width="12.5" height="12.5" fill="#690099"/><rect x="1370" y="429" width="12.5" height="12.5" fill="#710099"/><rect x="1382" y="429" width="12.5" height="12.5" fill="#780099"/><rect x="1394" y="429" width="12.5" height="12.5" fill="#7f0099"/><rect x="1406" y="429" width="12.5" height="12.5" fill="#860099"/><rect x="1418" y="429" width="12.5" height="12.5" fill="#8d0099"/><rect x="1430" y="429" width="12.5" height="12.5" fill="#940099"/><rect x="1442" y="429" width="12.5" height="12.5" fill="#990097"/><rect x="1454" y="429" width="12.5" height="12.5" fill="#990090"/><rect x="1142" y="441" width="12.5" height="12.5" fill="#001499"/><rect x="1154" y="441" width="12.5" height="12.5" fill="#001299"/><rect x="1166" y="441" width="12.5" height="12.5" fill="#000f99"/><rect x="1178" y="441" width="12.5" height="12.5" fill="#000d99"/><rect x="1190" y="441" width="12.5" height="12.5" fill="#000b99"/><rect x="1202" y="441" width="12.5" height="12.5" fill="#040899"/><rect x="1214" y="441" width="12.5" height="12.5" fill="#0d0599"/><rect x="1226" y="441" width="12.5" height="12.5" fill="#150399"/><rect x="1238" y="441" width="12.5" height="12.5" fill="#1d0099"/><rect x="1250" y="441" width="12.5" height="12.5" fill="#250099"/><rect x="1262" y="441" width="12.5" height="12.5" fill="#2c0099"/><rect x="1274" y="441" width="12.5" height="12.5" fill="#330099"/><rect x="1286" y="441" width="12.5" height="12.5" fill="#3b0099"/><rect x="1298" y="441" width="12.5" height="12.5" fill="#420099"/><rect x="1310" y="441" width="12.5" height="12.5" fill="#490099"/><rect x="1322" y="441" width="12.5" height="12.5" fill="#500099"/><rect x="1334" y="441" width="12.5" height="12.5" fill="#570099"/><rect x="1346" y="441" width="12.5" height="12.5" fill="#5e0099"/><rect x="1358" y="441" width="12.5" height="12.5" fill="#640099"/><rect x="1370" y="441" width="12.5" height="12.5" fill="#6b0099"/><rect x="1382" y="441" width="12.5" height="12.5" fill="#720099"/><rect x="1394" y="441" width="12.5" height="12.5" fill="#790099"/><rect x="1406" y="441" width="12.5" height="12.5" fill="#800099"/><rect x="1418" y="441" width="12.5" height="12.5" fill="#870099"/><rect x="1430" y="441" width="12.5" height="12.5" fill="#8e0099"/><rect x="1442" y="441" width="12.5" height="12.5" fill="#950099"/><rect x="1142" y="453" width="12.5" height="12.5" fill="#001199"/><rect x="1154" y="453" width="12.5" height="12.5" fill="#000f99"/><rect x="1166" y="453" width="12.5" height="12.5" fill="#000d99"/><rect x="1178" y="453" width="12.5" height="12.5" fill="#000a99"/><rect x="1190" y="453" width="12.5" height="12.5" fill="#000899"/><rect x="1202" y="453" width="12.5" height="12.5" fill="#020599"/><rect x="1214" y="453" width="12.5" height="12.5" fill="#0b0399"/><rect x="1226" y="453" width="12.5" height="12.5" fill="#130099"/><rect x="1238" y="453" width="12.5" height="12.5" fill="#1b0099"/><rect x="1250" y="453" width="12.5" height="12.5" fill="#220099"/><rect x="1262" y="453" width="12.5" height="12.5" fill="#2a0099"/><rect x="1274" y="453" width="12.5" height="12.5" fill="#310099"/><rect x="1286" y="453" width="12.5" height="12.5" fill="#370099"/><rect x="1298" y="453" width="12.5" height="12.5" fill="#3e0099"/><rect x="1310" y="453" width="12.5" height="12.5" fill="#450099"/><rect x="1322" y="453" width="12.5" height="12.5" fill="#4c0099"/><rect x="1334" y="453" width="12.5" height="12.5" fill="#530099"/><rect x="1346" y="453" width="12.5" height="12.5" fill="#590099"/><rect x="1358" y="453" width="12.5" height="12.5" fill="#600099"/><rect x="1370" y="453" width="12.5" height="12.5" fill="#660099"/><rect x="1382" y="453" width="12.5" height="12.5" fill="#6d0099"/><rect x="1394" y="453" width="12.5" height="12.5" fill="#740099"/><rect x="1406" y="453" width="12.5" height="12.5" fill="#7a0099"/><rect x="1418" y="453" width="12.5" height="12.5" fill="#810099"/><rect x="1430" y="453" width="12.5" height="12.5" fill="#870099"/><rect x="1154" y="465" width="12.5" height="12.5" fill="#000c99"/><rect x="1166" y="465" width="12.5" height="12.5" fill="#000a99"/><rect x="1178" y="465" width="12.5" height="12.5" fill="#000899"/><rect x="1190" y="465" width="12.5" height="12.5" fill="#000599"/><rect x="1202" y="465" width="12.5" height="12.5" fill="#010299"/><rect x="1214" y="465" width="12.5" height="12.5" fill="#0a0099"/><rect x="1226" y="465" width="12.5" height="12.5" fill="#120099"/><rect x="1238" y="465" width="12.5" height="12.5" fill="#190099"/><rect x="1250" y="465" width="12.5" height="12.5" fill="#200099"/><rect x="1262" y="465" width="12.5" height="12.5" fill="#270099"/><rect x="1274" y="465" width="12.5" height="12.5" fill="#2e0099"/><rect x="1286" y="465" width="12.5" height="12.5" fill="#350099"/><rect x="1298" y="465" width="12.5" height="12.5" fill="#3b0099"/><rect x="1310" y="465" width="12.5" height="12.5" fill="#420099"/><rect x="1322" y="465" width="12.5" height="12.5" fill="#480099"/><rect x="1334" y="465" width="12.5" height="12.5" fill="#4f0099"/><rect x="1346" y="465" width="12.5" height="12.5" fill="#550099"/><rect x="1358" y="465" width="12.5" height="12.5" fill="#5c0099"/><rect x="1370" y="465" width="12.5" height="12.5" fill="#620099"/><rect x="1382" y="465" width="12.5" height="12.5" fill="#680099"/><rect x="1394" y="465" width="12.5" height="12.5" fill="#6f0099"/><rect x="1406" y="465" width="12.5" height="12.5" fill="#750099"/><rect x="1418" y="465" width="12.5" height="12.5" fill="#7b0099"/><rect x="1166" y="477" width="12.5" height="12.5" fill="#000799"/><rect x="1178" y="477" width="12.5" height="12.5" fill="#000599"/><rect x="1190" y="477" width="12.5" height="12.5" fill="#000299"/><rect x="1202" y="477" width="12.5" height="12.5" fill="#000099"/><rect x="1214" y="477" width="12.5" height="12.5" fill="#080099"/><rect x="1226" y="477" width="12.5" height="12.5" fill="#100099"/><rect x="1238" y="477" width="12.5" height="12.5" fill="#170099"/><rect x="1250" y="477" width="12.5" height="12.5" fill="#1e0099"/><rect x="1262" y="477" width="12.5" height="12.5" fill="#250099"/><rect x="1274" y="477" width="12.5" height="12.5" fill="#2b0099"/><rect x="1286" y="477" width="12.5" height="12.5" fill="#320099"/><rect x="1298" y="477" width="12.5" height="12.5" fill="#380099"/><rect x="1310" y="477" width="12.5" height="12.5" fill="#3f0099"/><rect x="1322" y="477" width="12.5" height="12.5" fill="#450099"/><rect x="1334" y="477" width="12.5" height="12.5" fill="#4b0099"/><rect x="1346" y="477" width="12.5" height="12.5" fill="#510099"/><rect x="1358" y="477" width="12.5" height="12.5" fill="#580099"/><rect x="1370" y="477" width="12.5" height="12.5" fill="#5e0099"/><rect x="1382" y="477" width="12.5" height="12.5" fill="#640099"/><rect x="1394" y="477" width="12.5" height="12.5" fill="#6a0099"/><rect x="1406" y="477" width="12.5" height="12.5" fill="#700099"/><rect x="1178" y="489" width="12.5" height="12.5" fill="#000299"/><rect x="1190" y="489" width="12.5" height="12.5" fill="#000099"/><rect x="1202" y="489" width="12.5" height="12.5" fill="#000099"/><rect x="1214" y="489" width="12.5" height="12.5" fill="#070099"/><rect x="1226" y="489" width="12.5" height="12.5" fill="#0e0099"/><rect x="1238" y="489" width="12.5" height="12.5" fill="#150099"/><rect x="1250" y="489" width="12.5" height="12.5" fill="#1c0099"/><rect x="1262" y="489" width="12.5" height="12.5" fill="#230099"/><rect x="1274" y="489" width="12.5" height="12.5" fill="#290099"/><rect x="1286" y="489" width="12.5" height="12.5" fill="#2f0099"/><rect x="1298" y="489" width="12.5" height="12.5" fill="#350099"/><rect x="1310" y="489" width="12.5" height="12.5" fill="#3c0099"/><rect x="1322" y="489" width="12.5" height="12.5" fill="#420099"/><rect x="1334" y="489" width="12.5" height="12.5" fill="#480099"/><rect x="1346" y="489" width="12.5" height="12.5" fill="#4e0099"/><rect x="1358" y="489" width="12.5" height="12.5" fill="#540099"/><rect x="1370" y="489" width="12.5" height="12.5" fill="#5a0099"/><rect x="1382" y="489" width="12.5" height="12.5" fill="#600099"/><rect x="1394" y="489" width="12.5" height="12.5" fill="#660099"/><rect x="1178" y="501" width="12.5" height="12.5" fill="#000099"/><rect x="1190" y="501" width="12.5" height="12.5" fill="#000099"/><rect x="1202" y="501" width="12.5" height="12.5" fill="#000099"/><rect x="1214" y="501" width="12.5" height="12.5" fill="#050099"/><rect x="1226" y="501" width="12.5" height="12.5" fill="#0d0099"/><rect x="1238" y="501" width="12.5" height="12.5" fill="#140099"/><rect x="1250" y="501" width="12.5" height="12.5" fill="#1a0099"/><rect x="1262" y="501" width="12.5" height="12.5" fill="#210099"/><rect x="1274" y="501" width="12.5" height="12.5" fill="#270099"/><rect x="1286" y="501" width="12.5" height="12.5" fill="#2d0099"/><rect x="1298" y="501" width="12.5" height="12.5" fill="#330099"/><rect x="1310" y="501" width="12.5" height="12.5" fill="#390099"/><rect x="1322" y="501" width="12.5" height="12.5" fill="#3f0099"/><rect x="1334" y="501" width="12.5" height="12.5" fill="#450099"/><rect x="1346" y="501" width="12.5" height="12.5" fill="#4b0099"/><rect x="1358" y="501" width="12.5" height="12.5" fill="#500099"/><rect x="1370" y="501" width="12.5" height="12.5" fill="#560099"/><rect x="1382" y="501" width="12.5" height="12.5" fill="#5c0099"/><rect x="1190" y="513" width="12.5" height="12.5" fill="#000099"/><rect x="1202" y="513" width="12.5" height="12.5" fill="#000099"/><rect x="1214" y="513" width="12.5" height="12.5" fill="#040099"/><rect x="1226" y="513" width="12.5" height="12.5" fill="#0b0099"/><rect x="1238" y="513" width="12.5" height="12.5" fill="#120099"/><rect x="1250" y="513" width="12.5" height="12.5" fill="#180099"/><rect x="1262" y="513" width="12.5" height="12.5" fill="#1f0099"/><rect x="1274" y="513" width="12.5" height="12.5" fill="#250099"/><rect x="1286" y="513" width="12.5" height="12.5" fill="#2b0099"/><rect x="1298" y="513" width="12.5" height="12.5" fill="#300099"/><rect x="1310" y="513" width="12.5" height="12.5" fill="#360099"/><rect x="1322" y="513" width="12.5" height="12.5" fill="#3c0099"/><rect x="1334" y="513" width="12.5" height="12.5" fill="#420099"/><rect x="1346" y="513" width="12.5" height="12.5" fill="#470099"/><rect x="1358" y="513" width="12.5" height="12.5" fill="#4d0099"/><rect x="1370" y="513" width="12.5" height="12.5" fill="#530099"/><rect x="1202" y="525" width="12.5" height="12.5" fill="#000099"/><rect x="1214" y="525" width="12.5" height="12.5" fill="#020099"/><rect x="1226" y="525" width="12.5" height="12.5" fill="#0a0099"/><rect x="1238" y="525" width="12.5" height="12.5" fill="#100099"/><rect x="1250" y="525" width="12.5" height="12.5" fill="#170099"/><rect x="1262" y="525" width="12.5" height="12.5" fill="#1d0099"/><rect x="1274" y="525" width="12.5" height="12.5" fill="#230099"/><rect x="1286" y="525" width="12.5" height="12.5" fill="#280099"/><rect x="1298" y="525" width="12.5" height="12.5" fill="#2e0099"/><rect x="1310" y="525" width="12.5" height="12.5" fill="#340099"/><rect x="1322" y="525" width="12.5" height="12.5" fill="#390099"/><rect x="1334" y="525" width="12.5" height="12.5" fill="#3f0099"/><rect x="1346" y="525" width="12.5" height="12.5" fill="#440099"/><rect x="1358" y="525" width="12.5" height="12.5" fill="#4a0099"/><rect x="1214" y="537" width="12.5" height="12.5" fill="#010099"/><rect x="1226" y="537" width="12.5" height="12.5" fill="#080099"/><rect x="1238" y="537" width="12.5" height="12.5" fill="#0f0099"/><rect x="1250" y="537" width="12.5" height="12.5" fill="#150099"/><rect x="1262" y="537" width="12.5" height="12.5" fill="#1b0099"/><rect x="1274" y="537" width="12.5" height="12.5" fill="#210099"/><rect x="1286" y="537" width="12.5" height="12.5" fill="#260099"/><rect x="1298" y="537" width="12.5" height="12.5" fill="#2c0099"/><rect x="1310" y="537" width="12.5" height="12.5" fill="#320099"/><rect x="1322" y="537" width="12.5" height="12.5" fill="#370099"/><rect x="1334" y="537" width="12.5" height="12.5" fill="#3c0099"/><rect x="1346" y="537" width="12.5" height="12.5" fill="#420099"/><rect x="1226" y="549" width="12.5" height="12.5" fill="#070099"/><rect x="1238" y="549" width="12.5" height="12.5" fill="#0e0099"/><rect x="1250" y="549" width="12.5" height="12.5" fill="#140099"/><rect x="1262" y="549" width="12.5" height="12.5" fill="#190099"/><rect x="1274" y="549" width="12.5" height="12.5" fill="#1f0099"/><rect x="1286" y="549" width="12.5" height="12.5" fill="#250099"/><rect x="1298" y="549" width="12.5" height="12.5" fill="#2a0099"/><rect x="1310" y="549" width="12.5" height="12.5" fill="#2f0099"/><rect x="1322" y="549" width="12.5" height="12.5" fill="#350099"/><rect x="1334" y="549" width="12.5" height="12.5" fill="#3a0099"/><rect x="1238" y="561" width="12.5" height="12.5" fill="#0c0099"/><rect x="1250" y="561" width="12.5" height="12.5" fill="#120099"/><rect x="1262" y="561" width="12.5" height="12.5" fill="#180099"/><rect x="1274" y="561" width="12.5" height="12.5" fill="#1d0099"/><rect x="1286" y="561" width="12.5" height="12.5" fill="#230099"/><rect x="1298" y="561" width="12.5" height="12.5" fill="#280099"/><rect x="1310" y="561" width="12.5" height="12.5" fill="#2d0099"/><rect x="1322" y="561" width="12.5" height="12.5" fill="#330099"/><rect x="1262" y="573" width="12.5" height="12.5" fill="#160099"/><rect x="1274" y="573" width="12.5" height="12.5" fill="#1c0099"/><rect x="1286" y="573" width="12.5" height="12.5" fill="#210099"/><rect x="1298" y="573" width="12.5" height="12.5" fill="#260099"/><rect x="1310" y="573" width="12.5" height="12.5" fill="#2b0099"/><rect x="1274" y="585" width="12.5" height="12.5" fill="#1a0099"/><rect x="1286" y="585" width="12.5" height="12.5" fill="#1f0099"/><rect x="1298" y="585" width="12.5" height="12.5" fill="#250099"/></g><g clip-path="url(#triclip)"><rect x="1150" y="141" width="8.5" height="8.5" fill="#00ff00"/><rect x="1158" y="141" width="8.5" height="8.5" fill="#19ff00"/><rect x="1150" y="149" width="8.5" height="8.5" fill="#00ff10"/><rect x="1158" y="149" width="8.5" height="8.5" fill="#15ff0e"/><rect x="1166" y="149" width="8.5" height="8.5" fill="#2dff0c"/><rect x="1174" y="149" width="8.5" height="8.5" fill="#44ff0a"/><rect x="1182" y="149" width="8.5" height="8.5" fill="#5bff07"/><rect x="1190" y="149" width="8.5" height="8.5" fill="#71ff04"/><rect x="1198" y="149" width="8.5" height="8.5" fill="#89ff01"/><rect x="1206" y="149" width="8.5" height="8.5" fill="#a1ff00"/><rect x="1214" y="149" width="8.5" height="8.5" fill="#b9ff00"/><rect x="1222" y="149" width="8.5" height="8.5" fill="#d2ff00"/><rect x="1230" y="149" width="8.5" height="8.5" fill="#ecff00"/><rect x="1238" y="149" width="8.5" height="8.5" fill="#fff700"/><rect x="1150" y="157" width="8.5" height="8.5" fill="#00ff26"/><rect x="1158" y="157" width="8.5" height="8.5" fill="#12ff25"/><rect x="1166" y="157" width="8.5" height="8.5" fill="#2aff23"/><rect x="1174" y="157" width="8.5" height="8.5" fill="#42ff22"/><rect x="1182" y="157" width="8.5" height="8.5" fill="#59ff21"/><rect x="1190" y="157" width="8.5" height="8.5" fill="#70ff1f"/><rect x="1198" y="157" width="8.5" height="8.5" fill="#88ff1d"/><rect x="1206" y="157" width="8.5" height="8.5" fill="#a1ff1c"/><rect x="1214" y="157" width="8.5" height="8.5" fill="#baff1a"/><rect x="1222" y="157" width="8.5" height="8.5" fill="#d4ff18"/><rect x="1230" y="157" width="8.5" height="8.5" fill="#efff16"/><rect x="1238" y="157" width="8.5" height="8.5" fill="#fff413"/><rect x="1246" y="157" width="8.5" height="8.5" fill="#ffdc0f"/><rect x="1254" y="157" width="8.5" height="8.5" fill="#ffc70b"/><rect x="1262" y="157" width="8.5" height="8.5" fill="#ffb608"/><rect x="1270" y="157" width="8.5" height="8.5" fill="#ffa606"/><rect x="1278" y="157" width="8.5" height="8.5" fill="#ff9803"/><rect x="1286" y="157" width="8.5" height="8.5" fill="#ff8c00"/><rect x="1294" y="157" width="8.5" height="8.5" fill="#ff8100"/><rect x="1302" y="157" width="8.5" height="8.5" fill="#ff7700"/><rect x="1310" y="157" width="8.5" height="8.5" fill="#ff6e00"/><rect x="1318" y="157" width="8.5" height="8.5" fill="#ff6600"/><rect x="1150" y="165" width="8.5" height="8.5" fill="#00ff3b"/><rect x="1158" y="165" width="8.5" height="8.5" fill="#0eff3a"/><rect x="1166" y="165" width="8.5" height="8.5" fill="#27ff3a"/><rect x="1174" y="165" width="8.5" height="8.5" fill="#3fff39"/><rect x="1182" y="165" width="8.5" height="8.5" fill="#57ff38"/><rect x="1190" y="165" width="8.5" height="8.5" fill="#6fff37"/><rect x="1198" y="165" width="8.5" height="8.5" fill="#88ff36"/><rect x="1206" y="165" width="8.5" height="8.5" fill="#a1ff35"/><rect x="1214" y="165" width="8.5" height="8.5" fill="#bbff34"/><rect x="1222" y="165" width="8.5" height="8.5" fill="#d5ff33"/><rect x="1230" y="165" width="8.5" height="8.5" fill="#f1ff32"/><rect x="1238" y="165" width="8.5" height="8.5" fill="#fff12e"/><rect x="1246" y="165" width="8.5" height="8.5" fill="#ffd928"/><rect x="1254" y="165" width="8.5" height="8.5" fill="#ffc523"/><rect x="1262" y="165" width="8.5" height="8.5" fill="#ffb31f"/><rect x="1270" y="165" width="8.5" height="8.5" fill="#ffa31b"/><rect x="1278" y="165" width="8.5" height="8.5" fill="#ff9518"/><rect x="1286" y="165" width="8.5" height="8.5" fill="#ff8915"/><rect x="1294" y="165" width="8.5" height="8.5" fill="#ff7e12"/><rect x="1302" y="165" width="8.5" height="8.5" fill="#ff7410"/><rect x="1310" y="165" width="8.5" height="8.5" fill="#ff6c0e"/><rect x="1318" y="165" width="8.5" height="8.5" fill="#ff630c"/><rect x="1326" y="165" width="8.5" height="8.5" fill="#ff5c0a"/><rect x="1334" y="165" width="8.5" height="8.5" fill="#ff5508"/><rect x="1342" y="165" width="8.5" height="8.5" fill="#ff4e06"/><rect x="1350" y="165" width="8.5" height="8.5" fill="#ff4905"/><rect x="1358" y="165" width="8.5" height="8.5" fill="#ff4303"/><rect x="1366" y="165" width="8.5" height="8.5" fill="#ff3e01"/><rect x="1374" y="165" width="8.5" height="8.5" fill="#ff3900"/><rect x="1382" y="165" width="8.5" height="8.5" fill="#ff3400"/><rect x="1390" y="165" width="8.5" height="8.5" fill="#ff3000"/><rect x="1398" y="165" width="8.5" height="8.5" fill="#ff2c00"/><rect x="1158" y="173" width="8.5" height="8.5" fill="#09ff50"/><rect x="1166" y="173" width="8.5" height="8.5" fill="#24ff50"/><rect x="1174" y="173" width="8.5" height="8.5" fill="#3dff4f"/><rect x="1182" y="173" width="8.5" height="8.5" fill="#55ff4f"/><rect x="1190" y="173" width="8.5" height="8.5" fill="#6eff4f"/><rect x="1198" y="173" width="8.5" height="8.5" fill="#87ff4e"/><rect x="1206" y="173" width="8.5" height="8.5" fill="#a1ff4e"/><rect x="1214" y="173" width="8.5" height="8.5" fill="#bbff4e"/><rect x="1222" y="173" width="8.5" height="8.5" fill="#d7ff4d"/><rect x="1230" y="173" width="8.5" height="8.5" fill="#f3ff4d"/><rect x="1238" y="173" width="8.5" height="8.5" fill="#ffee48"/><rect x="1246" y="173" width="8.5" height="8.5" fill="#ffd640"/><rect x="1254" y="173" width="8.5" height="8.5" fill="#ffc13a"/><rect x="1262" y="173" width="8.5" height="8.5" fill="#ffb034"/><rect x="1270" y="173" width="8.5" height="8.5" fill="#ffa02f"/><rect x="1278" y="173" width="8.5" height="8.5" fill="#ff922b"/><rect x="1286" y="173" width="8.5" height="8.5" fill="#ff8627"/><rect x="1294" y="173" width="8.5" height="8.5" fill="#ff7b23"/><rect x="1302" y="173" width="8.5" height="8.5" fill="#ff7220"/><rect x="1310" y="173" width="8.5" height="8.5" fill="#ff691d"/><rect x="1318" y="173" width="8.5" height="8.5" fill="#ff601b"/><rect x="1326" y="173" width="8.5" height="8.5" fill="#ff5918"/><rect x="1334" y="173" width="8.5" height="8.5" fill="#ff5216"/><rect x="1342" y="173" width="8.5" height="8.5" fill="#ff4c14"/><rect x="1350" y="173" width="8.5" height="8.5" fill="#ff4612"/><rect x="1358" y="173" width="8.5" height="8.5" fill="#ff4010"/><rect x="1366" y="173" width="8.5" height="8.5" fill="#ff3b0f"/><rect x="1374" y="173" width="8.5" height="8.5" fill="#ff360d"/><rect x="1382" y="173" width="8.5" height="8.5" fill="#ff320c"/><rect x="1390" y="173" width="8.5" height="8.5" fill="#ff2d0a"/><rect x="1398" y="173" width="8.5" height="8.5" fill="#ff2909"/><rect x="1406" y="173" width="8.5" height="8.5" fill="#ff2608"/><rect x="1414" y="173" width="8.5" height="8.5" fill="#ff2207"/><rect x="1422" y="173" width="8.5" height="8.5" fill="#ff1e05"/><rect x="1430" y="173" width="8.5" height="8.5" fill="#ff1b04"/><rect x="1438" y="173" width="8.5" height="8.5" fill="#ff1803"/><rect x="1446" y="173" width="8.5" height="8.5" fill="#ff1502"/><rect x="1454" y="173" width="8.5" height="8.5" fill="#ff1201"/><rect x="1462" y="173" width="8.5" height="8.5" fill="#ff0f00"/><rect x="1470" y="173" width="8.5" height="8.5" fill="#ff0c00"/><rect x="1478" y="173" width="8.5" height="8.5" fill="#ff0900"/><rect x="1158" y="181" width="8.5" height="8.5" fill="#04ff65"/><rect x="1166" y="181" width="8.5" height="8.5" fill="#21ff66"/><rect x="1174" y="181" width="8.5" height="8.5" fill="#3aff66"/><rect x="1182" y="181" width="8.5" height="8.5" fill="#54ff66"/><rect x="1190" y="181" width="8.5" height="8.5" fill="#6dff67"/><rect x="1198" y="181" width="8.5" height="8.5" fill="#87ff67"/><rect x="1206" y="181" width="8.5" height="8.5" fill="#a1ff67"/><rect x="1214" y="181" width="8.5" height="8.5" fill="#bcff68"/><rect x="1222" y="181" width="8.5" height="8.5" fill="#d8ff68"/><rect x="1230" y="181" width="8.5" height="8.5" fill="#f6ff68"/><rect x="1238" y="181" width="8.5" height="8.5" fill="#ffeb61"/><rect x="1246" y="181" width="8.5" height="8.5" fill="#ffd357"/><rect x="1254" y="181" width="8.5" height="8.5" fill="#ffbe4f"/><rect x="1262" y="181" width="8.5" height="8.5" fill="#ffac48"/><rect x="1270" y="181" width="8.5" height="8.5" fill="#ff9d42"/><rect x="1278" y="181" width="8.5" height="8.5" fill="#ff8f3c"/><rect x="1286" y="181" width="8.5" height="8.5" fill="#ff8338"/><rect x="1294" y="181" width="8.5" height="8.5" fill="#ff7833"/><rect x="1302" y="181" width="8.5" height="8.5" fill="#ff6e30"/><rect x="1310" y="181" width="8.5" height="8.5" fill="#ff662c"/><rect x="1318" y="181" width="8.5" height="8.5" fill="#ff5d29"/><rect x="1326" y="181" width="8.5" height="8.5" fill="#ff5626"/><rect x="1334" y="181" width="8.5" height="8.5" fill="#ff4f23"/><rect x="1342" y="181" width="8.5" height="8.5" fill="#ff4921"/><rect x="1350" y="181" width="8.5" height="8.5" fill="#ff431f"/><rect x="1358" y="181" width="8.5" height="8.5" fill="#ff3e1c"/><rect x="1366" y="181" width="8.5" height="8.5" fill="#ff381a"/><rect x="1374" y="181" width="8.5" height="8.5" fill="#ff3419"/><rect x="1382" y="181" width="8.5" height="8.5" fill="#ff2f17"/><rect x="1390" y="181" width="8.5" height="8.5" fill="#ff2b15"/><rect x="1398" y="181" width="8.5" height="8.5" fill="#ff2714"/><rect x="1406" y="181" width="8.5" height="8.5" fill="#ff2312"/><rect x="1414" y="181" width="8.5" height="8.5" fill="#ff1f11"/><rect x="1422" y="181" width="8.5" height="8.5" fill="#ff1c0f"/><rect x="1430" y="181" width="8.5" height="8.5" fill="#ff190e"/><rect x="1438" y="181" width="8.5" height="8.5" fill="#ff150d"/><rect x="1446" y="181" width="8.5" height="8.5" fill="#ff120c"/><rect x="1454" y="181" width="8.5" height="8.5" fill="#ff0f0b"/><rect x="1462" y="181" width="8.5" height="8.5" fill="#ff0c0a"/><rect x="1470" y="181" width="8.5" height="8.5" fill="#ff0909"/><rect x="1478" y="181" width="8.5" height="8.5" fill="#ff0608"/><rect x="1486" y="181" width="8.5" height="8.5" fill="#ff0307"/><rect x="1158" y="189" width="8.5" height="8.5" fill="#00ff7b"/><rect x="1166" y="189" width="8.5" height="8.5" fill="#1dff7c"/><rect x="1174" y="189" width="8.5" height="8.5" fill="#38ff7d"/><rect x="1182" y="189" width="8.5" height="8.5" fill="#52ff7e"/><rect x="1190" y="189" width="8.5" height="8.5" fill="#6bff7f"/><rect x="1198" y="189" width="8.5" height="8.5" fill="#86ff80"/><rect x="1206" y="189" width="8.5" height="8.5" fill="#a1ff81"/><rect x="1214" y="189" width="8.5" height="8.5" fill="#bdff82"/><rect x="1222" y="189" width="8.5" height="8.5" fill="#daff83"/><rect x="1230" y="189" width="8.5" height="8.5" fill="#f8ff84"/><rect x="1238" y="189" width="8.5" height="8.5" fill="#ffe87a"/><rect x="1246" y="189" width="8.5" height="8.5" fill="#ffd06e"/><rect x="1254" y="189" width="8.5" height="8.5" fill="#ffbb64"/><rect x="1262" y="189" width="8.5" height="8.5" fill="#ffa95c"/><rect x="1270" y="189" width="8.5" height="8.5" fill="#ff9a54"/><rect x="1278" y="189" width="8.5" height="8.5" fill="#ff8c4e"/><rect x="1286" y="189" width="8.5" height="8.5" fill="#ff8048"/><rect x="1294" y="189" width="8.5" height="8.5" fill="#ff7543"/><rect x="1302" y="189" width="8.5" height="8.5" fill="#ff6b3e"/><rect x="1310" y="189" width="8.5" height="8.5" fill="#ff633a"/><rect x="1318" y="189" width="8.5" height="8.5" fill="#ff5a37"/><rect x="1326" y="189" width="8.5" height="8.5" fill="#ff5333"/><rect x="1334" y="189" width="8.5" height="8.5" fill="#ff4c30"/><rect x="1342" y="189" width="8.5" height="8.5" fill="#ff462d"/><rect x="1350" y="189" width="8.5" height="8.5" fill="#ff402a"/><rect x="1358" y="189" width="8.5" height="8.5" fill="#ff3b28"/><rect x="1366" y="189" width="8.5" height="8.5" fill="#ff3625"/><rect x="1374" y="189" width="8.5" height="8.5" fill="#ff3123"/><rect x="1382" y="189" width="8.5" height="8.5" fill="#ff2c21"/><rect x="1390" y="189" width="8.5" height="8.5" fill="#ff281f"/><rect x="1398" y="189" width="8.5" height="8.5" fill="#ff241e"/><rect x="1406" y="189" width="8.5" height="8.5" fill="#ff201c"/><rect x="1414" y="189" width="8.5" height="8.5" fill="#ff1d1a"/><rect x="1422" y="189" width="8.5" height="8.5" fill="#ff1919"/><rect x="1430" y="189" width="8.5" height="8.5" fill="#ff1617"/><rect x="1438" y="189" width="8.5" height="8.5" fill="#ff1316"/><rect x="1446" y="189" width="8.5" height="8.5" fill="#ff1015"/><rect x="1454" y="189" width="8.5" height="8.5" fill="#ff0d13"/><rect x="1462" y="189" width="8.5" height="8.5" fill="#ff0a12"/><rect x="1470" y="189" width="8.5" height="8.5" fill="#ff0711"/><rect x="1478" y="189" width="8.5" height="8.5" fill="#ff0410"/><rect x="1486" y="189" width="8.5" height="8.5" fill="#ff000f"/><rect x="1158" y="197" width="8.5" height="8.5" fill="#00ff92"/><rect x="1166" y="197" width="8.5" height="8.5" fill="#19ff93"/><rect x="1174" y="197" width="8.5" height="8.5" fill="#35ff94"/><rect x="1182" y="197" width="8.5" height="8.5" fill="#4fff96"/><rect x="1190" y="197" width="8.5" height="8.5" fill="#6aff97"/><rect x="1198" y="197" width="8.5" height="8.5" fill="#85ff99"/><rect x="1206" y="197" width="8.5" height="8.5" fill="#a1ff9b"/><rect x="1214" y="197" width="8.5" height="8.5" fill="#beff9d"/><rect x="1222" y="197" width="8.5" height="8.5" fill="#dcff9f"/><rect x="1230" y="197" width="8.5" height="8.5" fill="#fbffa1"/><rect x="1238" y="197" width="8.5" height="8.5" fill="#ffe593"/><rect x="1246" y="197" width="8.5" height="8.5" fill="#ffcd85"/><rect x="1254" y="197" width="8.5" height="8.5" fill="#ffb879"/><rect x="1262" y="197" width="8.5" height="8.5" fill="#ffa66f"/><rect x="1270" y="197" width="8.5" height="8.5" fill="#ff9667"/><rect x="1278" y="197" width="8.5" height="8.5" fill="#ff895f"/><rect x="1286" y="197" width="8.5" height="8.5" fill="#ff7d58"/><rect x="1294" y="197" width="8.5" height="8.5" fill="#ff7252"/><rect x="1302" y="197" width="8.5" height="8.5" fill="#ff684d"/><rect x="1310" y="197" width="8.5" height="8.5" fill="#ff5f48"/><rect x="1318" y="197" width="8.5" height="8.5" fill="#ff5744"/><rect x="1326" y="197" width="8.5" height="8.5" fill="#ff5040"/><rect x="1334" y="197" width="8.5" height="8.5" fill="#ff493c"/><rect x="1342" y="197" width="8.5" height="8.5" fill="#ff4339"/><rect x="1350" y="197" width="8.5" height="8.5" fill="#ff3d36"/><rect x="1358" y="197" width="8.5" height="8.5" fill="#ff3833"/><rect x="1366" y="197" width="8.5" height="8.5" fill="#ff3330"/><rect x="1374" y="197" width="8.5" height="8.5" fill="#ff2e2e"/><rect x="1382" y="197" width="8.5" height="8.5" fill="#ff2a2b"/><rect x="1390" y="197" width="8.5" height="8.5" fill="#ff2629"/><rect x="1398" y="197" width="8.5" height="8.5" fill="#ff2227"/><rect x="1406" y="197" width="8.5" height="8.5" fill="#ff1e25"/><rect x="1414" y="197" width="8.5" height="8.5" fill="#ff1a23"/><rect x="1422" y="197" width="8.5" height="8.5" fill="#ff1722"/><rect x="1430" y="197" width="8.5" height="8.5" fill="#ff1320"/><rect x="1438" y="197" width="8.5" height="8.5" fill="#ff101e"/><rect x="1446" y="197" width="8.5" height="8.5" fill="#ff0d1d"/><rect x="1454" y="197" width="8.5" height="8.5" fill="#ff0a1b"/><rect x="1462" y="197" width="8.5" height="8.5" fill="#ff071a"/><rect x="1470" y="197" width="8.5" height="8.5" fill="#ff0419"/><rect x="1478" y="197" width="8.5" height="8.5" fill="#ff0018"/><rect x="1158" y="205" width="8.5" height="8.5" fill="#00ffa8"/><rect x="1166" y="205" width="8.5" height="8.5" fill="#15ffaa"/><rect x="1174" y="205" width="8.5" height="8.5" fill="#32ffac"/><rect x="1182" y="205" width="8.5" height="8.5" fill="#4dffaf"/><rect x="1190" y="205" width="8.5" height="8.5" fill="#69ffb1"/><rect x="1198" y="205" width="8.5" height="8.5" fill="#85ffb3"/><rect x="1206" y="205" width="8.5" height="8.5" fill="#a1ffb6"/><rect x="1214" y="205" width="8.5" height="8.5" fill="#bfffb9"/><rect x="1222" y="205" width="8.5" height="8.5" fill="#deffbc"/><rect x="1230" y="205" width="8.5" height="8.5" fill="#feffbf"/><rect x="1238" y="205" width="8.5" height="8.5" fill="#ffe2ac"/><rect x="1246" y="205" width="8.5" height="8.5" fill="#ffc99c"/><rect x="1254" y="205" width="8.5" height="8.5" fill="#ffb48e"/><rect x="1262" y="205" width="8.5" height="8.5" fill="#ffa283"/><rect x="1270" y="205" width="8.5" height="8.5" fill="#ff9379"/><rect x="1278" y="205" width="8.5" height="8.5" fill="#ff8570"/><rect x="1286" y="205" width="8.5" height="8.5" fill="#ff7968"/><rect x="1294" y="205" width="8.5" height="8.5" fill="#ff6f62"/><rect x="1302" y="205" width="8.5" height="8.5" fill="#ff655b"/><rect x="1310" y="205" width="8.5" height="8.5" fill="#ff5c56"/><rect x="1318" y="205" width="8.5" height="8.5" fill="#ff5451"/><rect x="1326" y="205" width="8.5" height="8.5" fill="#ff4d4c"/><rect x="1334" y="205" width="8.5" height="8.5" fill="#ff4648"/><rect x="1342" y="205" width="8.5" height="8.5" fill="#ff4044"/><rect x="1350" y="205" width="8.5" height="8.5" fill="#ff3a41"/><rect x="1358" y="205" width="8.5" height="8.5" fill="#ff353e"/><rect x="1366" y="205" width="8.5" height="8.5" fill="#ff303b"/><rect x="1374" y="205" width="8.5" height="8.5" fill="#ff2b38"/><rect x="1382" y="205" width="8.5" height="8.5" fill="#ff2735"/><rect x="1390" y="205" width="8.5" height="8.5" fill="#ff2333"/><rect x="1398" y="205" width="8.5" height="8.5" fill="#ff1f30"/><rect x="1406" y="205" width="8.5" height="8.5" fill="#ff1b2e"/><rect x="1414" y="205" width="8.5" height="8.5" fill="#ff172c"/><rect x="1422" y="205" width="8.5" height="8.5" fill="#ff142a"/><rect x="1430" y="205" width="8.5" height="8.5" fill="#ff1128"/><rect x="1438" y="205" width="8.5" height="8.5" fill="#ff0d27"/><rect x="1446" y="205" width="8.5" height="8.5" fill="#ff0a25"/><rect x="1454" y="205" width="8.5" height="8.5" fill="#ff0723"/><rect x="1462" y="205" width="8.5" height="8.5" fill="#ff0422"/><rect x="1470" y="205" width="8.5" height="8.5" fill="#ff0020"/><rect x="1158" y="213" width="8.5" height="8.5" fill="#00ffc0"/><rect x="1166" y="213" width="8.5" height="8.5" fill="#11ffc3"/><rect x="1174" y="213" width="8.5" height="8.5" fill="#2effc5"/><rect x="1182" y="213" width="8.5" height="8.5" fill="#4bffc8"/><rect x="1190" y="213" width="8.5" height="8.5" fill="#67ffcb"/><rect x="1198" y="213" width="8.5" height="8.5" fill="#84ffcf"/><rect x="1206" y="213" width="8.5" height="8.5" fill="#a1ffd2"/><rect x="1214" y="213" width="8.5" height="8.5" fill="#c0ffd6"/><rect x="1222" y="213" width="8.5" height="8.5" fill="#e0ffda"/><rect x="1230" y="213" width="8.5" height="8.5" fill="#fffddc"/><rect x="1238" y="213" width="8.5" height="8.5" fill="#ffdfc5"/><rect x="1246" y="213" width="8.5" height="8.5" fill="#ffc6b3"/><rect x="1254" y="213" width="8.5" height="8.5" fill="#ffb1a3"/><rect x="1262" y="213" width="8.5" height="8.5" fill="#ff9f96"/><rect x="1270" y="213" width="8.5" height="8.5" fill="#ff8f8b"/><rect x="1278" y="213" width="8.5" height="8.5" fill="#ff8281"/><rect x="1286" y="213" width="8.5" height="8.5" fill="#ff7678"/><rect x="1294" y="213" width="8.5" height="8.5" fill="#ff6b71"/><rect x="1302" y="213" width="8.5" height="8.5" fill="#ff626a"/><rect x="1310" y="213" width="8.5" height="8.5" fill="#ff5964"/><rect x="1318" y="213" width="8.5" height="8.5" fill="#ff515e"/><rect x="1326" y="213" width="8.5" height="8.5" fill="#ff4a59"/><rect x="1334" y="213" width="8.5" height="8.5" fill="#ff4354"/><rect x="1342" y="213" width="8.5" height="8.5" fill="#ff3d50"/><rect x="1350" y="213" width="8.5" height="8.5" fill="#ff374c"/><rect x="1358" y="213" width="8.5" height="8.5" fill="#ff3248"/><rect x="1366" y="213" width="8.5" height="8.5" fill="#ff2d45"/><rect x="1374" y="213" width="8.5" height="8.5" fill="#ff2942"/><rect x="1382" y="213" width="8.5" height="8.5" fill="#ff243f"/><rect x="1390" y="213" width="8.5" height="8.5" fill="#ff203c"/><rect x="1398" y="213" width="8.5" height="8.5" fill="#ff1c39"/><rect x="1406" y="213" width="8.5" height="8.5" fill="#ff1837"/><rect x="1414" y="213" width="8.5" height="8.5" fill="#ff1535"/><rect x="1422" y="213" width="8.5" height="8.5" fill="#ff1133"/><rect x="1430" y="213" width="8.5" height="8.5" fill="#ff0e30"/><rect x="1438" y="213" width="8.5" height="8.5" fill="#ff0b2f"/><rect x="1446" y="213" width="8.5" height="8.5" fill="#ff072d"/><rect x="1454" y="213" width="8.5" height="8.5" fill="#ff042b"/><rect x="1462" y="213" width="8.5" height="8.5" fill="#ff0029"/><rect x="1166" y="221" width="8.5" height="8.5" fill="#0cffdc"/><rect x="1174" y="221" width="8.5" height="8.5" fill="#2bffdf"/><rect x="1182" y="221" width="8.5" height="8.5" fill="#48ffe3"/><rect x="1190" y="221" width="8.5" height="8.5" fill="#65ffe7"/><rect x="1198" y="221" width="8.5" height="8.5" fill="#83ffeb"/><rect x="1206" y="221" width="8.5" height="8.5" fill="#a2ffef"/><rect x="1214" y="221" width="8.5" height="8.5" fill="#c1fff4"/><rect x="1222" y="221" width="8.5" height="8.5" fill="#e2fff9"/><rect x="1230" y="221" width="8.5" height="8.5" fill="#fffaf9"/><rect x="1238" y="221" width="8.5" height="8.5" fill="#ffdbdf"/><rect x="1246" y="221" width="8.5" height="8.5" fill="#ffc2ca"/><rect x="1254" y="221" width="8.5" height="8.5" fill="#ffadb9"/><rect x="1262" y="221" width="8.5" height="8.5" fill="#ff9baa"/><rect x="1270" y="221" width="8.5" height="8.5" fill="#ff8c9d"/><rect x="1278" y="221" width="8.5" height="8.5" fill="#ff7e92"/><rect x="1286" y="221" width="8.5" height="8.5" fill="#ff7289"/><rect x="1294" y="221" width="8.5" height="8.5" fill="#ff6880"/><rect x="1302" y="221" width="8.5" height="8.5" fill="#ff5e78"/><rect x="1310" y="221" width="8.5" height="8.5" fill="#ff5671"/><rect x="1318" y="221" width="8.5" height="8.5" fill="#ff4e6b"/><rect x="1326" y="221" width="8.5" height="8.5" fill="#ff4765"/><rect x="1334" y="221" width="8.5" height="8.5" fill="#ff4060"/><rect x="1342" y="221" width="8.5" height="8.5" fill="#ff3a5b"/><rect x="1350" y="221" width="8.5" height="8.5" fill="#ff3457"/><rect x="1358" y="221" width="8.5" height="8.5" fill="#ff2f53"/><rect x="1366" y="221" width="8.5" height="8.5" fill="#ff2a4f"/><rect x="1374" y="221" width="8.5" height="8.5" fill="#ff264c"/><rect x="1382" y="221" width="8.5" height="8.5" fill="#ff2148"/><rect x="1390" y="221" width="8.5" height="8.5" fill="#ff1d45"/><rect x="1398" y="221" width="8.5" height="8.5" fill="#ff1942"/><rect x="1406" y="221" width="8.5" height="8.5" fill="#ff1540"/><rect x="1414" y="221" width="8.5" height="8.5" fill="#ff123d"/><rect x="1422" y="221" width="8.5" height="8.5" fill="#ff0e3b"/><rect x="1430" y="221" width="8.5" height="8.5" fill="#ff0b39"/><rect x="1438" y="221" width="8.5" height="8.5" fill="#ff0836"/><rect x="1446" y="221" width="8.5" height="8.5" fill="#ff0434"/><rect x="1454" y="221" width="8.5" height="8.5" fill="#ff0032"/><rect x="1166" y="229" width="8.5" height="8.5" fill="#06fff6"/><rect x="1174" y="229" width="8.5" height="8.5" fill="#27fffa"/><rect x="1182" y="229" width="8.5" height="8.5" fill="#46fffe"/><rect x="1190" y="229" width="8.5" height="8.5" fill="#62fbff"/><rect x="1198" y="229" width="8.5" height="8.5" fill="#7ef6ff"/><rect x="1206" y="229" width="8.5" height="8.5" fill="#99f1ff"/><rect x="1214" y="229" width="8.5" height="8.5" fill="#b4ecff"/><rect x="1222" y="229" width="8.5" height="8.5" fill="#cfe7ff"/><rect x="1230" y="229" width="8.5" height="8.5" fill="#eae2ff"/><rect x="1238" y="229" width="8.5" height="8.5" fill="#ffd7fa"/><rect x="1246" y="229" width="8.5" height="8.5" fill="#ffbee2"/><rect x="1254" y="229" width="8.5" height="8.5" fill="#ffa9cf"/><rect x="1262" y="229" width="8.5" height="8.5" fill="#ff97be"/><rect x="1270" y="229" width="8.5" height="8.5" fill="#ff88b0"/><rect x="1278" y="229" width="8.5" height="8.5" fill="#ff7ba3"/><rect x="1286" y="229" width="8.5" height="8.5" fill="#ff6f99"/><rect x="1294" y="229" width="8.5" height="8.5" fill="#ff648f"/><rect x="1302" y="229" width="8.5" height="8.5" fill="#ff5b87"/><rect x="1310" y="229" width="8.5" height="8.5" fill="#ff527f"/><rect x="1318" y="229" width="8.5" height="8.5" fill="#ff4a78"/><rect x="1326" y="229" width="8.5" height="8.5" fill="#ff4372"/><rect x="1334" y="229" width="8.5" height="8.5" fill="#ff3d6c"/><rect x="1342" y="229" width="8.5" height="8.5" fill="#ff3767"/><rect x="1350" y="229" width="8.5" height="8.5" fill="#ff3162"/><rect x="1358" y="229" width="8.5" height="8.5" fill="#ff2c5d"/><rect x="1366" y="229" width="8.5" height="8.5" fill="#ff2759"/><rect x="1374" y="229" width="8.5" height="8.5" fill="#ff2355"/><rect x="1382" y="229" width="8.5" height="8.5" fill="#ff1e52"/><rect x="1390" y="229" width="8.5" height="8.5" fill="#ff1a4f"/><rect x="1398" y="229" width="8.5" height="8.5" fill="#ff164b"/><rect x="1406" y="229" width="8.5" height="8.5" fill="#ff1248"/><rect x="1414" y="229" width="8.5" height="8.5" fill="#ff0f46"/><rect x="1422" y="229" width="8.5" height="8.5" fill="#ff0b43"/><rect x="1430" y="229" width="8.5" height="8.5" fill="#ff0841"/><rect x="1438" y="229" width="8.5" height="8.5" fill="#ff043e"/><rect x="1446" y="229" width="8.5" height="8.5" fill="#ff013c"/><rect x="1166" y="237" width="8.5" height="8.5" fill="#00eeff"/><rect x="1174" y="237" width="8.5" height="8.5" fill="#20eaff"/><rect x="1182" y="237" width="8.5" height="8.5" fill="#3ce6ff"/><rect x="1190" y="237" width="8.5" height="8.5" fill="#56e1ff"/><rect x="1198" y="237" width="8.5" height="8.5" fill="#70dcff"/><rect x="1206" y="237" width="8.5" height="8.5" fill="#89d7ff"/><rect x="1214" y="237" width="8.5" height="8.5" fill="#a2d3ff"/><rect x="1222" y="237" width="8.5" height="8.5" fill="#baceff"/><rect x="1230" y="237" width="8.5" height="8.5" fill="#d3c8ff"/><rect x="1238" y="237" width="8.5" height="8.5" fill="#ebc3ff"/><rect x="1246" y="237" width="8.5" height="8.5" fill="#ffbafa"/><rect x="1254" y="237" width="8.5" height="8.5" fill="#ffa5e4"/><rect x="1262" y="237" width="8.5" height="8.5" fill="#ff93d2"/><rect x="1270" y="237" width="8.5" height="8.5" fill="#ff84c2"/><rect x="1278" y="237" width="8.5" height="8.5" fill="#ff77b5"/><rect x="1286" y="237" width="8.5" height="8.5" fill="#ff6ba9"/><rect x="1294" y="237" width="8.5" height="8.5" fill="#ff619e"/><rect x="1302" y="237" width="8.5" height="8.5" fill="#ff5795"/><rect x="1310" y="237" width="8.5" height="8.5" fill="#ff4f8d"/><rect x="1318" y="237" width="8.5" height="8.5" fill="#ff4785"/><rect x="1326" y="237" width="8.5" height="8.5" fill="#ff407e"/><rect x="1334" y="237" width="8.5" height="8.5" fill="#ff3a78"/><rect x="1342" y="237" width="8.5" height="8.5" fill="#ff3472"/><rect x="1350" y="237" width="8.5" height="8.5" fill="#ff2e6d"/><rect x="1358" y="237" width="8.5" height="8.5" fill="#ff2968"/><rect x="1366" y="237" width="8.5" height="8.5" fill="#ff2463"/><rect x="1374" y="237" width="8.5" height="8.5" fill="#ff1f5f"/><rect x="1382" y="237" width="8.5" height="8.5" fill="#ff1b5b"/><rect x="1390" y="237" width="8.5" height="8.5" fill="#ff1758"/><rect x="1398" y="237" width="8.5" height="8.5" fill="#ff1354"/><rect x="1406" y="237" width="8.5" height="8.5" fill="#ff0f51"/><rect x="1414" y="237" width="8.5" height="8.5" fill="#ff0c4e"/><rect x="1422" y="237" width="8.5" height="8.5" fill="#ff084b"/><rect x="1430" y="237" width="8.5" height="8.5" fill="#ff0548"/><rect x="1438" y="237" width="8.5" height="8.5" fill="#ff0146"/><rect x="1166" y="245" width="8.5" height="8.5" fill="#00d8ff"/><rect x="1174" y="245" width="8.5" height="8.5" fill="#1ad4ff"/><rect x="1182" y="245" width="8.5" height="8.5" fill="#34cfff"/><rect x="1190" y="245" width="8.5" height="8.5" fill="#4ccbff"/><rect x="1198" y="245" width="8.5" height="8.5" fill="#64c6ff"/><rect x="1206" y="245" width="8.5" height="8.5" fill="#7bc2ff"/><rect x="1214" y="245" width="8.5" height="8.5" fill="#92bdff"/><rect x="1222" y="245" width="8.5" height="8.5" fill="#a9b8ff"/><rect x="1230" y="245" width="8.5" height="8.5" fill="#bfb3ff"/><rect x="1238" y="245" width="8.5" height="8.5" fill="#d6aeff"/><rect x="1246" y="245" width="8.5" height="8.5" fill="#eda9ff"/><rect x="1254" y="245" width="8.5" height="8.5" fill="#ffa1fb"/><rect x="1262" y="245" width="8.5" height="8.5" fill="#ff8fe6"/><rect x="1270" y="245" width="8.5" height="8.5" fill="#ff80d5"/><rect x="1278" y="245" width="8.5" height="8.5" fill="#ff73c6"/><rect x="1286" y="245" width="8.5" height="8.5" fill="#ff67b9"/><rect x="1294" y="245" width="8.5" height="8.5" fill="#ff5dae"/><rect x="1302" y="245" width="8.5" height="8.5" fill="#ff53a3"/><rect x="1310" y="245" width="8.5" height="8.5" fill="#ff4b9a"/><rect x="1318" y="245" width="8.5" height="8.5" fill="#ff4392"/><rect x="1326" y="245" width="8.5" height="8.5" fill="#ff3d8b"/><rect x="1334" y="245" width="8.5" height="8.5" fill="#ff3684"/><rect x="1342" y="245" width="8.5" height="8.5" fill="#ff307d"/><rect x="1350" y="245" width="8.5" height="8.5" fill="#ff2b78"/><rect x="1358" y="245" width="8.5" height="8.5" fill="#ff2672"/><rect x="1366" y="245" width="8.5" height="8.5" fill="#ff216e"/><rect x="1374" y="245" width="8.5" height="8.5" fill="#ff1c69"/><rect x="1382" y="245" width="8.5" height="8.5" fill="#ff1865"/><rect x="1390" y="245" width="8.5" height="8.5" fill="#ff1461"/><rect x="1398" y="245" width="8.5" height="8.5" fill="#ff105d"/><rect x="1406" y="245" width="8.5" height="8.5" fill="#ff0c5a"/><rect x="1414" y="245" width="8.5" height="8.5" fill="#ff0956"/><rect x="1422" y="245" width="8.5" height="8.5" fill="#ff0553"/><rect x="1430" y="245" width="8.5" height="8.5" fill="#ff0150"/><rect x="1166" y="253" width="8.5" height="8.5" fill="#00c5ff"/><rect x="1174" y="253" width="8.5" height="8.5" fill="#14c1ff"/><rect x="1182" y="253" width="8.5" height="8.5" fill="#2cbcff"/><rect x="1190" y="253" width="8.5" height="8.5" fill="#44b8ff"/><rect x="1198" y="253" width="8.5" height="8.5" fill="#5ab4ff"/><rect x="1206" y="253" width="8.5" height="8.5" fill="#6fafff"/><rect x="1214" y="253" width="8.5" height="8.5" fill="#85abff"/><rect x="1222" y="253" width="8.5" height="8.5" fill="#9aa6ff"/><rect x="1230" y="253" width="8.5" height="8.5" fill="#afa1ff"/><rect x="1238" y="253" width="8.5" height="8.5" fill="#c49cff"/><rect x="1246" y="253" width="8.5" height="8.5" fill="#d998ff"/><rect x="1254" y="253" width="8.5" height="8.5" fill="#ee93ff"/><rect x="1262" y="253" width="8.5" height="8.5" fill="#ff8bfb"/><rect x="1270" y="253" width="8.5" height="8.5" fill="#ff7ce8"/><rect x="1278" y="253" width="8.5" height="8.5" fill="#ff6fd8"/><rect x="1286" y="253" width="8.5" height="8.5" fill="#ff63ca"/><rect x="1294" y="253" width="8.5" height="8.5" fill="#ff59bd"/><rect x="1302" y="253" width="8.5" height="8.5" fill="#ff50b2"/><rect x="1310" y="253" width="8.5" height="8.5" fill="#ff47a8"/><rect x="1318" y="253" width="8.5" height="8.5" fill="#ff409f"/><rect x="1326" y="253" width="8.5" height="8.5" fill="#ff3997"/><rect x="1334" y="253" width="8.5" height="8.5" fill="#ff3390"/><rect x="1342" y="253" width="8.5" height="8.5" fill="#ff2d89"/><rect x="1350" y="253" width="8.5" height="8.5" fill="#ff2783"/><rect x="1358" y="253" width="8.5" height="8.5" fill="#ff227d"/><rect x="1366" y="253" width="8.5" height="8.5" fill="#ff1e78"/><rect x="1374" y="253" width="8.5" height="8.5" fill="#ff1973"/><rect x="1382" y="253" width="8.5" height="8.5" fill="#ff156e"/><rect x="1390" y="253" width="8.5" height="8.5" fill="#ff116a"/><rect x="1398" y="253" width="8.5" height="8.5" fill="#ff0d66"/><rect x="1406" y="253" width="8.5" height="8.5" fill="#ff0962"/><rect x="1414" y="253" width="8.5" height="8.5" fill="#ff055f"/><rect x="1422" y="253" width="8.5" height="8.5" fill="#ff015b"/><rect x="1166" y="261" width="8.5" height="8.5" fill="#00b4ff"/><rect x="1174" y="261" width="8.5" height="8.5" fill="#0eb0ff"/><rect x="1182" y="261" width="8.5" height="8.5" fill="#26acff"/><rect x="1190" y="261" width="8.5" height="8.5" fill="#3ca8ff"/><rect x="1198" y="261" width="8.5" height="8.5" fill="#51a3ff"/><rect x="1206" y="261" width="8.5" height="8.5" fill="#659fff"/><rect x="1214" y="261" width="8.5" height="8.5" fill="#799bff"/><rect x="1222" y="261" width="8.5" height="8.5" fill="#8d96ff"/><rect x="1230" y="261" width="8.5" height="8.5" fill="#a192ff"/><rect x="1238" y="261" width="8.5" height="8.5" fill="#b48dff"/><rect x="1246" y="261" width="8.5" height="8.5" fill="#c888ff"/><rect x="1254" y="261" width="8.5" height="8.5" fill="#db83ff"/><rect x="1262" y="261" width="8.5" height="8.5" fill="#ef7fff"/><rect x="1270" y="261" width="8.5" height="8.5" fill="#ff78fc"/><rect x="1278" y="261" width="8.5" height="8.5" fill="#ff6bea"/><rect x="1286" y="261" width="8.5" height="8.5" fill="#ff5fda"/><rect x="1294" y="261" width="8.5" height="8.5" fill="#ff55cd"/><rect x="1302" y="261" width="8.5" height="8.5" fill="#ff4cc1"/><rect x="1310" y="261" width="8.5" height="8.5" fill="#ff44b6"/><rect x="1318" y="261" width="8.5" height="8.5" fill="#ff3cac"/><rect x="1326" y="261" width="8.5" height="8.5" fill="#ff35a3"/><rect x="1334" y="261" width="8.5" height="8.5" fill="#ff2f9b"/><rect x="1342" y="261" width="8.5" height="8.5" fill="#ff2994"/><rect x="1350" y="261" width="8.5" height="8.5" fill="#ff248e"/><rect x="1358" y="261" width="8.5" height="8.5" fill="#ff1f87"/><rect x="1366" y="261" width="8.5" height="8.5" fill="#ff1a82"/><rect x="1374" y="261" width="8.5" height="8.5" fill="#ff167c"/><rect x="1382" y="261" width="8.5" height="8.5" fill="#ff1177"/><rect x="1390" y="261" width="8.5" height="8.5" fill="#ff0d73"/><rect x="1398" y="261" width="8.5" height="8.5" fill="#ff096f"/><rect x="1406" y="261" width="8.5" height="8.5" fill="#ff056b"/><rect x="1414" y="261" width="8.5" height="8.5" fill="#ff0167"/><rect x="1174" y="269" width="8.5" height="8.5" fill="#0aa1ff"/><rect x="1182" y="269" width="8.5" height="8.5" fill="#219dff"/><rect x="1190" y="269" width="8.5" height="8.5" fill="#3599ff"/><rect x="1198" y="269" width="8.5" height="8.5" fill="#4995ff"/><rect x="1206" y="269" width="8.5" height="8.5" fill="#5c91ff"/><rect x="1214" y="269" width="8.5" height="8.5" fill="#6f8dff"/><rect x="1222" y="269" width="8.5" height="8.5" fill="#8288ff"/><rect x="1230" y="269" width="8.5" height="8.5" fill="#9484ff"/><rect x="1238" y="269" width="8.5" height="8.5" fill="#a77fff"/><rect x="1246" y="269" width="8.5" height="8.5" fill="#b97bff"/><rect x="1254" y="269" width="8.5" height="8.5" fill="#cb76ff"/><rect x="1262" y="269" width="8.5" height="8.5" fill="#de71ff"/><rect x="1270" y="269" width="8.5" height="8.5" fill="#f06dff"/><rect x="1278" y="269" width="8.5" height="8.5" fill="#ff66fc"/><rect x="1286" y="269" width="8.5" height="8.5" fill="#ff5beb"/><rect x="1294" y="269" width="8.5" height="8.5" fill="#ff51dc"/><rect x="1302" y="269" width="8.5" height="8.5" fill="#ff48cf"/><rect x="1310" y="269" width="8.5" height="8.5" fill="#ff40c4"/><rect x="1318" y="269" width="8.5" height="8.5" fill="#ff38b9"/><rect x="1326" y="269" width="8.5" height="8.5" fill="#ff32b0"/><rect x="1334" y="269" width="8.5" height="8.5" fill="#ff2ba7"/><rect x="1342" y="269" width="8.5" height="8.5" fill="#ff26a0"/><rect x="1350" y="269" width="8.5" height="8.5" fill="#ff2098"/><rect x="1358" y="269" width="8.5" height="8.5" fill="#ff1b92"/><rect x="1366" y="269" width="8.5" height="8.5" fill="#ff178c"/><rect x="1374" y="269" width="8.5" height="8.5" fill="#ff1286"/><rect x="1382" y="269" width="8.5" height="8.5" fill="#ff0e81"/><rect x="1390" y="269" width="8.5" height="8.5" fill="#ff0a7c"/><rect x="1398" y="269" width="8.5" height="8.5" fill="#ff0677"/><rect x="1406" y="269" width="8.5" height="8.5" fill="#ff0173"/><rect x="1174" y="277" width="8.5" height="8.5" fill="#0594ff"/><rect x="1182" y="277" width="8.5" height="8.5" fill="#1c90ff"/><rect x="1190" y="277" width="8.5" height="8.5" fill="#2f8cff"/><rect x="1198" y="277" width="8.5" height="8.5" fill="#4288ff"/><rect x="1206" y="277" width="8.5" height="8.5" fill="#5484ff"/><rect x="1214" y="277" width="8.5" height="8.5" fill="#6680ff"/><rect x="1222" y="277" width="8.5" height="8.5" fill="#787cff"/><rect x="1230" y="277" width="8.5" height="8.5" fill="#8978ff"/><rect x="1238" y="277" width="8.5" height="8.5" fill="#9b73ff"/><rect x="1246" y="277" width="8.5" height="8.5" fill="#ac6fff"/><rect x="1254" y="277" width="8.5" height="8.5" fill="#bd6bff"/><rect x="1262" y="277" width="8.5" height="8.5" fill="#ce66ff"/><rect x="1270" y="277" width="8.5" height="8.5" fill="#df61ff"/><rect x="1278" y="277" width="8.5" height="8.5" fill="#f15dff"/><rect x="1286" y="277" width="8.5" height="8.5" fill="#ff57fc"/><rect x="1294" y="277" width="8.5" height="8.5" fill="#ff4dec"/><rect x="1302" y="277" width="8.5" height="8.5" fill="#ff44de"/><rect x="1310" y="277" width="8.5" height="8.5" fill="#ff3cd2"/><rect x="1318" y="277" width="8.5" height="8.5" fill="#ff34c7"/><rect x="1326" y="277" width="8.5" height="8.5" fill="#ff2ebd"/><rect x="1334" y="277" width="8.5" height="8.5" fill="#ff28b3"/><rect x="1342" y="277" width="8.5" height="8.5" fill="#ff22ab"/><rect x="1350" y="277" width="8.5" height="8.5" fill="#ff1da3"/><rect x="1358" y="277" width="8.5" height="8.5" fill="#ff189c"/><rect x="1366" y="277" width="8.5" height="8.5" fill="#ff1396"/><rect x="1374" y="277" width="8.5" height="8.5" fill="#ff0e90"/><rect x="1382" y="277" width="8.5" height="8.5" fill="#ff0a8a"/><rect x="1390" y="277" width="8.5" height="8.5" fill="#ff0685"/><rect x="1398" y="277" width="8.5" height="8.5" fill="#ff0180"/><rect x="1174" y="285" width="8.5" height="8.5" fill="#0088ff"/><rect x="1182" y="285" width="8.5" height="8.5" fill="#1785ff"/><rect x="1190" y="285" width="8.5" height="8.5" fill="#2a81ff"/><rect x="1198" y="285" width="8.5" height="8.5" fill="#3c7dff"/><rect x="1206" y="285" width="8.5" height="8.5" fill="#4d79ff"/><rect x="1214" y="285" width="8.5" height="8.5" fill="#5e75ff"/><rect x="1222" y="285" width="8.5" height="8.5" fill="#6f71ff"/><rect x="1230" y="285" width="8.5" height="8.5" fill="#806dff"/><rect x="1238" y="285" width="8.5" height="8.5" fill="#9069ff"/><rect x="1246" y="285" width="8.5" height="8.5" fill="#a064ff"/><rect x="1254" y="285" width="8.5" height="8.5" fill="#b160ff"/><rect x="1262" y="285" width="8.5" height="8.5" fill="#c15cff"/><rect x="1270" y="285" width="8.5" height="8.5" fill="#d157ff"/><rect x="1278" y="285" width="8.5" height="8.5" fill="#e153ff"/><rect x="1286" y="285" width="8.5" height="8.5" fill="#f14eff"/><rect x="1294" y="285" width="8.5" height="8.5" fill="#ff48fc"/><rect x="1302" y="285" width="8.5" height="8.5" fill="#ff40ed"/><rect x="1310" y="285" width="8.5" height="8.5" fill="#ff38e0"/><rect x="1318" y="285" width="8.5" height="8.5" fill="#ff30d4"/><rect x="1326" y="285" width="8.5" height="8.5" fill="#ff2ac9"/><rect x="1334" y="285" width="8.5" height="8.5" fill="#ff24c0"/><rect x="1342" y="285" width="8.5" height="8.5" fill="#ff1eb7"/><rect x="1350" y="285" width="8.5" height="8.5" fill="#ff19ae"/><rect x="1358" y="285" width="8.5" height="8.5" fill="#ff14a7"/><rect x="1366" y="285" width="8.5" height="8.5" fill="#ff0fa0"/><rect x="1374" y="285" width="8.5" height="8.5" fill="#ff0b9a"/><rect x="1382" y="285" width="8.5" height="8.5" fill="#ff0694"/><rect x="1390" y="285" width="8.5" height="8.5" fill="#ff018e"/><rect x="1174" y="293" width="8.5" height="8.5" fill="#007eff"/><rect x="1182" y="293" width="8.5" height="8.5" fill="#137aff"/><rect x="1190" y="293" width="8.5" height="8.5" fill="#2576ff"/><rect x="1198" y="293" width="8.5" height="8.5" fill="#3673ff"/><rect x="1206" y="293" width="8.5" height="8.5" fill="#476fff"/><rect x="1214" y="293" width="8.5" height="8.5" fill="#576bff"/><rect x="1222" y="293" width="8.5" height="8.5" fill="#6767ff"/><rect x="1230" y="293" width="8.5" height="8.5" fill="#7763ff"/><rect x="1238" y="293" width="8.5" height="8.5" fill="#865fff"/><rect x="1246" y="293" width="8.5" height="8.5" fill="#965bff"/><rect x="1254" y="293" width="8.5" height="8.5" fill="#a557ff"/><rect x="1262" y="293" width="8.5" height="8.5" fill="#b552ff"/><rect x="1270" y="293" width="8.5" height="8.5" fill="#c44eff"/><rect x="1278" y="293" width="8.5" height="8.5" fill="#d34aff"/><rect x="1286" y="293" width="8.5" height="8.5" fill="#e345ff"/><rect x="1294" y="293" width="8.5" height="8.5" fill="#f240ff"/><rect x="1302" y="293" width="8.5" height="8.5" fill="#ff3bfd"/><rect x="1310" y="293" width="8.5" height="8.5" fill="#ff33ee"/><rect x="1318" y="293" width="8.5" height="8.5" fill="#ff2ce2"/><rect x="1326" y="293" width="8.5" height="8.5" fill="#ff26d6"/><rect x="1334" y="293" width="8.5" height="8.5" fill="#ff20cc"/><rect x="1342" y="293" width="8.5" height="8.5" fill="#ff1ac2"/><rect x="1350" y="293" width="8.5" height="8.5" fill="#ff15ba"/><rect x="1358" y="293" width="8.5" height="8.5" fill="#ff10b2"/><rect x="1366" y="293" width="8.5" height="8.5" fill="#ff0baa"/><rect x="1374" y="293" width="8.5" height="8.5" fill="#ff06a3"/><rect x="1382" y="293" width="8.5" height="8.5" fill="#ff029d"/><rect x="1174" y="301" width="8.5" height="8.5" fill="#0074ff"/><rect x="1182" y="301" width="8.5" height="8.5" fill="#0f71ff"/><rect x="1190" y="301" width="8.5" height="8.5" fill="#216dff"/><rect x="1198" y="301" width="8.5" height="8.5" fill="#3169ff"/><rect x="1206" y="301" width="8.5" height="8.5" fill="#4166ff"/><rect x="1214" y="301" width="8.5" height="8.5" fill="#5162ff"/><rect x="1222" y="301" width="8.5" height="8.5" fill="#605eff"/><rect x="1230" y="301" width="8.5" height="8.5" fill="#6f5aff"/><rect x="1238" y="301" width="8.5" height="8.5" fill="#7e56ff"/><rect x="1246" y="301" width="8.5" height="8.5" fill="#8d52ff"/><rect x="1254" y="301" width="8.5" height="8.5" fill="#9b4eff"/><rect x="1262" y="301" width="8.5" height="8.5" fill="#aa4aff"/><rect x="1270" y="301" width="8.5" height="8.5" fill="#b846ff"/><rect x="1278" y="301" width="8.5" height="8.5" fill="#c742ff"/><rect x="1286" y="301" width="8.5" height="8.5" fill="#d53dff"/><rect x="1294" y="301" width="8.5" height="8.5" fill="#e439ff"/><rect x="1302" y="301" width="8.5" height="8.5" fill="#f334ff"/><rect x="1310" y="301" width="8.5" height="8.5" fill="#ff2ffd"/><rect x="1318" y="301" width="8.5" height="8.5" fill="#ff28ef"/><rect x="1326" y="301" width="8.5" height="8.5" fill="#ff21e3"/><rect x="1334" y="301" width="8.5" height="8.5" fill="#ff1bd8"/><rect x="1342" y="301" width="8.5" height="8.5" fill="#ff16ce"/><rect x="1350" y="301" width="8.5" height="8.5" fill="#ff11c5"/><rect x="1358" y="301" width="8.5" height="8.5" fill="#ff0cbc"/><rect x="1366" y="301" width="8.5" height="8.5" fill="#ff07b4"/><rect x="1374" y="301" width="8.5" height="8.5" fill="#ff02ad"/><rect x="1174" y="309" width="8.5" height="8.5" fill="#006bff"/><rect x="1182" y="309" width="8.5" height="8.5" fill="#0b68ff"/><rect x="1190" y="309" width="8.5" height="8.5" fill="#1d64ff"/><rect x="1198" y="309" width="8.5" height="8.5" fill="#2d61ff"/><rect x="1206" y="309" width="8.5" height="8.5" fill="#3c5dff"/><rect x="1214" y="309" width="8.5" height="8.5" fill="#4b5aff"/><rect x="1222" y="309" width="8.5" height="8.5" fill="#5956ff"/><rect x="1230" y="309" width="8.5" height="8.5" fill="#6852ff"/><rect x="1238" y="309" width="8.5" height="8.5" fill="#764eff"/><rect x="1246" y="309" width="8.5" height="8.5" fill="#844aff"/><rect x="1254" y="309" width="8.5" height="8.5" fill="#9247ff"/><rect x="1262" y="309" width="8.5" height="8.5" fill="#a042ff"/><rect x="1270" y="309" width="8.5" height="8.5" fill="#ae3eff"/><rect x="1278" y="309" width="8.5" height="8.5" fill="#bc3aff"/><rect x="1286" y="309" width="8.5" height="8.5" fill="#ca36ff"/><rect x="1294" y="309" width="8.5" height="8.5" fill="#d732ff"/><rect x="1302" y="309" width="8.5" height="8.5" fill="#e52dff"/><rect x="1310" y="309" width="8.5" height="8.5" fill="#f328ff"/><rect x="1318" y="309" width="8.5" height="8.5" fill="#ff23fd"/><rect x="1326" y="309" width="8.5" height="8.5" fill="#ff1df0"/><rect x="1334" y="309" width="8.5" height="8.5" fill="#ff17e4"/><rect x="1342" y="309" width="8.5" height="8.5" fill="#ff12da"/><rect x="1350" y="309" width="8.5" height="8.5" fill="#ff0cd0"/><rect x="1358" y="309" width="8.5" height="8.5" fill="#ff07c7"/><rect x="1366" y="309" width="8.5" height="8.5" fill="#ff02bf"/><rect x="1182" y="317" width="8.5" height="8.5" fill="#0860ff"/><rect x="1190" y="317" width="8.5" height="8.5" fill="#195dff"/><rect x="1198" y="317" width="8.5" height="8.5" fill="#2859ff"/><rect x="1206" y="317" width="8.5" height="8.5" fill="#3756ff"/><rect x="1214" y="317" width="8.5" height="8.5" fill="#4552ff"/><rect x="1222" y="317" width="8.5" height="8.5" fill="#534eff"/><rect x="1230" y="317" width="8.5" height="8.5" fill="#614bff"/><rect x="1238" y="317" width="8.5" height="8.5" fill="#6f47ff"/><rect x="1246" y="317" width="8.5" height="8.5" fill="#7c43ff"/><rect x="1254" y="317" width="8.5" height="8.5" fill="#8a3fff"/><rect x="1262" y="317" width="8.5" height="8.5" fill="#973cff"/><rect x="1270" y="317" width="8.5" height="8.5" fill="#a437ff"/><rect x="1278" y="317" width="8.5" height="8.5" fill="#b233ff"/><rect x="1286" y="317" width="8.5" height="8.5" fill="#bf2fff"/><rect x="1294" y="317" width="8.5" height="8.5" fill="#cc2bff"/><rect x="1302" y="317" width="8.5" height="8.5" fill="#d927ff"/><rect x="1310" y="317" width="8.5" height="8.5" fill="#e622ff"/><rect x="1318" y="317" width="8.5" height="8.5" fill="#f41dff"/><rect x="1326" y="317" width="8.5" height="8.5" fill="#ff18fd"/><rect x="1334" y="317" width="8.5" height="8.5" fill="#ff13f1"/><rect x="1342" y="317" width="8.5" height="8.5" fill="#ff0de6"/><rect x="1350" y="317" width="8.5" height="8.5" fill="#ff08db"/><rect x="1358" y="317" width="8.5" height="8.5" fill="#ff02d2"/><rect x="1182" y="325" width="8.5" height="8.5" fill="#0459ff"/><rect x="1190" y="325" width="8.5" height="8.5" fill="#1555ff"/><rect x="1198" y="325" width="8.5" height="8.5" fill="#2452ff"/><rect x="1206" y="325" width="8.5" height="8.5" fill="#334fff"/><rect x="1214" y="325" width="8.5" height="8.5" fill="#414bff"/><rect x="1222" y="325" width="8.5" height="8.5" fill="#4e48ff"/><rect x="1230" y="325" width="8.5" height="8.5" fill="#5b44ff"/><rect x="1238" y="325" width="8.5" height="8.5" fill="#6840ff"/><rect x="1246" y="325" width="8.5" height="8.5" fill="#753dff"/><rect x="1254" y="325" width="8.5" height="8.5" fill="#8239ff"/><rect x="1262" y="325" width="8.5" height="8.5" fill="#8f35ff"/><rect x="1270" y="325" width="8.5" height="8.5" fill="#9c31ff"/><rect x="1278" y="325" width="8.5" height="8.5" fill="#a82dff"/><rect x="1286" y="325" width="8.5" height="8.5" fill="#b529ff"/><rect x="1294" y="325" width="8.5" height="8.5" fill="#c225ff"/><rect x="1302" y="325" width="8.5" height="8.5" fill="#ce21ff"/><rect x="1310" y="325" width="8.5" height="8.5" fill="#db1cff"/><rect x="1318" y="325" width="8.5" height="8.5" fill="#e718ff"/><rect x="1326" y="325" width="8.5" height="8.5" fill="#f413ff"/><rect x="1334" y="325" width="8.5" height="8.5" fill="#ff0efd"/><rect x="1342" y="325" width="8.5" height="8.5" fill="#ff08f2"/><rect x="1350" y="325" width="8.5" height="8.5" fill="#ff02e7"/><rect x="1182" y="333" width="8.5" height="8.5" fill="#0152ff"/><rect x="1190" y="333" width="8.5" height="8.5" fill="#124fff"/><rect x="1198" y="333" width="8.5" height="8.5" fill="#214bff"/><rect x="1206" y="333" width="8.5" height="8.5" fill="#2f48ff"/><rect x="1214" y="333" width="8.5" height="8.5" fill="#3c45ff"/><rect x="1222" y="333" width="8.5" height="8.5" fill="#4941ff"/><rect x="1230" y="333" width="8.5" height="8.5" fill="#563eff"/><rect x="1238" y="333" width="8.5" height="8.5" fill="#623aff"/><rect x="1246" y="333" width="8.5" height="8.5" fill="#6f37ff"/><rect x="1254" y="333" width="8.5" height="8.5" fill="#7b33ff"/><rect x="1262" y="333" width="8.5" height="8.5" fill="#872fff"/><rect x="1270" y="333" width="8.5" height="8.5" fill="#942bff"/><rect x="1278" y="333" width="8.5" height="8.5" fill="#a027ff"/><rect x="1286" y="333" width="8.5" height="8.5" fill="#ac23ff"/><rect x="1294" y="333" width="8.5" height="8.5" fill="#b81fff"/><rect x="1302" y="333" width="8.5" height="8.5" fill="#c41bff"/><rect x="1310" y="333" width="8.5" height="8.5" fill="#d017ff"/><rect x="1318" y="333" width="8.5" height="8.5" fill="#dc12ff"/><rect x="1326" y="333" width="8.5" height="8.5" fill="#e80dff"/><rect x="1334" y="333" width="8.5" height="8.5" fill="#f408ff"/><rect x="1342" y="333" width="8.5" height="8.5" fill="#ff02fe"/><rect x="1182" y="341" width="8.5" height="8.5" fill="#004cff"/><rect x="1190" y="341" width="8.5" height="8.5" fill="#0f48ff"/><rect x="1198" y="341" width="8.5" height="8.5" fill="#1d45ff"/><rect x="1206" y="341" width="8.5" height="8.5" fill="#2b42ff"/><rect x="1214" y="341" width="8.5" height="8.5" fill="#383fff"/><rect x="1222" y="341" width="8.5" height="8.5" fill="#443bff"/><rect x="1230" y="341" width="8.5" height="8.5" fill="#5138ff"/><rect x="1238" y="341" width="8.5" height="8.5" fill="#5d34ff"/><rect x="1246" y="341" width="8.5" height="8.5" fill="#6931ff"/><rect x="1254" y="341" width="8.5" height="8.5" fill="#752dff"/><rect x="1262" y="341" width="8.5" height="8.5" fill="#802aff"/><rect x="1270" y="341" width="8.5" height="8.5" fill="#8c26ff"/><rect x="1278" y="341" width="8.5" height="8.5" fill="#9822ff"/><rect x="1286" y="341" width="8.5" height="8.5" fill="#a41eff"/><rect x="1294" y="341" width="8.5" height="8.5" fill="#af1aff"/><rect x="1302" y="341" width="8.5" height="8.5" fill="#bb16ff"/><rect x="1310" y="341" width="8.5" height="8.5" fill="#c611ff"/><rect x="1318" y="341" width="8.5" height="8.5" fill="#d20dff"/><rect x="1326" y="341" width="8.5" height="8.5" fill="#dd08ff"/><rect x="1334" y="341" width="8.5" height="8.5" fill="#e902ff"/><rect x="1182" y="349" width="8.5" height="8.5" fill="#0046ff"/><rect x="1190" y="349" width="8.5" height="8.5" fill="#0c43ff"/><rect x="1198" y="349" width="8.5" height="8.5" fill="#1a40ff"/><rect x="1206" y="349" width="8.5" height="8.5" fill="#273cff"/><rect x="1214" y="349" width="8.5" height="8.5" fill="#3439ff"/><rect x="1222" y="349" width="8.5" height="8.5" fill="#4036ff"/><rect x="1230" y="349" width="8.5" height="8.5" fill="#4c32ff"/><rect x="1238" y="349" width="8.5" height="8.5" fill="#582fff"/><rect x="1246" y="349" width="8.5" height="8.5" fill="#632cff"/><rect x="1254" y="349" width="8.5" height="8.5" fill="#6f28ff"/><rect x="1262" y="349" width="8.5" height="8.5" fill="#7a24ff"/><rect x="1270" y="349" width="8.5" height="8.5" fill="#8521ff"/><rect x="1278" y="349" width="8.5" height="8.5" fill="#911dff"/><rect x="1286" y="349" width="8.5" height="8.5" fill="#9c19ff"/><rect x="1294" y="349" width="8.5" height="8.5" fill="#a715ff"/><rect x="1302" y="349" width="8.5" height="8.5" fill="#b211ff"/><rect x="1310" y="349" width="8.5" height="8.5" fill="#bd0cff"/><rect x="1318" y="349" width="8.5" height="8.5" fill="#c808ff"/><rect x="1326" y="349" width="8.5" height="8.5" fill="#d402ff"/><rect x="1182" y="357" width="8.5" height="8.5" fill="#0040ff"/><rect x="1190" y="357" width="8.5" height="8.5" fill="#093dff"/><rect x="1198" y="357" width="8.5" height="8.5" fill="#173aff"/><rect x="1206" y="357" width="8.5" height="8.5" fill="#2437ff"/><rect x="1214" y="357" width="8.5" height="8.5" fill="#3034ff"/><rect x="1222" y="357" width="8.5" height="8.5" fill="#3c31ff"/><rect x="1230" y="357" width="8.5" height="8.5" fill="#482dff"/><rect x="1238" y="357" width="8.5" height="8.5" fill="#532aff"/><rect x="1246" y="357" width="8.5" height="8.5" fill="#5e27ff"/><rect x="1254" y="357" width="8.5" height="8.5" fill="#6923ff"/><rect x="1262" y="357" width="8.5" height="8.5" fill="#7420ff"/><rect x="1270" y="357" width="8.5" height="8.5" fill="#7f1cff"/><rect x="1278" y="357" width="8.5" height="8.5" fill="#8a18ff"/><rect x="1286" y="357" width="8.5" height="8.5" fill="#9514ff"/><rect x="1294" y="357" width="8.5" height="8.5" fill="#a010ff"/><rect x="1302" y="357" width="8.5" height="8.5" fill="#aa0cff"/><rect x="1310" y="357" width="8.5" height="8.5" fill="#b508ff"/><rect x="1318" y="357" width="8.5" height="8.5" fill="#c002ff"/><rect x="1190" y="365" width="8.5" height="8.5" fill="#0738ff"/><rect x="1198" y="365" width="8.5" height="8.5" fill="#1435ff"/><rect x="1206" y="365" width="8.5" height="8.5" fill="#2132ff"/><rect x="1214" y="365" width="8.5" height="8.5" fill="#2d2fff"/><rect x="1222" y="365" width="8.5" height="8.5" fill="#382cff"/><rect x="1230" y="365" width="8.5" height="8.5" fill="#4329ff"/><rect x="1238" y="365" width="8.5" height="8.5" fill="#4e25ff"/><rect x="1246" y="365" width="8.5" height="8.5" fill="#5922ff"/><rect x="1254" y="365" width="8.5" height="8.5" fill="#641eff"/><rect x="1262" y="365" width="8.5" height="8.5" fill="#6f1bff"/><rect x="1270" y="365" width="8.5" height="8.5" fill="#7917ff"/><rect x="1278" y="365" width="8.5" height="8.5" fill="#8414ff"/><rect x="1286" y="365" width="8.5" height="8.5" fill="#8e10ff"/><rect x="1294" y="365" width="8.5" height="8.5" fill="#990cff"/><rect x="1302" y="365" width="8.5" height="8.5" fill="#a307ff"/><rect x="1310" y="365" width="8.5" height="8.5" fill="#ad02ff"/><rect x="1190" y="373" width="8.5" height="8.5" fill="#0433ff"/><rect x="1198" y="373" width="8.5" height="8.5" fill="#1230ff"/><rect x="1206" y="373" width="8.5" height="8.5" fill="#1e2dff"/><rect x="1214" y="373" width="8.5" height="8.5" fill="#2a2aff"/><rect x="1222" y="373" width="8.5" height="8.5" fill="#3527ff"/><rect x="1230" y="373" width="8.5" height="8.5" fill="#4024ff"/><rect x="1238" y="373" width="8.5" height="8.5" fill="#4a21ff"/><rect x="1246" y="373" width="8.5" height="8.5" fill="#551dff"/><rect x="1254" y="373" width="8.5" height="8.5" fill="#5f1aff"/><rect x="1262" y="373" width="8.5" height="8.5" fill="#6a17ff"/><rect x="1270" y="373" width="8.5" height="8.5" fill="#7413ff"/><rect x="1278" y="373" width="8.5" height="8.5" fill="#7e0fff"/><rect x="1286" y="373" width="8.5" height="8.5" fill="#880bff"/><rect x="1294" y="373" width="8.5" height="8.5" fill="#9207ff"/><rect x="1302" y="373" width="8.5" height="8.5" fill="#9c02ff"/><rect x="1190" y="381" width="8.5" height="8.5" fill="#012fff"/><rect x="1198" y="381" width="8.5" height="8.5" fill="#0f2cff"/><rect x="1206" y="381" width="8.5" height="8.5" fill="#1b29ff"/><rect x="1214" y="381" width="8.5" height="8.5" fill="#2626ff"/><rect x="1222" y="381" width="8.5" height="8.5" fill="#3123ff"/><rect x="1230" y="381" width="8.5" height="8.5" fill="#3c20ff"/><rect x="1238" y="381" width="8.5" height="8.5" fill="#461dff"/><rect x="1246" y="381" width="8.5" height="8.5" fill="#5119ff"/><rect x="1254" y="381" width="8.5" height="8.5" fill="#5b16ff"/><rect x="1262" y="381" width="8.5" height="8.5" fill="#6512ff"/><rect x="1270" y="381" width="8.5" height="8.5" fill="#6f0fff"/><rect x="1278" y="381" width="8.5" height="8.5" fill="#780bff"/><rect x="1286" y="381" width="8.5" height="8.5" fill="#8207ff"/><rect x="1294" y="381" width="8.5" height="8.5" fill="#8c02ff"/><rect x="1190" y="389" width="8.5" height="8.5" fill="#002bff"/><rect x="1198" y="389" width="8.5" height="8.5" fill="#0d28ff"/><rect x="1206" y="389" width="8.5" height="8.5" fill="#1925ff"/><rect x="1214" y="389" width="8.5" height="8.5" fill="#2422ff"/><rect x="1222" y="389" width="8.5" height="8.5" fill="#2e1fff"/><rect x="1230" y="389" width="8.5" height="8.5" fill="#391cff"/><rect x="1238" y="389" width="8.5" height="8.5" fill="#4318ff"/><rect x="1246" y="389" width="8.5" height="8.5" fill="#4d15ff"/><rect x="1254" y="389" width="8.5" height="8.5" fill="#5612ff"/><rect x="1262" y="389" width="8.5" height="8.5" fill="#600eff"/><rect x="1270" y="389" width="8.5" height="8.5" fill="#6a0bff"/><rect x="1278" y="389" width="8.5" height="8.5" fill="#7307ff"/><rect x="1286" y="389" width="8.5" height="8.5" fill="#7d02ff"/><rect x="1190" y="397" width="8.5" height="8.5" fill="#0027ff"/><rect x="1198" y="397" width="8.5" height="8.5" fill="#0a24ff"/><rect x="1206" y="397" width="8.5" height="8.5" fill="#1621ff"/><rect x="1214" y="397" width="8.5" height="8.5" fill="#211eff"/><rect x="1222" y="397" width="8.5" height="8.5" fill="#2b1bff"/><rect x="1230" y="397" width="8.5" height="8.5" fill="#3518ff"/><rect x="1238" y="397" width="8.5" height="8.5" fill="#3f15ff"/><rect x="1246" y="397" width="8.5" height="8.5" fill="#4911ff"/><rect x="1254" y="397" width="8.5" height="8.5" fill="#520eff"/><rect x="1262" y="397" width="8.5" height="8.5" fill="#5c0aff"/><rect x="1270" y="397" width="8.5" height="8.5" fill="#6507ff"/><rect x="1278" y="397" width="8.5" height="8.5" fill="#6f02ff"/><rect x="1190" y="405" width="8.5" height="8.5" fill="#0023ff"/><rect x="1198" y="405" width="8.5" height="8.5" fill="#0820ff"/><rect x="1206" y="405" width="8.5" height="8.5" fill="#141dff"/><rect x="1214" y="405" width="8.5" height="8.5" fill="#1e1aff"/><rect x="1222" y="405" width="8.5" height="8.5" fill="#2917ff"/><rect x="1230" y="405" width="8.5" height="8.5" fill="#3214ff"/><rect x="1238" y="405" width="8.5" height="8.5" fill="#3c11ff"/><rect x="1246" y="405" width="8.5" height="8.5" fill="#450eff"/><rect x="1254" y="405" width="8.5" height="8.5" fill="#4f0aff"/><rect x="1262" y="405" width="8.5" height="8.5" fill="#5807ff"/><rect x="1270" y="405" width="8.5" height="8.5" fill="#6102ff"/><rect x="1198" y="413" width="8.5" height="8.5" fill="#061cff"/><rect x="1206" y="413" width="8.5" height="8.5" fill="#1119ff"/><rect x="1214" y="413" width="8.5" height="8.5" fill="#1c17ff"/><rect x="1222" y="413" width="8.5" height="8.5" fill="#2614ff"/><rect x="1230" y="413" width="8.5" height="8.5" fill="#3010ff"/><rect x="1238" y="413" width="8.5" height="8.5" fill="#390dff"/><rect x="1246" y="413" width="8.5" height="8.5" fill="#420aff"/><rect x="1254" y="413" width="8.5" height="8.5" fill="#4b06ff"/><rect x="1262" y="413" width="8.5" height="8.5" fill="#5402ff"/><rect x="1198" y="421" width="8.5" height="8.5" fill="#0419ff"/><rect x="1206" y="421" width="8.5" height="8.5" fill="#0f16ff"/><rect x="1214" y="421" width="8.5" height="8.5" fill="#1a13ff"/><rect x="1222" y="421" width="8.5" height="8.5" fill="#2310ff"/><rect x="1230" y="421" width="8.5" height="8.5" fill="#2d0dff"/><rect x="1238" y="421" width="8.5" height="8.5" fill="#360aff"/><rect x="1246" y="421" width="8.5" height="8.5" fill="#3f06ff"/><rect x="1254" y="421" width="8.5" height="8.5" fill="#4802ff"/><rect x="1198" y="429" width="8.5" height="8.5" fill="#0115ff"/><rect x="1206" y="429" width="8.5" height="8.5" fill="#0d13ff"/><rect x="1214" y="429" width="8.5" height="8.5" fill="#1710ff"/><rect x="1222" y="429" width="8.5" height="8.5" fill="#210dff"/><rect x="1230" y="429" width="8.5" height="8.5" fill="#2a09ff"/><rect x="1238" y="429" width="8.5" height="8.5" fill="#3306ff"/><rect x="1246" y="429" width="8.5" height="8.5" fill="#3c02ff"/><rect x="1198" y="437" width="8.5" height="8.5" fill="#0012ff"/><rect x="1206" y="437" width="8.5" height="8.5" fill="#0b0fff"/><rect x="1214" y="437" width="8.5" height="8.5" fill="#150cff"/><rect x="1222" y="437" width="8.5" height="8.5" fill="#1f09ff"/><rect x="1230" y="437" width="8.5" height="8.5" fill="#2806ff"/><rect x="1238" y="437" width="8.5" height="8.5" fill="#3102ff"/><rect x="1198" y="445" width="8.5" height="8.5" fill="#000fff"/><rect x="1206" y="445" width="8.5" height="8.5" fill="#090cff"/><rect x="1214" y="445" width="8.5" height="8.5" fill="#1309ff"/><rect x="1222" y="445" width="8.5" height="8.5" fill="#1d06ff"/><rect x="1230" y="445" width="8.5" height="8.5" fill="#2503ff"/><rect x="1198" y="453" width="8.5" height="8.5" fill="#000cff"/><rect x="1206" y="453" width="8.5" height="8.5" fill="#0709ff"/><rect x="1214" y="453" width="8.5" height="8.5" fill="#1106ff"/><rect x="1222" y="453" width="8.5" height="8.5" fill="#1a03ff"/><rect x="1206" y="461" width="8.5" height="8.5" fill="#0506ff"/><rect x="1214" y="461" width="8.5" height="8.5" fill="#0f03ff"/></g></g><clipPath id="insclip"><polygon points="1457,449.5 1655,551.4 1655,567 1457,567"/></clipPath><g><rect x="1457" y="436" width="10.5" height="10.5" fill="#679900"/><rect x="1467" y="436" width="10.5" height="10.5" fill="#6c9900"/><rect x="1477" y="436" width="10.5" height="10.5" fill="#719900"/><rect x="1487" y="436" width="10.5" height="10.5" fill="#769900"/><rect x="1497" y="436" width="10.5" height="10.5" fill="#7c9900"/><rect x="1507" y="436" width="10.5" height="10.5" fill="#819900"/><rect x="1517" y="436" width="10.5" height="10.5" fill="#869900"/><rect x="1527" y="436" width="10.5" height="10.5" fill="#8c9900"/><rect x="1537" y="436" width="10.5" height="10.5" fill="#919900"/><rect x="1547" y="436" width="10.5" height="10.5" fill="#969900"/><rect x="1557" y="436" width="10.5" height="10.5" fill="#999600"/><rect x="1567" y="436" width="10.5" height="10.5" fill="#999100"/><rect x="1577" y="436" width="10.5" height="10.5" fill="#998c00"/><rect x="1587" y="436" width="10.5" height="10.5" fill="#998700"/><rect x="1597" y="436" width="10.5" height="10.5" fill="#998300"/><rect x="1607" y="436" width="10.5" height="10.5" fill="#997e00"/><rect x="1617" y="436" width="10.5" height="10.5" fill="#997a00"/><rect x="1627" y="436" width="10.5" height="10.5" fill="#997600"/><rect x="1637" y="436" width="10.5" height="10.5" fill="#997300"/><rect x="1647" y="436" width="8" height="10.5" fill="#996f00"/><rect x="1457" y="446" width="10.5" height="10.5" fill="#679900"/><rect x="1467" y="446" width="10.5" height="10.5" fill="#6c9900"/><rect x="1477" y="446" width="10.5" height="10.5" fill="#719900"/><rect x="1487" y="446" width="10.5" height="10.5" fill="#769900"/><rect x="1497" y="446" width="10.5" height="10.5" fill="#7c9900"/><rect x="1507" y="446" width="10.5" height="10.5" fill="#819900"/><rect x="1517" y="446" width="10.5" height="10.5" fill="#869900"/><rect x="1527" y="446" width="10.5" height="10.5" fill="#8c9900"/><rect x="1537" y="446" width="10.5" height="10.5" fill="#919900"/><rect x="1547" y="446" width="10.5" height="10.5" fill="#979900"/><rect x="1557" y="446" width="10.5" height="10.5" fill="#999600"/><rect x="1567" y="446" width="10.5" height="10.5" fill="#999100"/><rect x="1577" y="446" width="10.5" height="10.5" fill="#998c00"/><rect x="1587" y="446" width="10.5" height="10.5" fill="#998700"/><rect x="1597" y="446" width="10.5" height="10.5" fill="#998200"/><rect x="1607" y="446" width="10.5" height="10.5" fill="#997e00"/><rect x="1617" y="446" width="10.5" height="10.5" fill="#997a00"/><rect x="1627" y="446" width="10.5" height="10.5" fill="#997600"/><rect x="1637" y="446" width="10.5" height="10.5" fill="#997300"/><rect x="1647" y="446" width="8" height="10.5" fill="#996f00"/><rect x="1457" y="456" width="10.5" height="10.5" fill="#679901"/><rect x="1467" y="456" width="10.5" height="10.5" fill="#6c9901"/><rect x="1477" y="456" width="10.5" height="10.5" fill="#719900"/><rect x="1487" y="456" width="10.5" height="10.5" fill="#769900"/><rect x="1497" y="456" width="10.5" height="10.5" fill="#7c9900"/><rect x="1507" y="456" width="10.5" height="10.5" fill="#819900"/><rect x="1517" y="456" width="10.5" height="10.5" fill="#869900"/><rect x="1527" y="456" width="10.5" height="10.5" fill="#8c9900"/><rect x="1537" y="456" width="10.5" height="10.5" fill="#919900"/><rect x="1547" y="456" width="10.5" height="10.5" fill="#979900"/><rect x="1557" y="456" width="10.5" height="10.5" fill="#999600"/><rect x="1567" y="456" width="10.5" height="10.5" fill="#999000"/><rect x="1577" y="456" width="10.5" height="10.5" fill="#998c00"/><rect x="1587" y="456" width="10.5" height="10.5" fill="#998700"/><rect x="1597" y="456" width="10.5" height="10.5" fill="#998200"/><rect x="1607" y="456" width="10.5" height="10.5" fill="#997e00"/><rect x="1617" y="456" width="10.5" height="10.5" fill="#997a00"/><rect x="1627" y="456" width="10.5" height="10.5" fill="#997600"/><rect x="1637" y="456" width="10.5" height="10.5" fill="#997300"/><rect x="1647" y="456" width="8" height="10.5" fill="#996f00"/><rect x="1457" y="466" width="10.5" height="10.5" fill="#679903"/><rect x="1467" y="466" width="10.5" height="10.5" fill="#6c9902"/><rect x="1477" y="466" width="10.5" height="10.5" fill="#719901"/><rect x="1487" y="466" width="10.5" height="10.5" fill="#769901"/><rect x="1497" y="466" width="10.5" height="10.5" fill="#7c9900"/><rect x="1507" y="466" width="10.5" height="10.5" fill="#819900"/><rect x="1517" y="466" width="10.5" height="10.5" fill="#869900"/><rect x="1527" y="466" width="10.5" height="10.5" fill="#8c9900"/><rect x="1537" y="466" width="10.5" height="10.5" fill="#919900"/><rect x="1547" y="466" width="10.5" height="10.5" fill="#979900"/><rect x="1557" y="466" width="10.5" height="10.5" fill="#999600"/><rect x="1567" y="466" width="10.5" height="10.5" fill="#999000"/><rect x="1577" y="466" width="10.5" height="10.5" fill="#998b00"/><rect x="1587" y="466" width="10.5" height="10.5" fill="#998700"/><rect x="1597" y="466" width="10.5" height="10.5" fill="#998200"/><rect x="1607" y="466" width="10.5" height="10.5" fill="#997e00"/><rect x="1617" y="466" width="10.5" height="10.5" fill="#997a00"/><rect x="1627" y="466" width="10.5" height="10.5" fill="#997600"/><rect x="1637" y="466" width="10.5" height="10.5" fill="#997200"/><rect x="1647" y="466" width="8" height="10.5" fill="#996f00"/><rect x="1457" y="476" width="10.5" height="10.5" fill="#679904"/><rect x="1467" y="476" width="10.5" height="10.5" fill="#6c9903"/><rect x="1477" y="476" width="10.5" height="10.5" fill="#719903"/><rect x="1487" y="476" width="10.5" height="10.5" fill="#769902"/><rect x="1497" y="476" width="10.5" height="10.5" fill="#7c9901"/><rect x="1507" y="476" width="10.5" height="10.5" fill="#819901"/><rect x="1517" y="476" width="10.5" height="10.5" fill="#869900"/><rect x="1527" y="476" width="10.5" height="10.5" fill="#8c9900"/><rect x="1537" y="476" width="10.5" height="10.5" fill="#919900"/><rect x="1547" y="476" width="10.5" height="10.5" fill="#979900"/><rect x="1557" y="476" width="10.5" height="10.5" fill="#999600"/><rect x="1567" y="476" width="10.5" height="10.5" fill="#999000"/><rect x="1577" y="476" width="10.5" height="10.5" fill="#998b00"/><rect x="1587" y="476" width="10.5" height="10.5" fill="#998700"/><rect x="1597" y="476" width="10.5" height="10.5" fill="#998200"/><rect x="1607" y="476" width="10.5" height="10.5" fill="#997e00"/><rect x="1617" y="476" width="10.5" height="10.5" fill="#997a00"/><rect x="1627" y="476" width="10.5" height="10.5" fill="#997600"/><rect x="1637" y="476" width="10.5" height="10.5" fill="#997200"/><rect x="1647" y="476" width="8" height="10.5" fill="#996f00"/><rect x="1457" y="486" width="10.5" height="10.5" fill="#679905"/><rect x="1467" y="486" width="10.5" height="10.5" fill="#6c9905"/><rect x="1477" y="486" width="10.5" height="10.5" fill="#719904"/><rect x="1487" y="486" width="10.5" height="10.5" fill="#779903"/><rect x="1497" y="486" width="10.5" height="10.5" fill="#7c9903"/><rect x="1507" y="486" width="10.5" height="10.5" fill="#819902"/><rect x="1517" y="486" width="10.5" height="10.5" fill="#869901"/><rect x="1527" y="486" width="10.5" height="10.5" fill="#8c9901"/><rect x="1537" y="486" width="10.5" height="10.5" fill="#919900"/><rect x="1547" y="486" width="10.5" height="10.5" fill="#979900"/><rect x="1557" y="486" width="10.5" height="10.5" fill="#999500"/><rect x="1567" y="486" width="10.5" height="10.5" fill="#999000"/><rect x="1577" y="486" width="10.5" height="10.5" fill="#998b00"/><rect x="1587" y="486" width="10.5" height="10.5" fill="#998600"/><rect x="1597" y="486" width="10.5" height="10.5" fill="#998200"/><rect x="1607" y="486" width="10.5" height="10.5" fill="#997e00"/><rect x="1617" y="486" width="10.5" height="10.5" fill="#997a00"/><rect x="1627" y="486" width="10.5" height="10.5" fill="#997600"/><rect x="1637" y="486" width="10.5" height="10.5" fill="#997200"/><rect x="1647" y="486" width="8" height="10.5" fill="#996f00"/><rect x="1457" y="496" width="10.5" height="10.5" fill="#679906"/><rect x="1467" y="496" width="10.5" height="10.5" fill="#6c9906"/><rect x="1477" y="496" width="10.5" height="10.5" fill="#719905"/><rect x="1487" y="496" width="10.5" height="10.5" fill="#779905"/><rect x="1497" y="496" width="10.5" height="10.5" fill="#7c9904"/><rect x="1507" y="496" width="10.5" height="10.5" fill="#819903"/><rect x="1517" y="496" width="10.5" height="10.5" fill="#869903"/><rect x="1527" y="496" width="10.5" height="10.5" fill="#8c9902"/><rect x="1537" y="496" width="10.5" height="10.5" fill="#919901"/><rect x="1547" y="496" width="10.5" height="10.5" fill="#979901"/><rect x="1557" y="496" width="10.5" height="10.5" fill="#999500"/><rect x="1567" y="496" width="10.5" height="10.5" fill="#999000"/><rect x="1577" y="496" width="10.5" height="10.5" fill="#998b00"/><rect x="1587" y="496" width="10.5" height="10.5" fill="#998600"/><rect x="1597" y="496" width="10.5" height="10.5" fill="#998200"/><rect x="1607" y="496" width="10.5" height="10.5" fill="#997e00"/><rect x="1617" y="496" width="10.5" height="10.5" fill="#997a00"/><rect x="1627" y="496" width="10.5" height="10.5" fill="#997600"/><rect x="1637" y="496" width="10.5" height="10.5" fill="#997200"/><rect x="1647" y="496" width="8" height="10.5" fill="#996f00"/><rect x="1457" y="506" width="10.5" height="10.5" fill="#679907"/><rect x="1467" y="506" width="10.5" height="10.5" fill="#6c9907"/><rect x="1477" y="506" width="10.5" height="10.5" fill="#719906"/><rect x="1487" y="506" width="10.5" height="10.5" fill="#779906"/><rect x="1497" y="506" width="10.5" height="10.5" fill="#7c9905"/><rect x="1507" y="506" width="10.5" height="10.5" fill="#819905"/><rect x="1517" y="506" width="10.5" height="10.5" fill="#879904"/><rect x="1527" y="506" width="10.5" height="10.5" fill="#8c9903"/><rect x="1537" y="506" width="10.5" height="10.5" fill="#929903"/><rect x="1547" y="506" width="10.5" height="10.5" fill="#979902"/><rect x="1557" y="506" width="10.5" height="10.5" fill="#999501"/><rect x="1567" y="506" width="10.5" height="10.5" fill="#999000"/><rect x="1577" y="506" width="10.5" height="10.5" fill="#998b00"/><rect x="1587" y="506" width="10.5" height="10.5" fill="#998600"/><rect x="1597" y="506" width="10.5" height="10.5" fill="#998200"/><rect x="1607" y="506" width="10.5" height="10.5" fill="#997e00"/><rect x="1617" y="506" width="10.5" height="10.5" fill="#997a00"/><rect x="1627" y="506" width="10.5" height="10.5" fill="#997600"/><rect x="1637" y="506" width="10.5" height="10.5" fill="#997200"/><rect x="1647" y="506" width="8" height="10.5" fill="#996f00"/><rect x="1457" y="516" width="10.5" height="10.5" fill="#679908"/><rect x="1467" y="516" width="10.5" height="10.5" fill="#6c9908"/><rect x="1477" y="516" width="10.5" height="10.5" fill="#719907"/><rect x="1487" y="516" width="10.5" height="10.5" fill="#779907"/><rect x="1497" y="516" width="10.5" height="10.5" fill="#7c9906"/><rect x="1507" y="516" width="10.5" height="10.5" fill="#819906"/><rect x="1517" y="516" width="10.5" height="10.5" fill="#879905"/><rect x="1527" y="516" width="10.5" height="10.5" fill="#8c9905"/><rect x="1537" y="516" width="10.5" height="10.5" fill="#929904"/><rect x="1547" y="516" width="10.5" height="10.5" fill="#979903"/><rect x="1557" y="516" width="10.5" height="10.5" fill="#999503"/><rect x="1567" y="516" width="10.5" height="10.5" fill="#999002"/><rect x="1577" y="516" width="10.5" height="10.5" fill="#998b01"/><rect x="1587" y="516" width="10.5" height="10.5" fill="#998600"/><rect x="1597" y="516" width="10.5" height="10.5" fill="#998200"/><rect x="1607" y="516" width="10.5" height="10.5" fill="#997d00"/><rect x="1617" y="516" width="10.5" height="10.5" fill="#997900"/><rect x="1627" y="516" width="10.5" height="10.5" fill="#997600"/><rect x="1637" y="516" width="10.5" height="10.5" fill="#997200"/><rect x="1647" y="516" width="8" height="10.5" fill="#996e00"/><rect x="1457" y="526" width="10.5" height="10.5" fill="#679909"/><rect x="1467" y="526" width="10.5" height="10.5" fill="#6c9909"/><rect x="1477" y="526" width="10.5" height="10.5" fill="#719908"/><rect x="1487" y="526" width="10.5" height="10.5" fill="#779908"/><rect x="1497" y="526" width="10.5" height="10.5" fill="#7c9907"/><rect x="1507" y="526" width="10.5" height="10.5" fill="#819907"/><rect x="1517" y="526" width="10.5" height="10.5" fill="#879906"/><rect x="1527" y="526" width="10.5" height="10.5" fill="#8c9906"/><rect x="1537" y="526" width="10.5" height="10.5" fill="#929905"/><rect x="1547" y="526" width="10.5" height="10.5" fill="#979905"/><rect x="1557" y="526" width="10.5" height="10.5" fill="#999504"/><rect x="1567" y="526" width="10.5" height="10.5" fill="#999003"/><rect x="1577" y="526" width="10.5" height="10.5" fill="#998b03"/><rect x="1587" y="526" width="10.5" height="10.5" fill="#998602"/><rect x="1597" y="526" width="10.5" height="10.5" fill="#998201"/><rect x="1607" y="526" width="10.5" height="10.5" fill="#997d00"/><rect x="1617" y="526" width="10.5" height="10.5" fill="#997900"/><rect x="1627" y="526" width="10.5" height="10.5" fill="#997500"/><rect x="1637" y="526" width="10.5" height="10.5" fill="#997200"/><rect x="1647" y="526" width="8" height="10.5" fill="#996e00"/><rect x="1457" y="536" width="10.5" height="10.5" fill="#67990a"/><rect x="1467" y="536" width="10.5" height="10.5" fill="#6c990a"/><rect x="1477" y="536" width="10.5" height="10.5" fill="#71990a"/><rect x="1487" y="536" width="10.5" height="10.5" fill="#779909"/><rect x="1497" y="536" width="10.5" height="10.5" fill="#7c9909"/><rect x="1507" y="536" width="10.5" height="10.5" fill="#819908"/><rect x="1517" y="536" width="10.5" height="10.5" fill="#879908"/><rect x="1527" y="536" width="10.5" height="10.5" fill="#8c9907"/><rect x="1537" y="536" width="10.5" height="10.5" fill="#929907"/><rect x="1547" y="536" width="10.5" height="10.5" fill="#979906"/><rect x="1557" y="536" width="10.5" height="10.5" fill="#999505"/><rect x="1567" y="536" width="10.5" height="10.5" fill="#999004"/><rect x="1577" y="536" width="10.5" height="10.5" fill="#998b04"/><rect x="1587" y="536" width="10.5" height="10.5" fill="#998603"/><rect x="1597" y="536" width="10.5" height="10.5" fill="#998102"/><rect x="1607" y="536" width="10.5" height="10.5" fill="#997d02"/><rect x="1617" y="536" width="10.5" height="10.5" fill="#997901"/><rect x="1627" y="536" width="10.5" height="10.5" fill="#997500"/><rect x="1637" y="536" width="10.5" height="10.5" fill="#997200"/><rect x="1647" y="536" width="8" height="10.5" fill="#996e00"/><rect x="1457" y="546" width="10.5" height="10.5" fill="#67990c"/><rect x="1467" y="546" width="10.5" height="10.5" fill="#6c990b"/><rect x="1477" y="546" width="10.5" height="10.5" fill="#71990b"/><rect x="1487" y="546" width="10.5" height="10.5" fill="#77990a"/><rect x="1497" y="546" width="10.5" height="10.5" fill="#7c990a"/><rect x="1507" y="546" width="10.5" height="10.5" fill="#819909"/><rect x="1517" y="546" width="10.5" height="10.5" fill="#879909"/><rect x="1527" y="546" width="10.5" height="10.5" fill="#8c9908"/><rect x="1537" y="546" width="10.5" height="10.5" fill="#929908"/><rect x="1547" y="546" width="10.5" height="10.5" fill="#989907"/><rect x="1557" y="546" width="10.5" height="10.5" fill="#999506"/><rect x="1567" y="546" width="10.5" height="10.5" fill="#999006"/><rect x="1577" y="546" width="10.5" height="10.5" fill="#998b05"/><rect x="1587" y="546" width="10.5" height="10.5" fill="#998604"/><rect x="1597" y="546" width="10.5" height="10.5" fill="#998104"/><rect x="1607" y="546" width="10.5" height="10.5" fill="#997d03"/><rect x="1617" y="546" width="10.5" height="10.5" fill="#997902"/><rect x="1627" y="546" width="10.5" height="10.5" fill="#997502"/><rect x="1637" y="546" width="10.5" height="10.5" fill="#997201"/><rect x="1647" y="546" width="8" height="10.5" fill="#996e00"/><rect x="1457" y="556" width="10.5" height="10.5" fill="#67990d"/><rect x="1467" y="556" width="10.5" height="10.5" fill="#6c990c"/><rect x="1477" y="556" width="10.5" height="10.5" fill="#72990c"/><rect x="1487" y="556" width="10.5" height="10.5" fill="#77990b"/><rect x="1497" y="556" width="10.5" height="10.5" fill="#7c990b"/><rect x="1507" y="556" width="10.5" height="10.5" fill="#81990a"/><rect x="1517" y="556" width="10.5" height="10.5" fill="#87990a"/><rect x="1527" y="556" width="10.5" height="10.5" fill="#8c9909"/><rect x="1537" y="556" width="10.5" height="10.5" fill="#929909"/><rect x="1547" y="556" width="10.5" height="10.5" fill="#989908"/><rect x="1557" y="556" width="10.5" height="10.5" fill="#999508"/><rect x="1567" y="556" width="10.5" height="10.5" fill="#998f07"/><rect x="1577" y="556" width="10.5" height="10.5" fill="#998a06"/><rect x="1587" y="556" width="10.5" height="10.5" fill="#998605"/><rect x="1597" y="556" width="10.5" height="10.5" fill="#998105"/><rect x="1607" y="556" width="10.5" height="10.5" fill="#997d04"/><rect x="1617" y="556" width="10.5" height="10.5" fill="#997903"/><rect x="1627" y="556" width="10.5" height="10.5" fill="#997503"/><rect x="1637" y="556" width="10.5" height="10.5" fill="#997102"/><rect x="1647" y="556" width="8" height="10.5" fill="#996e01"/><rect x="1457" y="566" width="10.5" height="1" fill="#67990e"/><rect x="1467" y="566" width="10.5" height="1" fill="#6c990d"/><rect x="1477" y="566" width="10.5" height="1" fill="#72990d"/><rect x="1487" y="566" width="10.5" height="1" fill="#77990c"/><rect x="1497" y="566" width="10.5" height="1" fill="#7c990c"/><rect x="1507" y="566" width="10.5" height="1" fill="#82990b"/><rect x="1517" y="566" width="10.5" height="1" fill="#87990b"/><rect x="1527" y="566" width="10.5" height="1" fill="#8c990a"/><rect x="1537" y="566" width="10.5" height="1" fill="#92990a"/><rect x="1547" y="566" width="10.5" height="1" fill="#989909"/><rect x="1557" y="566" width="10.5" height="1" fill="#999509"/><rect x="1567" y="566" width="10.5" height="1" fill="#998f08"/><rect x="1577" y="566" width="10.5" height="1" fill="#998a07"/><rect x="1587" y="566" width="10.5" height="1" fill="#998606"/><rect x="1597" y="566" width="10.5" height="1" fill="#998106"/><rect x="1607" y="566" width="10.5" height="1" fill="#997d05"/><rect x="1617" y="566" width="10.5" height="1" fill="#997904"/><rect x="1627" y="566" width="10.5" height="1" fill="#997504"/><rect x="1637" y="566" width="10.5" height="1" fill="#997103"/><rect x="1647" y="566" width="8" height="1" fill="#996e03"/></g><g clip-path="url(#insclip)"><rect x="1457" y="436" width="10.5" height="10.5" fill="#acff00"/><rect x="1467" y="436" width="10.5" height="10.5" fill="#b4ff00"/><rect x="1477" y="436" width="10.5" height="10.5" fill="#bdff00"/><rect x="1487" y="436" width="10.5" height="10.5" fill="#c5ff00"/><rect x="1497" y="436" width="10.5" height="10.5" fill="#ceff00"/><rect x="1507" y="436" width="10.5" height="10.5" fill="#d7ff00"/><rect x="1517" y="436" width="10.5" height="10.5" fill="#e0ff00"/><rect x="1527" y="436" width="10.5" height="10.5" fill="#e9ff00"/><rect x="1537" y="436" width="10.5" height="10.5" fill="#f2ff00"/><rect x="1547" y="436" width="10.5" height="10.5" fill="#fbff00"/><rect x="1557" y="436" width="10.5" height="10.5" fill="#fffa00"/><rect x="1567" y="436" width="10.5" height="10.5" fill="#fff100"/><rect x="1577" y="436" width="10.5" height="10.5" fill="#ffe900"/><rect x="1587" y="436" width="10.5" height="10.5" fill="#ffe100"/><rect x="1597" y="436" width="10.5" height="10.5" fill="#ffda00"/><rect x="1607" y="436" width="10.5" height="10.5" fill="#ffd300"/><rect x="1617" y="436" width="10.5" height="10.5" fill="#ffcc00"/><rect x="1627" y="436" width="10.5" height="10.5" fill="#ffc500"/><rect x="1637" y="436" width="10.5" height="10.5" fill="#ffbf00"/><rect x="1647" y="436" width="8" height="10.5" fill="#ffb900"/><rect x="1457" y="446" width="10.5" height="10.5" fill="#acff00"/><rect x="1467" y="446" width="10.5" height="10.5" fill="#b4ff00"/><rect x="1477" y="446" width="10.5" height="10.5" fill="#bdff00"/><rect x="1487" y="446" width="10.5" height="10.5" fill="#c5ff00"/><rect x="1497" y="446" width="10.5" height="10.5" fill="#ceff00"/><rect x="1507" y="446" width="10.5" height="10.5" fill="#d7ff00"/><rect x="1517" y="446" width="10.5" height="10.5" fill="#e0ff00"/><rect x="1527" y="446" width="10.5" height="10.5" fill="#e9ff00"/><rect x="1537" y="446" width="10.5" height="10.5" fill="#f2ff00"/><rect x="1547" y="446" width="10.5" height="10.5" fill="#fbff00"/><rect x="1557" y="446" width="10.5" height="10.5" fill="#fffa00"/><rect x="1567" y="446" width="10.5" height="10.5" fill="#fff100"/><rect x="1577" y="446" width="10.5" height="10.5" fill="#ffe900"/><rect x="1587" y="446" width="10.5" height="10.5" fill="#ffe100"/><rect x="1597" y="446" width="10.5" height="10.5" fill="#ffd900"/><rect x="1607" y="446" width="10.5" height="10.5" fill="#ffd200"/><rect x="1617" y="446" width="10.5" height="10.5" fill="#ffcc00"/><rect x="1627" y="446" width="10.5" height="10.5" fill="#ffc500"/><rect x="1637" y="446" width="10.5" height="10.5" fill="#ffbf00"/><rect x="1647" y="446" width="8" height="10.5" fill="#ffb900"/><rect x="1457" y="456" width="10.5" height="10.5" fill="#acff02"/><rect x="1467" y="456" width="10.5" height="10.5" fill="#b4ff01"/><rect x="1477" y="456" width="10.5" height="10.5" fill="#bdff00"/><rect x="1487" y="456" width="10.5" height="10.5" fill="#c5ff00"/><rect x="1497" y="456" width="10.5" height="10.5" fill="#ceff00"/><rect x="1507" y="456" width="10.5" height="10.5" fill="#d7ff00"/><rect x="1517" y="456" width="10.5" height="10.5" fill="#e0ff00"/><rect x="1527" y="456" width="10.5" height="10.5" fill="#e9ff00"/><rect x="1537" y="456" width="10.5" height="10.5" fill="#f2ff00"/><rect x="1547" y="456" width="10.5" height="10.5" fill="#fbff00"/><rect x="1557" y="456" width="10.5" height="10.5" fill="#fffa00"/><rect x="1567" y="456" width="10.5" height="10.5" fill="#fff100"/><rect x="1577" y="456" width="10.5" height="10.5" fill="#ffe900"/><rect x="1587" y="456" width="10.5" height="10.5" fill="#ffe100"/><rect x="1597" y="456" width="10.5" height="10.5" fill="#ffd900"/><rect x="1607" y="456" width="10.5" height="10.5" fill="#ffd200"/><rect x="1617" y="456" width="10.5" height="10.5" fill="#ffcb00"/><rect x="1627" y="456" width="10.5" height="10.5" fill="#ffc500"/><rect x="1637" y="456" width="10.5" height="10.5" fill="#ffbf00"/><rect x="1647" y="456" width="8" height="10.5" fill="#ffb900"/><rect x="1457" y="466" width="10.5" height="10.5" fill="#acff05"/><rect x="1467" y="466" width="10.5" height="10.5" fill="#b4ff03"/><rect x="1477" y="466" width="10.5" height="10.5" fill="#bdff02"/><rect x="1487" y="466" width="10.5" height="10.5" fill="#c5ff01"/><rect x="1497" y="466" width="10.5" height="10.5" fill="#ceff00"/><rect x="1507" y="466" width="10.5" height="10.5" fill="#d7ff00"/><rect x="1517" y="466" width="10.5" height="10.5" fill="#e0ff00"/><rect x="1527" y="466" width="10.5" height="10.5" fill="#e9ff00"/><rect x="1537" y="466" width="10.5" height="10.5" fill="#f2ff00"/><rect x="1547" y="466" width="10.5" height="10.5" fill="#fbff00"/><rect x="1557" y="466" width="10.5" height="10.5" fill="#fff900"/><rect x="1567" y="466" width="10.5" height="10.5" fill="#fff100"/><rect x="1577" y="466" width="10.5" height="10.5" fill="#ffe800"/><rect x="1587" y="466" width="10.5" height="10.5" fill="#ffe000"/><rect x="1597" y="466" width="10.5" height="10.5" fill="#ffd900"/><rect x="1607" y="466" width="10.5" height="10.5" fill="#ffd200"/><rect x="1617" y="466" width="10.5" height="10.5" fill="#ffcb00"/><rect x="1627" y="466" width="10.5" height="10.5" fill="#ffc500"/><rect x="1637" y="466" width="10.5" height="10.5" fill="#ffbf00"/><rect x="1647" y="466" width="8" height="10.5" fill="#ffb900"/><rect x="1457" y="476" width="10.5" height="10.5" fill="#acff07"/><rect x="1467" y="476" width="10.5" height="10.5" fill="#b4ff06"/><rect x="1477" y="476" width="10.5" height="10.5" fill="#bdff05"/><rect x="1487" y="476" width="10.5" height="10.5" fill="#c5ff03"/><rect x="1497" y="476" width="10.5" height="10.5" fill="#ceff02"/><rect x="1507" y="476" width="10.5" height="10.5" fill="#d7ff01"/><rect x="1517" y="476" width="10.5" height="10.5" fill="#e0ff00"/><rect x="1527" y="476" width="10.5" height="10.5" fill="#e9ff00"/><rect x="1537" y="476" width="10.5" height="10.5" fill="#f2ff00"/><rect x="1547" y="476" width="10.5" height="10.5" fill="#fbff00"/><rect x="1557" y="476" width="10.5" height="10.5" fill="#fff900"/><rect x="1567" y="476" width="10.5" height="10.5" fill="#fff000"/><rect x="1577" y="476" width="10.5" height="10.5" fill="#ffe800"/><rect x="1587" y="476" width="10.5" height="10.5" fill="#ffe000"/><rect x="1597" y="476" width="10.5" height="10.5" fill="#ffd900"/><rect x="1607" y="476" width="10.5" height="10.5" fill="#ffd200"/><rect x="1617" y="476" width="10.5" height="10.5" fill="#ffcb00"/><rect x="1627" y="476" width="10.5" height="10.5" fill="#ffc500"/><rect x="1637" y="476" width="10.5" height="10.5" fill="#ffbf00"/><rect x="1647" y="476" width="8" height="10.5" fill="#ffb900"/><rect x="1457" y="486" width="10.5" height="10.5" fill="#acff08"/><rect x="1467" y="486" width="10.5" height="10.5" fill="#b4ff08"/><rect x="1477" y="486" width="10.5" height="10.5" fill="#bdff07"/><rect x="1487" y="486" width="10.5" height="10.5" fill="#c6ff06"/><rect x="1497" y="486" width="10.5" height="10.5" fill="#ceff05"/><rect x="1507" y="486" width="10.5" height="10.5" fill="#d7ff03"/><rect x="1517" y="486" width="10.5" height="10.5" fill="#e0ff02"/><rect x="1527" y="486" width="10.5" height="10.5" fill="#e9ff01"/><rect x="1537" y="486" width="10.5" height="10.5" fill="#f2ff00"/><rect x="1547" y="486" width="10.5" height="10.5" fill="#fcff00"/><rect x="1557" y="486" width="10.5" height="10.5" fill="#fff900"/><rect x="1567" y="486" width="10.5" height="10.5" fill="#fff000"/><rect x="1577" y="486" width="10.5" height="10.5" fill="#ffe800"/><rect x="1587" y="486" width="10.5" height="10.5" fill="#ffe000"/><rect x="1597" y="486" width="10.5" height="10.5" fill="#ffd900"/><rect x="1607" y="486" width="10.5" height="10.5" fill="#ffd200"/><rect x="1617" y="486" width="10.5" height="10.5" fill="#ffcb00"/><rect x="1627" y="486" width="10.5" height="10.5" fill="#ffc500"/><rect x="1637" y="486" width="10.5" height="10.5" fill="#ffbe00"/><rect x="1647" y="486" width="8" height="10.5" fill="#ffb900"/><rect x="1457" y="496" width="10.5" height="10.5" fill="#acff0a"/><rect x="1467" y="496" width="10.5" height="10.5" fill="#b4ff09"/><rect x="1477" y="496" width="10.5" height="10.5" fill="#bdff09"/><rect x="1487" y="496" width="10.5" height="10.5" fill="#c6ff08"/><rect x="1497" y="496" width="10.5" height="10.5" fill="#ceff07"/><rect x="1507" y="496" width="10.5" height="10.5" fill="#d7ff06"/><rect x="1517" y="496" width="10.5" height="10.5" fill="#e0ff05"/><rect x="1527" y="496" width="10.5" height="10.5" fill="#e9ff03"/><rect x="1537" y="496" width="10.5" height="10.5" fill="#f2ff02"/><rect x="1547" y="496" width="10.5" height="10.5" fill="#fcff01"/><rect x="1557" y="496" width="10.5" height="10.5" fill="#fff900"/><rect x="1567" y="496" width="10.5" height="10.5" fill="#fff000"/><rect x="1577" y="496" width="10.5" height="10.5" fill="#ffe800"/><rect x="1587" y="496" width="10.5" height="10.5" fill="#ffe000"/><rect x="1597" y="496" width="10.5" height="10.5" fill="#ffd900"/><rect x="1607" y="496" width="10.5" height="10.5" fill="#ffd100"/><rect x="1617" y="496" width="10.5" height="10.5" fill="#ffcb00"/><rect x="1627" y="496" width="10.5" height="10.5" fill="#ffc400"/><rect x="1637" y="496" width="10.5" height="10.5" fill="#ffbe00"/><rect x="1647" y="496" width="8" height="10.5" fill="#ffb800"/><rect x="1457" y="506" width="10.5" height="10.5" fill="#acff0c"/><rect x="1467" y="506" width="10.5" height="10.5" fill="#b4ff0b"/><rect x="1477" y="506" width="10.5" height="10.5" fill="#bdff0a"/><rect x="1487" y="506" width="10.5" height="10.5" fill="#c6ff0a"/><rect x="1497" y="506" width="10.5" height="10.5" fill="#ceff09"/><rect x="1507" y="506" width="10.5" height="10.5" fill="#d7ff08"/><rect x="1517" y="506" width="10.5" height="10.5" fill="#e0ff07"/><rect x="1527" y="506" width="10.5" height="10.5" fill="#e9ff06"/><rect x="1537" y="506" width="10.5" height="10.5" fill="#f3ff05"/><rect x="1547" y="506" width="10.5" height="10.5" fill="#fcff03"/><rect x="1557" y="506" width="10.5" height="10.5" fill="#fff902"/><rect x="1567" y="506" width="10.5" height="10.5" fill="#fff001"/><rect x="1577" y="506" width="10.5" height="10.5" fill="#ffe800"/><rect x="1587" y="506" width="10.5" height="10.5" fill="#ffe000"/><rect x="1597" y="506" width="10.5" height="10.5" fill="#ffd800"/><rect x="1607" y="506" width="10.5" height="10.5" fill="#ffd100"/><rect x="1617" y="506" width="10.5" height="10.5" fill="#ffcb00"/><rect x="1627" y="506" width="10.5" height="10.5" fill="#ffc400"/><rect x="1637" y="506" width="10.5" height="10.5" fill="#ffbe00"/><rect x="1647" y="506" width="8" height="10.5" fill="#ffb800"/><rect x="1457" y="516" width="10.5" height="10.5" fill="#acff0e"/><rect x="1467" y="516" width="10.5" height="10.5" fill="#b4ff0d"/><rect x="1477" y="516" width="10.5" height="10.5" fill="#bdff0c"/><rect x="1487" y="516" width="10.5" height="10.5" fill="#c6ff0b"/><rect x="1497" y="516" width="10.5" height="10.5" fill="#ceff0b"/><rect x="1507" y="516" width="10.5" height="10.5" fill="#d7ff0a"/><rect x="1517" y="516" width="10.5" height="10.5" fill="#e0ff09"/><rect x="1527" y="516" width="10.5" height="10.5" fill="#e9ff08"/><rect x="1537" y="516" width="10.5" height="10.5" fill="#f3ff07"/><rect x="1547" y="516" width="10.5" height="10.5" fill="#fcff06"/><rect x="1557" y="516" width="10.5" height="10.5" fill="#fff904"/><rect x="1567" y="516" width="10.5" height="10.5" fill="#fff003"/><rect x="1577" y="516" width="10.5" height="10.5" fill="#ffe702"/><rect x="1587" y="516" width="10.5" height="10.5" fill="#ffe001"/><rect x="1597" y="516" width="10.5" height="10.5" fill="#ffd800"/><rect x="1607" y="516" width="10.5" height="10.5" fill="#ffd100"/><rect x="1617" y="516" width="10.5" height="10.5" fill="#ffca00"/><rect x="1627" y="516" width="10.5" height="10.5" fill="#ffc400"/><rect x="1637" y="516" width="10.5" height="10.5" fill="#ffbe00"/><rect x="1647" y="516" width="8" height="10.5" fill="#ffb800"/><rect x="1457" y="526" width="10.5" height="10.5" fill="#acff10"/><rect x="1467" y="526" width="10.5" height="10.5" fill="#b4ff0f"/><rect x="1477" y="526" width="10.5" height="10.5" fill="#bdff0e"/><rect x="1487" y="526" width="10.5" height="10.5" fill="#c6ff0d"/><rect x="1497" y="526" width="10.5" height="10.5" fill="#cfff0c"/><rect x="1507" y="526" width="10.5" height="10.5" fill="#d7ff0c"/><rect x="1517" y="526" width="10.5" height="10.5" fill="#e0ff0b"/><rect x="1527" y="526" width="10.5" height="10.5" fill="#eaff0a"/><rect x="1537" y="526" width="10.5" height="10.5" fill="#f3ff09"/><rect x="1547" y="526" width="10.5" height="10.5" fill="#fcff08"/><rect x="1557" y="526" width="10.5" height="10.5" fill="#fff807"/><rect x="1567" y="526" width="10.5" height="10.5" fill="#fff005"/><rect x="1577" y="526" width="10.5" height="10.5" fill="#ffe704"/><rect x="1587" y="526" width="10.5" height="10.5" fill="#ffdf03"/><rect x="1597" y="526" width="10.5" height="10.5" fill="#ffd802"/><rect x="1607" y="526" width="10.5" height="10.5" fill="#ffd101"/><rect x="1617" y="526" width="10.5" height="10.5" fill="#ffca00"/><rect x="1627" y="526" width="10.5" height="10.5" fill="#ffc400"/><rect x="1637" y="526" width="10.5" height="10.5" fill="#ffbe00"/><rect x="1647" y="526" width="8" height="10.5" fill="#ffb800"/><rect x="1457" y="536" width="10.5" height="10.5" fill="#acff11"/><rect x="1467" y="536" width="10.5" height="10.5" fill="#b4ff11"/><rect x="1477" y="536" width="10.5" height="10.5" fill="#bdff10"/><rect x="1487" y="536" width="10.5" height="10.5" fill="#c6ff0f"/><rect x="1497" y="536" width="10.5" height="10.5" fill="#cfff0e"/><rect x="1507" y="536" width="10.5" height="10.5" fill="#d8ff0e"/><rect x="1517" y="536" width="10.5" height="10.5" fill="#e1ff0d"/><rect x="1527" y="536" width="10.5" height="10.5" fill="#eaff0c"/><rect x="1537" y="536" width="10.5" height="10.5" fill="#f3ff0b"/><rect x="1547" y="536" width="10.5" height="10.5" fill="#fcff0a"/><rect x="1557" y="536" width="10.5" height="10.5" fill="#fff809"/><rect x="1567" y="536" width="10.5" height="10.5" fill="#ffef07"/><rect x="1577" y="536" width="10.5" height="10.5" fill="#ffe706"/><rect x="1587" y="536" width="10.5" height="10.5" fill="#ffdf05"/><rect x="1597" y="536" width="10.5" height="10.5" fill="#ffd804"/><rect x="1607" y="536" width="10.5" height="10.5" fill="#ffd103"/><rect x="1617" y="536" width="10.5" height="10.5" fill="#ffca02"/><rect x="1627" y="536" width="10.5" height="10.5" fill="#ffc400"/><rect x="1637" y="536" width="10.5" height="10.5" fill="#ffbd00"/><rect x="1647" y="536" width="8" height="10.5" fill="#ffb800"/><rect x="1457" y="546" width="10.5" height="10.5" fill="#acff13"/><rect x="1467" y="546" width="10.5" height="10.5" fill="#b5ff12"/><rect x="1477" y="546" width="10.5" height="10.5" fill="#bdff12"/><rect x="1487" y="546" width="10.5" height="10.5" fill="#c6ff11"/><rect x="1497" y="546" width="10.5" height="10.5" fill="#cfff10"/><rect x="1507" y="546" width="10.5" height="10.5" fill="#d8ff0f"/><rect x="1517" y="546" width="10.5" height="10.5" fill="#e1ff0f"/><rect x="1527" y="546" width="10.5" height="10.5" fill="#eaff0e"/><rect x="1537" y="546" width="10.5" height="10.5" fill="#f3ff0d"/><rect x="1547" y="546" width="10.5" height="10.5" fill="#fdff0c"/><rect x="1557" y="546" width="10.5" height="10.5" fill="#fff80b"/><rect x="1567" y="546" width="10.5" height="10.5" fill="#ffef09"/><rect x="1577" y="546" width="10.5" height="10.5" fill="#ffe708"/><rect x="1587" y="546" width="10.5" height="10.5" fill="#ffdf07"/><rect x="1597" y="546" width="10.5" height="10.5" fill="#ffd806"/><rect x="1607" y="546" width="10.5" height="10.5" fill="#ffd105"/><rect x="1617" y="546" width="10.5" height="10.5" fill="#ffca04"/><rect x="1627" y="546" width="10.5" height="10.5" fill="#ffc303"/><rect x="1637" y="546" width="10.5" height="10.5" fill="#ffbd02"/><rect x="1647" y="546" width="8" height="10.5" fill="#ffb700"/><rect x="1457" y="556" width="10.5" height="10.5" fill="#acff15"/><rect x="1467" y="556" width="10.5" height="10.5" fill="#b5ff14"/><rect x="1477" y="556" width="10.5" height="10.5" fill="#bdff13"/><rect x="1487" y="556" width="10.5" height="10.5" fill="#c6ff13"/><rect x="1497" y="556" width="10.5" height="10.5" fill="#cfff12"/><rect x="1507" y="556" width="10.5" height="10.5" fill="#d8ff11"/><rect x="1517" y="556" width="10.5" height="10.5" fill="#e1ff10"/><rect x="1527" y="556" width="10.5" height="10.5" fill="#eaff10"/><rect x="1537" y="556" width="10.5" height="10.5" fill="#f3ff0f"/><rect x="1547" y="556" width="10.5" height="10.5" fill="#fdff0e"/><rect x="1557" y="556" width="10.5" height="10.5" fill="#fff80d"/><rect x="1567" y="556" width="10.5" height="10.5" fill="#ffef0b"/><rect x="1577" y="556" width="10.5" height="10.5" fill="#ffe70a"/><rect x="1587" y="556" width="10.5" height="10.5" fill="#ffdf09"/><rect x="1597" y="556" width="10.5" height="10.5" fill="#ffd708"/><rect x="1607" y="556" width="10.5" height="10.5" fill="#ffd007"/><rect x="1617" y="556" width="10.5" height="10.5" fill="#ffca06"/><rect x="1627" y="556" width="10.5" height="10.5" fill="#ffc304"/><rect x="1637" y="556" width="10.5" height="10.5" fill="#ffbd03"/><rect x="1647" y="556" width="8" height="10.5" fill="#ffb702"/><rect x="1457" y="566" width="10.5" height="1" fill="#acff17"/><rect x="1467" y="566" width="10.5" height="1" fill="#b5ff16"/><rect x="1477" y="566" width="10.5" height="1" fill="#bdff15"/><rect x="1487" y="566" width="10.5" height="1" fill="#c6ff15"/><rect x="1497" y="566" width="10.5" height="1" fill="#cfff14"/><rect x="1507" y="566" width="10.5" height="1" fill="#d8ff13"/><rect x="1517" y="566" width="10.5" height="1" fill="#e1ff12"/><rect x="1527" y="566" width="10.5" height="1" fill="#eaff11"/><rect x="1537" y="566" width="10.5" height="1" fill="#f3ff11"/><rect x="1547" y="566" width="10.5" height="1" fill="#fdff10"/><rect x="1557" y="566" width="10.5" height="1" fill="#fff80f"/><rect x="1567" y="566" width="10.5" height="1" fill="#ffef0d"/><rect x="1577" y="566" width="10.5" height="1" fill="#ffe70c"/><rect x="1587" y="566" width="10.5" height="1" fill="#ffdf0b"/><rect x="1597" y="566" width="10.5" height="1" fill="#ffd70a"/><rect x="1607" y="566" width="10.5" height="1" fill="#ffd008"/><rect x="1617" y="566" width="10.5" height="1" fill="#ffc907"/><rect x="1627" y="566" width="10.5" height="1" fill="#ffc306"/><rect x="1637" y="566" width="10.5" height="1" fill="#ffbd05"/><rect x="1647" y="566" width="8" height="1" fill="#ffb704"/></g></svg>
<canvas id="cie" width="640" height="492" style="left:1022px;top:117px"></canvas>
<canvas id="ins" width="198" height="131" style="left:1457px;top:436px"></canvas>
<svg width="1672" height="1003" style="position:absolute;left:0;top:0" font-family='"Liberation Sans", sans-serif'><rect x="3" y="35" width="1.2" height="968" fill="#262626"/><rect x="1664" y="34" width="8" height="969" fill="url(#edge)"/><rect x="1022" y="117" width="639.5" height="491.5" fill="none" stroke="#9a9a9a" stroke-width="1.5"/><rect x="1149.4" y="141.4" width="9.8" height="9.8" fill="none" stroke="rgba(0,0,0,0.28)" stroke-width="1.8"/><rect x="1147.7" y="139.7" width="13.2" height="13.2" fill="none" stroke="#f4f4f4" stroke-width="1.8"/><rect x="1173.5" y="165.4" width="9.8" height="9.8" fill="none" stroke="rgba(0,0,0,0.28)" stroke-width="1.8"/><rect x="1171.8" y="163.7" width="13.2" height="13.2" fill="none" stroke="#f4f4f4" stroke-width="1.8"/><rect x="1213.5" y="157.5" width="9.8" height="9.8" fill="none" stroke="rgba(0,0,0,0.28)" stroke-width="1.8"/><rect x="1211.8" y="155.8" width="13.2" height="13.2" fill="none" stroke="#f4f4f4" stroke-width="1.8"/><rect x="1210.6" y="179.6" width="9.8" height="9.8" fill="none" stroke="rgba(0,0,0,0.28)" stroke-width="1.8"/><rect x="1208.9" y="177.9" width="13.2" height="13.2" fill="none" stroke="#f4f4f4" stroke-width="1.8"/><rect x="1233.7" y="149.6" width="9.8" height="9.8" fill="none" stroke="rgba(0,0,0,0.28)" stroke-width="1.8"/><rect x="1232.0" y="147.9" width="13.2" height="13.2" fill="none" stroke="#f4f4f4" stroke-width="1.8"/><rect x="1260.6" y="153.5" width="9.8" height="9.8" fill="none" stroke="rgba(0,0,0,0.28)" stroke-width="1.8"/><rect x="1258.9" y="151.8" width="13.2" height="13.2" fill="none" stroke="#f4f4f4" stroke-width="1.8"/><rect x="1292.5" y="160.5" width="9.8" height="9.8" fill="none" stroke="rgba(0,0,0,0.28)" stroke-width="1.8"/><rect x="1290.8" y="158.8" width="13.2" height="13.2" fill="none" stroke="#f4f4f4" stroke-width="1.8"/><rect x="1335.6" y="164.5" width="9.8" height="9.8" fill="none" stroke="rgba(0,0,0,0.28)" stroke-width="1.8"/><rect x="1333.9" y="162.8" width="13.2" height="13.2" fill="none" stroke="#f4f4f4" stroke-width="1.8"/><rect x="1275.5" y="193.4" width="9.8" height="9.8" fill="none" stroke="rgba(0,0,0,0.28)" stroke-width="1.8"/><rect x="1273.8" y="191.7" width="13.2" height="13.2" fill="none" stroke="#f4f4f4" stroke-width="1.8"/><rect x="1264.3" y="199.3" width="9.8" height="9.8" fill="none" stroke="rgba(0,0,0,0.28)" stroke-width="1.8"/><rect x="1262.6" y="197.6" width="13.2" height="13.2" fill="none" stroke="#f4f4f4" stroke-width="1.8"/><rect x="1180.6" y="210.5" width="9.8" height="9.8" fill="none" stroke="rgba(0,0,0,0.28)" stroke-width="1.8"/><rect x="1178.9" y="208.8" width="13.2" height="13.2" fill="none" stroke="#f4f4f4" stroke-width="1.8"/><rect x="1164.6" y="229.6" width="9.8" height="9.8" fill="none" stroke="rgba(0,0,0,0.28)" stroke-width="1.8"/><rect x="1162.9" y="227.9" width="13.2" height="13.2" fill="none" stroke="#f4f4f4" stroke-width="1.8"/><rect x="1169.4" y="261.4" width="9.8" height="9.8" fill="none" stroke="rgba(0,0,0,0.28)" stroke-width="1.8"/><rect x="1167.7" y="259.7" width="13.2" height="13.2" fill="none" stroke="#f4f4f4" stroke-width="1.8"/><rect x="1203.4" y="258.5" width="9.8" height="9.8" fill="none" stroke="rgba(0,0,0,0.28)" stroke-width="1.8"/><rect x="1201.7" y="256.8" width="13.2" height="13.2" fill="none" stroke="#f4f4f4" stroke-width="1.8"/><rect x="1224.1" y="263.5" width="9.8" height="9.8" fill="none" stroke="rgba(0,0,0,0.28)" stroke-width="1.8"/><rect x="1222.4" y="261.8" width="13.2" height="13.2" fill="none" stroke="#f4f4f4" stroke-width="1.8"/><rect x="1322.1" y="252.6" width="9.8" height="9.8" fill="none" stroke="rgba(0,0,0,0.28)" stroke-width="1.8"/><rect x="1320.4" y="250.9" width="13.2" height="13.2" fill="none" stroke="#f4f4f4" stroke-width="1.8"/><rect x="1259.6" y="281.5" width="9.8" height="9.8" fill="none" stroke="rgba(0,0,0,0.28)" stroke-width="1.8"/><rect x="1257.9" y="279.8" width="13.2" height="13.2" fill="none" stroke="#f4f4f4" stroke-width="1.8"/><rect x="1206.5" y="311.4" width="9.8" height="9.8" fill="none" stroke="rgba(0,0,0,0.28)" stroke-width="1.8"/><rect x="1204.8" y="309.7" width="13.2" height="13.2" fill="none" stroke="#f4f4f4" stroke-width="1.8"/><rect x="1341.4" y="331.4" width="9.8" height="9.8" fill="none" stroke="rgba(0,0,0,0.28)" stroke-width="1.8"/><rect x="1339.7" y="329.7" width="13.2" height="13.2" fill="none" stroke="#f4f4f4" stroke-width="1.8"/><rect x="1206.6" y="361.5" width="9.8" height="9.8" fill="none" stroke="rgba(0,0,0,0.28)" stroke-width="1.8"/><rect x="1204.9" y="359.8" width="13.2" height="13.2" fill="none" stroke="#f4f4f4" stroke-width="1.8"/><rect x="1203.6" y="473.3" width="9.8" height="9.8" fill="none" stroke="rgba(0,0,0,0.28)" stroke-width="1.8"/><rect x="1201.9" y="471.6" width="13.2" height="13.2" fill="none" stroke="#f4f4f4" stroke-width="1.8"/><rect x="1496.6" y="174.2" width="9.8" height="9.8" fill="none" stroke="rgba(0,0,0,0.28)" stroke-width="1.8"/><rect x="1494.9" y="172.5" width="13.2" height="13.2" fill="none" stroke="#f4f4f4" stroke-width="1.8"/><rect x="1415.6" y="194.7" width="9.8" height="9.8" fill="none" stroke="rgba(0,0,0,0.28)" stroke-width="1.8"/><rect x="1413.9" y="193.0" width="13.2" height="13.2" fill="none" stroke="#f4f4f4" stroke-width="1.8"/><rect x="1354.5" y="206.6" width="9.8" height="9.8" fill="none" stroke="rgba(0,0,0,0.28)" stroke-width="1.8"/><rect x="1352.8" y="204.9" width="13.2" height="13.2" fill="none" stroke="#f4f4f4" stroke-width="1.8"/><circle cx="1153.7" cy="146.3" r="4.3" fill="#00ff00" stroke="#111" stroke-width="1.5"/><circle cx="1177.4" cy="169.3" r="4.3" fill="#4e7e50" stroke="#111" stroke-width="1.5"/><circle cx="1216.8" cy="161.4" r="4.3" fill="#9aa858" stroke="#111" stroke-width="1.5"/><circle cx="1213.9" cy="182.9" r="4.3" fill="#5a6650" stroke="#111" stroke-width="1.5"/><circle cx="1236.8" cy="154.0" r="4.3" fill="#ffff00" stroke="#111" stroke-width="1.5"/><circle cx="1264.5" cy="158.4" r="4.3" fill="#e2c232" stroke="#111" stroke-width="1.5"/><circle cx="1295.5" cy="163.7" r="4.3" fill="#dea04a" stroke="#111" stroke-width="1.5"/><circle cx="1337.9" cy="167.9" r="4.3" fill="#d88a3a" stroke="#111" stroke-width="1.5"/><circle cx="1283.3" cy="196.3" r="4.3" fill="#6e524a" stroke="#111" stroke-width="1.5"/><circle cx="1266.8" cy="204.9" r="4.3" fill="#b09890" stroke="#111" stroke-width="1.5"/><circle cx="1185.5" cy="218.0" r="4.3" fill="#6aa89a" stroke="#111" stroke-width="1.5"/><circle cx="1169.1" cy="237.1" r="4.3" fill="#00ffff" stroke="#111" stroke-width="1.5"/><circle cx="1172.0" cy="267.4" r="4.3" fill="#1e8c98" stroke="#111" stroke-width="1.5"/><circle cx="1206.8" cy="265.7" r="4.3" fill="#6a7c9c" stroke="#111" stroke-width="1.5"/><circle cx="1227.4" cy="269.7" r="4.3" fill="#8c88b0" stroke="#111" stroke-width="1.5"/><circle cx="1324.3" cy="260.1" r="4.3" fill="#c06890" stroke="#111" stroke-width="1.5"/><circle cx="1265.8" cy="293.0" r="4.3" fill="#5c4470" stroke="#111" stroke-width="1.5"/><circle cx="1208.4" cy="320.3" r="4.3" fill="#5a68a0" stroke="#111" stroke-width="1.5"/><circle cx="1343.3" cy="340.7" r="4.3" fill="#ff00ff" stroke="#111" stroke-width="1.5"/><circle cx="1210.1" cy="379.0" r="4.3" fill="#4a58a0" stroke="#111" stroke-width="1.5"/><circle cx="1207.0" cy="479.6" r="4.3" fill="#0000ff" stroke="#111" stroke-width="1.5"/><circle cx="1502.6" cy="177.8" r="4.3" fill="#ff0000" stroke="#111" stroke-width="1.5"/><circle cx="1428.0" cy="197.9" r="4.3" fill="#aa4050" stroke="#111" stroke-width="1.5"/><circle cx="1357.0" cy="211.5" r="4.3" fill="#b86474" stroke="#111" stroke-width="1.5"/><rect x="1224.8" y="216.8" width="13" height="13" fill="rgba(255,255,255,0.15)" stroke="#000" stroke-width="2.6"/><circle cx="1231.3" cy="225.3" r="4.3" fill="#a0a0a0" stroke="#111" stroke-width="1.3"/><circle cx="1226.6" cy="250" r="4.6" fill="#000"/><rect x="1454" y="433" width="204" height="136" fill="none" stroke="#1e1e1e" stroke-width="3"/><rect x="1457" y="436" width="198" height="131" fill="none" stroke="#9a9a9a" stroke-width="1.5"/><rect x="1548.5" y="493.5" width="13.5" height="13.5" fill="none" stroke="#f4f4f4" stroke-width="1.8"/><circle cx="1547" cy="501" r="4.6" fill="none" stroke="#111" stroke-width="1.5"/><rect x="1404" y="575" width="254" height="28" fill="#262626"/><text x="1406.00" y="597.50" font-size="18.5" fill="#f0f0f0" text-anchor="start" font-weight="normal" textLength="212.0" lengthAdjust="spacingAndGlyphs" >RGB Triplet: 255, 255, 0</text></svg>
<script>(function(){
function enc(c){ return c<=0.0031308? 12.92*c : 1.055*Math.pow(c,1/2.4)-0.055; }
var EPS=0.011, GP=1/1.15, DARK=Math.pow(0.6,1/GP);
function col(u,v,eps){
  var d=6*u-16*v+12, x=9*u/d, y=4*v/d;
  if(y<=1e-4) y=1e-4;
  var X=x/y, Y=1, Z=(1-x-y)/y;
  var r= 3.2406*X-1.5372*Y-0.4986*Z;
  var g=-0.9689*X+1.8758*Y+0.0415*Z;
  var b= 0.0557*X-0.2040*Y+1.0570*Z;
  var m=Math.max(r,g,b); if(m<=0)m=1;
  r/=m; g/=m; b/=m;
  var ing = (r>=0&&g>=0&&b>=0&&(r+g+b)>=1+eps);
  if(r<0)r=0; if(g<0)g=0; if(b<0)b=0;
  if(!ing){ r*=DARK; g*=DARK; b*=DARK; }
  r=Math.pow(r,GP); g=Math.pow(g,GP); b=Math.pow(b,GP);
  return [r*255,g*255,b*255];
}
var LOC="1295.5,594.9;1295.4,595.0;1295.3,595.1;1295.3,595.1;1295.1,595.2;1295.0,595.3;1294.8,595.4;1294.6,595.5;1294.3,595.5;1294.0,595.5;1293.6,595.5;1293.2,595.4;1292.8,595.4;1292.3,595.3;1291.8,595.2;1291.2,595.0;1290.6,594.7;1290.0,594.3;1289.3,593.9;1288.6,593.5;1287.9,592.9;1287.1,592.3;1286.2,591.6;1285.2,590.9;1284.1,590.0;1282.9,589.0;1281.7,588.0;1280.3,586.9;1278.9,585.7;1277.3,584.4;1275.7,583.0;1273.9,581.5;1271.9,579.9;1269.9,578.2;1267.8,576.5;1265.5,574.6;1263.1,572.7;1260.6,570.7;1258.0,568.5;1255.1,566.1;1252.1,563.6;1248.8,560.7;1245.0,557.5;1241.1,554.2;1237.0,550.6;1232.9,547.1;1229.0,543.6;1225.3,540.3;1221.9,537.2;1219.0,534.5;1216.4,532.0;1214.0,529.7;1211.7,527.4;1209.5,525.1;1207.2,522.7;1204.7,520.0;1201.9,516.9;1199.0,513.6;1195.9,510.0;1192.7,506.3;1189.4,502.4;1186.0,498.3;1182.6,494.1;1179.0,489.6;1175.4,485.0;1171.8,480.2;1168.0,475.2;1164.2,469.9;1160.3,464.6;1156.3,459.0;1152.3,453.3;1148.2,447.4;1144.1,441.3;1140.0,435.1;1135.8,428.6;1131.6,421.9;1127.3,415.1;1123.0,408.1;1118.7,401.1;1114.4,394.0;1110.2,387.0;1106.0,379.8;1101.8,372.5;1097.5,365.1;1093.3,357.7;1089.2,350.2;1085.2,342.8;1081.3,335.4;1077.5,328.2;1073.9,321.0;1070.4,313.7;1067.1,306.5;1063.8,299.3;1060.6,292.2;1057.6,285.2;1054.7,278.4;1052.0,271.7;1049.4,265.3;1046.9,258.9;1044.5,252.7;1042.3,246.6;1040.2,240.7;1038.2,235.0;1036.4,229.5;1034.7,224.2;1033.1,219.1;1031.7,214.2;1030.4,209.5;1029.2,205.1;1028.2,200.7;1027.3,196.6;1026.4,192.6;1025.7,188.8;1025.1,185.2;1024.5,181.7;1024.1,178.5;1023.8,175.4;1023.6,172.4;1023.5,169.6;1023.5,166.8;1023.5,164.2;1023.7,161.7;1023.9,159.3;1024.2,157.0;1024.6,154.9;1025.1,152.8;1025.6,150.9;1026.3,149.0;1026.9,147.3;1027.7,145.6;1028.6,144.0;1029.5,142.6;1030.5,141.2;1031.6,139.9;1032.7,138.7;1033.9,137.6;1035.1,136.5;1036.3,135.6;1037.7,134.7;1039.1,133.9;1040.5,133.3;1042.0,132.6;1043.5,132.1;1045.0,131.5;1046.6,131.1;1048.2,130.6;1049.9,130.3;1051.6,130.0;1053.3,129.7;1055.0,129.5;1056.8,129.4;1058.6,129.2;1060.3,129.0;1062.2,128.9;1064.0,128.8;1065.9,128.7;1067.7,128.6;1069.6,128.6;1071.5,128.6;1073.4,128.6;1075.3,128.5;1077.2,128.5;1079.1,128.5;1081.0,128.5;1082.9,128.6;1084.8,128.6;1086.7,128.6;1088.6,128.7;1090.5,128.7;1092.5,128.8;1094.4,128.9;1096.4,128.9;1098.3,129.0;1100.3,129.1;1102.3,129.2;1104.3,129.3;1106.4,129.5;1108.4,129.6;1110.5,129.7;1112.6,129.9;1114.7,130.0;1116.9,130.2;1119.1,130.3;1121.2,130.5;1123.5,130.7;1125.7,130.9;1128.0,131.1;1130.2,131.3;1132.5,131.5;1134.9,131.7;1137.2,131.9;1139.6,132.1;1142.0,132.4;1144.5,132.6;1146.9,132.8;1149.4,133.1;1152.0,133.3;1154.5,133.6;1157.1,133.9;1159.8,134.1;1162.4,134.4;1165.1,134.7;1167.9,135.0;1170.6,135.3;1173.5,135.6;1176.3,135.9;1179.2,136.2;1182.1,136.5;1185.1,136.8;1188.0,137.2;1191.1,137.5;1194.1,137.9;1197.2,138.2;1200.4,138.6;1203.6,138.9;1206.8,139.3;1210.1,139.6;1213.4,140.0;1216.7,140.4;1220.1,140.8;1223.6,141.2;1227.1,141.5;1230.6,141.9;1234.2,142.4;1237.8,142.8;1241.4,143.2;1245.1,143.6;1248.9,144.0;1252.6,144.5;1256.5,144.9;1260.3,145.3;1264.2,145.8;1268.2,146.2;1272.2,146.7;1276.2,147.2;1280.3,147.6;1284.5,148.1;1288.6,148.6;1292.8,149.1;1297.1,149.6;1301.4,150.1;1305.7,150.6;1310.1,151.1;1314.5,151.6;1319.0,152.1;1323.5,152.6;1328.0,153.1;1332.6,153.6;1337.2,154.2;1341.8,154.7;1346.5,155.2;1351.2,155.8;1355.9,156.3;1360.7,156.9;1365.5,157.4;1370.3,158.0;1375.1,158.5;1379.9,159.1;1384.8,159.6;1389.6,160.2;1394.5,160.8;1399.4,161.3;1404.3,161.9;1409.2,162.4;1414.0,163.0;1418.8,163.5;1423.5,164.1;1428.3,164.6;1433.0,165.2;1437.7,165.7;1442.4,166.3;1447.0,166.8;1451.7,167.3;1456.4,167.9;1461.0,168.4;1465.7,168.9;1470.3,169.5;1474.9,170.0;1479.5,170.5;1484.0,171.0;1488.4,171.5;1492.6,172.0;1496.5,172.5;1500.2,172.9;1503.9,173.3;1507.8,173.7;1511.9,174.2;1516.5,174.7;1521.7,175.3;1527.6,176.0;1534.2,176.8;1541.2,177.6;1548.5,178.4;1555.9,179.3;1563.1,180.1;1569.9,180.9;1576.1,181.6;1581.7,182.2;1587.1,182.9;1592.2,183.4;1597.0,184.0;1601.7,184.5;1606.1,185.0;1610.5,185.5;1614.7,186.0;1618.8,186.5;1622.7,186.9;1626.5,187.4;1630.1,187.8;1633.5,188.2;1636.8,188.6;1639.9,188.9;1642.9,189.3;1645.8,189.6;1648.4,189.9;1650.9,190.2;1653.3,190.4;1655.5,190.7;1657.6,190.9;1659.6,191.2;1661.5,191.4;1663.3,191.6;1664.9,191.8;1666.3,191.9;1667.6,192.1;1668.9,192.2;1670.1,192.4;1671.3,192.5;1672.6,192.7;1673.9,192.8;1675.2,193.0;1676.6,193.1;1677.8,193.3;1679.1,193.4;1680.2,193.5;1681.3,193.7;1682.2,193.8;1683.0,193.9;1683.6,193.9;1684.2,194.0;1684.7,194.0;1685.0,194.1;1685.4,194.1;1685.7,194.2;1685.9,194.2".split(';').map(function(s){var p=s.split(',');return [parseFloat(p[0]),parseFloat(p[1])];});
function draw(id,ox,oy,map,clipLocus,eps){
  var cv=document.getElementById(id); if(!cv||!cv.getContext) return;
  var ctx=cv.getContext('2d'), w=cv.width, h=cv.height;
  var im=ctx.createImageData(w,h), D=im.data;
  for(var j=0;j<h;j++) for(var i=0;i<w;i++){
    var k=(j*w+i)*4, R=0,G=0,B=0;
    for(var s=0;s<4;s++){ var uv=map(i+0.25+0.5*(s&1),j+0.25+0.5*(s>>1)), c=col(uv[0],uv[1],eps); R+=c[0];G+=c[1];B+=c[2]; }
    D[k]=R/4; D[k+1]=G/4; D[k+2]=B/4; D[k+3]=255;
  }
  ctx.putImageData(im,0,0);
  if(clipLocus){
    ctx.globalCompositeOperation='destination-in';
    ctx.beginPath();
    for(var n=0;n<LOC.length;n++){ var p=LOC[n]; if(n==0) ctx.moveTo(p[0]-ox,p[1]-oy); else ctx.lineTo(p[0]-ox,p[1]-oy); }
    ctx.closePath(); ctx.fillStyle='#000'; ctx.fill();
    ctx.globalCompositeOperation='source-over';
  }
}
draw('cie',1022,117,function(i,j){ return [(i)/1065, (608.5-117-j)/818]; },true,EPS);
// inset: zoom near yellow target
var YU=0.2039, YV=0.5529, SU=3900, SVV=16500, CX=1555.3-1457, CY=500.2-436;
draw('ins',0,0,function(i,j){ return [YU+(i-CX)/SU, YV-(j-CY)/SVV]; },false,0);
})();
</script>
</body></html>
